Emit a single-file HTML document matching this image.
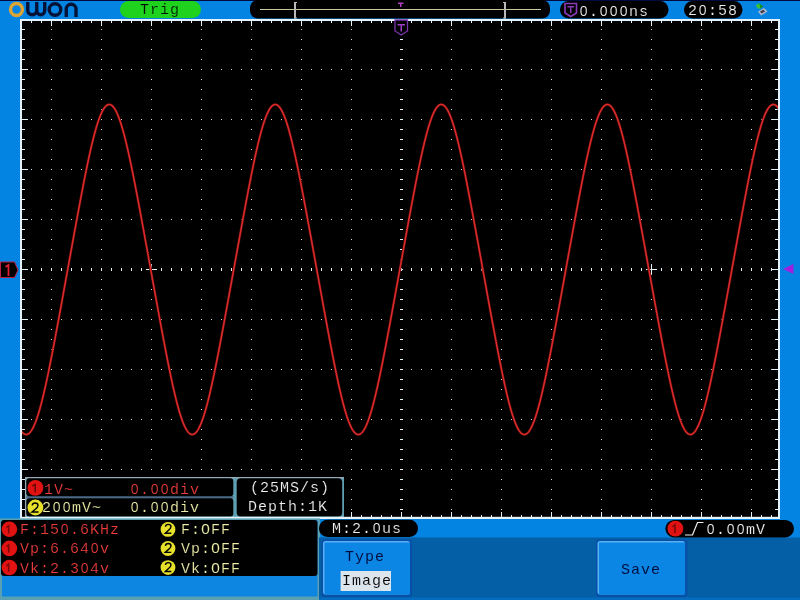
<!DOCTYPE html>
<html><head><meta charset="utf-8"><style>
html,body{margin:0;padding:0;width:800px;height:600px;overflow:hidden;background:#0484e2;position:relative;}
.z{display:inline-block;line-height:11px;width:10px;box-sizing:border-box;padding-left:0.8px;text-align:left;letter-spacing:0;font-family:"Liberation Sans",sans-serif;font-size:14px;}
.t{position:absolute;will-change:transform;font-family:"Liberation Mono",monospace;font-size:15px;letter-spacing:1px;line-height:15px;white-space:pre;}
.d{position:absolute;}
svg{position:absolute;left:0;top:0;}
</style></head><body>
<svg width="800" height="600" viewBox="0 0 800 600" shape-rendering="crispEdges">
<rect x="0" y="0" width="800" height="1" fill="#000a3c"/>
<rect x="20" y="19" width="760" height="500" fill="#e4f2fc"/><rect x="22" y="21" width="756" height="496" fill="#000"/><rect x="31" y="21" width="1" height="2" fill="#e4f2fc"/><rect x="31" y="515" width="1" height="2" fill="#e4f2fc"/><rect x="41" y="21" width="1" height="2" fill="#e4f2fc"/><rect x="41" y="515" width="1" height="2" fill="#e4f2fc"/><rect x="51" y="21" width="1" height="5" fill="#e4f2fc"/><rect x="51" y="512" width="1" height="5" fill="#e4f2fc"/><rect x="61" y="21" width="1" height="2" fill="#e4f2fc"/><rect x="61" y="515" width="1" height="2" fill="#e4f2fc"/><rect x="71" y="21" width="1" height="2" fill="#e4f2fc"/><rect x="71" y="515" width="1" height="2" fill="#e4f2fc"/><rect x="81" y="21" width="1" height="2" fill="#e4f2fc"/><rect x="81" y="515" width="1" height="2" fill="#e4f2fc"/><rect x="91" y="21" width="1" height="2" fill="#e4f2fc"/><rect x="91" y="515" width="1" height="2" fill="#e4f2fc"/><rect x="101" y="21" width="1" height="5" fill="#e4f2fc"/><rect x="101" y="512" width="1" height="5" fill="#e4f2fc"/><rect x="111" y="21" width="1" height="2" fill="#e4f2fc"/><rect x="111" y="515" width="1" height="2" fill="#e4f2fc"/><rect x="121" y="21" width="1" height="2" fill="#e4f2fc"/><rect x="121" y="515" width="1" height="2" fill="#e4f2fc"/><rect x="131" y="21" width="1" height="2" fill="#e4f2fc"/><rect x="131" y="515" width="1" height="2" fill="#e4f2fc"/><rect x="141" y="21" width="1" height="2" fill="#e4f2fc"/><rect x="141" y="515" width="1" height="2" fill="#e4f2fc"/><rect x="151" y="21" width="1" height="5" fill="#e4f2fc"/><rect x="151" y="512" width="1" height="5" fill="#e4f2fc"/><rect x="161" y="21" width="1" height="2" fill="#e4f2fc"/><rect x="161" y="515" width="1" height="2" fill="#e4f2fc"/><rect x="171" y="21" width="1" height="2" fill="#e4f2fc"/><rect x="171" y="515" width="1" height="2" fill="#e4f2fc"/><rect x="181" y="21" width="1" height="2" fill="#e4f2fc"/><rect x="181" y="515" width="1" height="2" fill="#e4f2fc"/><rect x="191" y="21" width="1" height="2" fill="#e4f2fc"/><rect x="191" y="515" width="1" height="2" fill="#e4f2fc"/><rect x="201" y="21" width="1" height="5" fill="#e4f2fc"/><rect x="201" y="512" width="1" height="5" fill="#e4f2fc"/><rect x="211" y="21" width="1" height="2" fill="#e4f2fc"/><rect x="211" y="515" width="1" height="2" fill="#e4f2fc"/><rect x="221" y="21" width="1" height="2" fill="#e4f2fc"/><rect x="221" y="515" width="1" height="2" fill="#e4f2fc"/><rect x="231" y="21" width="1" height="2" fill="#e4f2fc"/><rect x="231" y="515" width="1" height="2" fill="#e4f2fc"/><rect x="241" y="21" width="1" height="2" fill="#e4f2fc"/><rect x="241" y="515" width="1" height="2" fill="#e4f2fc"/><rect x="251" y="21" width="1" height="5" fill="#e4f2fc"/><rect x="251" y="512" width="1" height="5" fill="#e4f2fc"/><rect x="261" y="21" width="1" height="2" fill="#e4f2fc"/><rect x="261" y="515" width="1" height="2" fill="#e4f2fc"/><rect x="271" y="21" width="1" height="2" fill="#e4f2fc"/><rect x="271" y="515" width="1" height="2" fill="#e4f2fc"/><rect x="281" y="21" width="1" height="2" fill="#e4f2fc"/><rect x="281" y="515" width="1" height="2" fill="#e4f2fc"/><rect x="291" y="21" width="1" height="2" fill="#e4f2fc"/><rect x="291" y="515" width="1" height="2" fill="#e4f2fc"/><rect x="301" y="21" width="1" height="5" fill="#e4f2fc"/><rect x="301" y="512" width="1" height="5" fill="#e4f2fc"/><rect x="311" y="21" width="1" height="2" fill="#e4f2fc"/><rect x="311" y="515" width="1" height="2" fill="#e4f2fc"/><rect x="321" y="21" width="1" height="2" fill="#e4f2fc"/><rect x="321" y="515" width="1" height="2" fill="#e4f2fc"/><rect x="331" y="21" width="1" height="2" fill="#e4f2fc"/><rect x="331" y="515" width="1" height="2" fill="#e4f2fc"/><rect x="341" y="21" width="1" height="2" fill="#e4f2fc"/><rect x="341" y="515" width="1" height="2" fill="#e4f2fc"/><rect x="351" y="21" width="1" height="5" fill="#e4f2fc"/><rect x="351" y="512" width="1" height="5" fill="#e4f2fc"/><rect x="361" y="21" width="1" height="2" fill="#e4f2fc"/><rect x="361" y="515" width="1" height="2" fill="#e4f2fc"/><rect x="371" y="21" width="1" height="2" fill="#e4f2fc"/><rect x="371" y="515" width="1" height="2" fill="#e4f2fc"/><rect x="381" y="21" width="1" height="2" fill="#e4f2fc"/><rect x="381" y="515" width="1" height="2" fill="#e4f2fc"/><rect x="391" y="21" width="1" height="2" fill="#e4f2fc"/><rect x="391" y="515" width="1" height="2" fill="#e4f2fc"/><rect x="401" y="21" width="1" height="5" fill="#e4f2fc"/><rect x="401" y="512" width="1" height="5" fill="#e4f2fc"/><rect x="411" y="21" width="1" height="2" fill="#e4f2fc"/><rect x="411" y="515" width="1" height="2" fill="#e4f2fc"/><rect x="421" y="21" width="1" height="2" fill="#e4f2fc"/><rect x="421" y="515" width="1" height="2" fill="#e4f2fc"/><rect x="431" y="21" width="1" height="2" fill="#e4f2fc"/><rect x="431" y="515" width="1" height="2" fill="#e4f2fc"/><rect x="441" y="21" width="1" height="2" fill="#e4f2fc"/><rect x="441" y="515" width="1" height="2" fill="#e4f2fc"/><rect x="451" y="21" width="1" height="5" fill="#e4f2fc"/><rect x="451" y="512" width="1" height="5" fill="#e4f2fc"/><rect x="461" y="21" width="1" height="2" fill="#e4f2fc"/><rect x="461" y="515" width="1" height="2" fill="#e4f2fc"/><rect x="471" y="21" width="1" height="2" fill="#e4f2fc"/><rect x="471" y="515" width="1" height="2" fill="#e4f2fc"/><rect x="481" y="21" width="1" height="2" fill="#e4f2fc"/><rect x="481" y="515" width="1" height="2" fill="#e4f2fc"/><rect x="491" y="21" width="1" height="2" fill="#e4f2fc"/><rect x="491" y="515" width="1" height="2" fill="#e4f2fc"/><rect x="501" y="21" width="1" height="5" fill="#e4f2fc"/><rect x="501" y="512" width="1" height="5" fill="#e4f2fc"/><rect x="511" y="21" width="1" height="2" fill="#e4f2fc"/><rect x="511" y="515" width="1" height="2" fill="#e4f2fc"/><rect x="521" y="21" width="1" height="2" fill="#e4f2fc"/><rect x="521" y="515" width="1" height="2" fill="#e4f2fc"/><rect x="531" y="21" width="1" height="2" fill="#e4f2fc"/><rect x="531" y="515" width="1" height="2" fill="#e4f2fc"/><rect x="541" y="21" width="1" height="2" fill="#e4f2fc"/><rect x="541" y="515" width="1" height="2" fill="#e4f2fc"/><rect x="551" y="21" width="1" height="5" fill="#e4f2fc"/><rect x="551" y="512" width="1" height="5" fill="#e4f2fc"/><rect x="561" y="21" width="1" height="2" fill="#e4f2fc"/><rect x="561" y="515" width="1" height="2" fill="#e4f2fc"/><rect x="571" y="21" width="1" height="2" fill="#e4f2fc"/><rect x="571" y="515" width="1" height="2" fill="#e4f2fc"/><rect x="581" y="21" width="1" height="2" fill="#e4f2fc"/><rect x="581" y="515" width="1" height="2" fill="#e4f2fc"/><rect x="591" y="21" width="1" height="2" fill="#e4f2fc"/><rect x="591" y="515" width="1" height="2" fill="#e4f2fc"/><rect x="601" y="21" width="1" height="5" fill="#e4f2fc"/><rect x="601" y="512" width="1" height="5" fill="#e4f2fc"/><rect x="611" y="21" width="1" height="2" fill="#e4f2fc"/><rect x="611" y="515" width="1" height="2" fill="#e4f2fc"/><rect x="621" y="21" width="1" height="2" fill="#e4f2fc"/><rect x="621" y="515" width="1" height="2" fill="#e4f2fc"/><rect x="631" y="21" width="1" height="2" fill="#e4f2fc"/><rect x="631" y="515" width="1" height="2" fill="#e4f2fc"/><rect x="641" y="21" width="1" height="2" fill="#e4f2fc"/><rect x="641" y="515" width="1" height="2" fill="#e4f2fc"/><rect x="651" y="21" width="1" height="5" fill="#e4f2fc"/><rect x="651" y="512" width="1" height="5" fill="#e4f2fc"/><rect x="661" y="21" width="1" height="2" fill="#e4f2fc"/><rect x="661" y="515" width="1" height="2" fill="#e4f2fc"/><rect x="671" y="21" width="1" height="2" fill="#e4f2fc"/><rect x="671" y="515" width="1" height="2" fill="#e4f2fc"/><rect x="681" y="21" width="1" height="2" fill="#e4f2fc"/><rect x="681" y="515" width="1" height="2" fill="#e4f2fc"/><rect x="691" y="21" width="1" height="2" fill="#e4f2fc"/><rect x="691" y="515" width="1" height="2" fill="#e4f2fc"/><rect x="701" y="21" width="1" height="5" fill="#e4f2fc"/><rect x="701" y="512" width="1" height="5" fill="#e4f2fc"/><rect x="711" y="21" width="1" height="2" fill="#e4f2fc"/><rect x="711" y="515" width="1" height="2" fill="#e4f2fc"/><rect x="721" y="21" width="1" height="2" fill="#e4f2fc"/><rect x="721" y="515" width="1" height="2" fill="#e4f2fc"/><rect x="731" y="21" width="1" height="2" fill="#e4f2fc"/><rect x="731" y="515" width="1" height="2" fill="#e4f2fc"/><rect x="741" y="21" width="1" height="2" fill="#e4f2fc"/><rect x="741" y="515" width="1" height="2" fill="#e4f2fc"/><rect x="751" y="21" width="1" height="5" fill="#e4f2fc"/><rect x="751" y="512" width="1" height="5" fill="#e4f2fc"/><rect x="761" y="21" width="1" height="2" fill="#e4f2fc"/><rect x="761" y="515" width="1" height="2" fill="#e4f2fc"/><rect x="771" y="21" width="1" height="2" fill="#e4f2fc"/><rect x="771" y="515" width="1" height="2" fill="#e4f2fc"/><rect x="22" y="29" width="3" height="1" fill="#e4f2fc"/><rect x="775" y="29" width="3" height="1" fill="#e4f2fc"/><rect x="22" y="39" width="3" height="1" fill="#e4f2fc"/><rect x="775" y="39" width="3" height="1" fill="#e4f2fc"/><rect x="22" y="49" width="3" height="1" fill="#e4f2fc"/><rect x="775" y="49" width="3" height="1" fill="#e4f2fc"/><rect x="22" y="59" width="3" height="1" fill="#e4f2fc"/><rect x="775" y="59" width="3" height="1" fill="#e4f2fc"/><rect x="22" y="69" width="6" height="1" fill="#e4f2fc"/><rect x="772" y="69" width="6" height="1" fill="#e4f2fc"/><rect x="22" y="79" width="3" height="1" fill="#e4f2fc"/><rect x="775" y="79" width="3" height="1" fill="#e4f2fc"/><rect x="22" y="89" width="3" height="1" fill="#e4f2fc"/><rect x="775" y="89" width="3" height="1" fill="#e4f2fc"/><rect x="22" y="99" width="3" height="1" fill="#e4f2fc"/><rect x="775" y="99" width="3" height="1" fill="#e4f2fc"/><rect x="22" y="109" width="3" height="1" fill="#e4f2fc"/><rect x="775" y="109" width="3" height="1" fill="#e4f2fc"/><rect x="22" y="119" width="6" height="1" fill="#e4f2fc"/><rect x="772" y="119" width="6" height="1" fill="#e4f2fc"/><rect x="22" y="129" width="3" height="1" fill="#e4f2fc"/><rect x="775" y="129" width="3" height="1" fill="#e4f2fc"/><rect x="22" y="139" width="3" height="1" fill="#e4f2fc"/><rect x="775" y="139" width="3" height="1" fill="#e4f2fc"/><rect x="22" y="149" width="3" height="1" fill="#e4f2fc"/><rect x="775" y="149" width="3" height="1" fill="#e4f2fc"/><rect x="22" y="159" width="3" height="1" fill="#e4f2fc"/><rect x="775" y="159" width="3" height="1" fill="#e4f2fc"/><rect x="22" y="169" width="6" height="1" fill="#e4f2fc"/><rect x="772" y="169" width="6" height="1" fill="#e4f2fc"/><rect x="22" y="179" width="3" height="1" fill="#e4f2fc"/><rect x="775" y="179" width="3" height="1" fill="#e4f2fc"/><rect x="22" y="189" width="3" height="1" fill="#e4f2fc"/><rect x="775" y="189" width="3" height="1" fill="#e4f2fc"/><rect x="22" y="199" width="3" height="1" fill="#e4f2fc"/><rect x="775" y="199" width="3" height="1" fill="#e4f2fc"/><rect x="22" y="209" width="3" height="1" fill="#e4f2fc"/><rect x="775" y="209" width="3" height="1" fill="#e4f2fc"/><rect x="22" y="219" width="6" height="1" fill="#e4f2fc"/><rect x="772" y="219" width="6" height="1" fill="#e4f2fc"/><rect x="22" y="229" width="3" height="1" fill="#e4f2fc"/><rect x="775" y="229" width="3" height="1" fill="#e4f2fc"/><rect x="22" y="239" width="3" height="1" fill="#e4f2fc"/><rect x="775" y="239" width="3" height="1" fill="#e4f2fc"/><rect x="22" y="249" width="3" height="1" fill="#e4f2fc"/><rect x="775" y="249" width="3" height="1" fill="#e4f2fc"/><rect x="22" y="259" width="3" height="1" fill="#e4f2fc"/><rect x="775" y="259" width="3" height="1" fill="#e4f2fc"/><rect x="22" y="269" width="6" height="1" fill="#e4f2fc"/><rect x="772" y="269" width="6" height="1" fill="#e4f2fc"/><rect x="22" y="279" width="3" height="1" fill="#e4f2fc"/><rect x="775" y="279" width="3" height="1" fill="#e4f2fc"/><rect x="22" y="289" width="3" height="1" fill="#e4f2fc"/><rect x="775" y="289" width="3" height="1" fill="#e4f2fc"/><rect x="22" y="299" width="3" height="1" fill="#e4f2fc"/><rect x="775" y="299" width="3" height="1" fill="#e4f2fc"/><rect x="22" y="309" width="3" height="1" fill="#e4f2fc"/><rect x="775" y="309" width="3" height="1" fill="#e4f2fc"/><rect x="22" y="319" width="6" height="1" fill="#e4f2fc"/><rect x="772" y="319" width="6" height="1" fill="#e4f2fc"/><rect x="22" y="329" width="3" height="1" fill="#e4f2fc"/><rect x="775" y="329" width="3" height="1" fill="#e4f2fc"/><rect x="22" y="339" width="3" height="1" fill="#e4f2fc"/><rect x="775" y="339" width="3" height="1" fill="#e4f2fc"/><rect x="22" y="349" width="3" height="1" fill="#e4f2fc"/><rect x="775" y="349" width="3" height="1" fill="#e4f2fc"/><rect x="22" y="359" width="3" height="1" fill="#e4f2fc"/><rect x="775" y="359" width="3" height="1" fill="#e4f2fc"/><rect x="22" y="369" width="6" height="1" fill="#e4f2fc"/><rect x="772" y="369" width="6" height="1" fill="#e4f2fc"/><rect x="22" y="379" width="3" height="1" fill="#e4f2fc"/><rect x="775" y="379" width="3" height="1" fill="#e4f2fc"/><rect x="22" y="389" width="3" height="1" fill="#e4f2fc"/><rect x="775" y="389" width="3" height="1" fill="#e4f2fc"/><rect x="22" y="399" width="3" height="1" fill="#e4f2fc"/><rect x="775" y="399" width="3" height="1" fill="#e4f2fc"/><rect x="22" y="409" width="3" height="1" fill="#e4f2fc"/><rect x="775" y="409" width="3" height="1" fill="#e4f2fc"/><rect x="22" y="419" width="6" height="1" fill="#e4f2fc"/><rect x="772" y="419" width="6" height="1" fill="#e4f2fc"/><rect x="22" y="429" width="3" height="1" fill="#e4f2fc"/><rect x="775" y="429" width="3" height="1" fill="#e4f2fc"/><rect x="22" y="439" width="3" height="1" fill="#e4f2fc"/><rect x="775" y="439" width="3" height="1" fill="#e4f2fc"/><rect x="22" y="449" width="3" height="1" fill="#e4f2fc"/><rect x="775" y="449" width="3" height="1" fill="#e4f2fc"/><rect x="22" y="459" width="3" height="1" fill="#e4f2fc"/><rect x="775" y="459" width="3" height="1" fill="#e4f2fc"/><rect x="22" y="469" width="6" height="1" fill="#e4f2fc"/><rect x="772" y="469" width="6" height="1" fill="#e4f2fc"/><rect x="22" y="479" width="3" height="1" fill="#e4f2fc"/><rect x="775" y="479" width="3" height="1" fill="#e4f2fc"/><rect x="22" y="489" width="3" height="1" fill="#e4f2fc"/><rect x="775" y="489" width="3" height="1" fill="#e4f2fc"/><rect x="22" y="499" width="3" height="1" fill="#e4f2fc"/><rect x="775" y="499" width="3" height="1" fill="#e4f2fc"/><rect x="22" y="509" width="3" height="1" fill="#e4f2fc"/><rect x="775" y="509" width="3" height="1" fill="#e4f2fc"/><rect x="51" y="29" width="1" height="1" fill="#d8d8d8"/><rect x="51" y="39" width="1" height="1" fill="#d8d8d8"/><rect x="51" y="49" width="1" height="1" fill="#d8d8d8"/><rect x="51" y="59" width="1" height="1" fill="#d8d8d8"/><rect x="51" y="79" width="1" height="1" fill="#d8d8d8"/><rect x="51" y="89" width="1" height="1" fill="#d8d8d8"/><rect x="51" y="99" width="1" height="1" fill="#d8d8d8"/><rect x="51" y="109" width="1" height="1" fill="#d8d8d8"/><rect x="51" y="129" width="1" height="1" fill="#d8d8d8"/><rect x="51" y="139" width="1" height="1" fill="#d8d8d8"/><rect x="51" y="149" width="1" height="1" fill="#d8d8d8"/><rect x="51" y="159" width="1" height="1" fill="#d8d8d8"/><rect x="51" y="179" width="1" height="1" fill="#d8d8d8"/><rect x="51" y="189" width="1" height="1" fill="#d8d8d8"/><rect x="51" y="199" width="1" height="1" fill="#d8d8d8"/><rect x="51" y="209" width="1" height="1" fill="#d8d8d8"/><rect x="51" y="229" width="1" height="1" fill="#d8d8d8"/><rect x="51" y="239" width="1" height="1" fill="#d8d8d8"/><rect x="51" y="249" width="1" height="1" fill="#d8d8d8"/><rect x="51" y="259" width="1" height="1" fill="#d8d8d8"/><rect x="51" y="279" width="1" height="1" fill="#d8d8d8"/><rect x="51" y="289" width="1" height="1" fill="#d8d8d8"/><rect x="51" y="299" width="1" height="1" fill="#d8d8d8"/><rect x="51" y="309" width="1" height="1" fill="#d8d8d8"/><rect x="51" y="329" width="1" height="1" fill="#d8d8d8"/><rect x="51" y="339" width="1" height="1" fill="#d8d8d8"/><rect x="51" y="349" width="1" height="1" fill="#d8d8d8"/><rect x="51" y="359" width="1" height="1" fill="#d8d8d8"/><rect x="51" y="379" width="1" height="1" fill="#d8d8d8"/><rect x="51" y="389" width="1" height="1" fill="#d8d8d8"/><rect x="51" y="399" width="1" height="1" fill="#d8d8d8"/><rect x="51" y="409" width="1" height="1" fill="#d8d8d8"/><rect x="51" y="429" width="1" height="1" fill="#d8d8d8"/><rect x="51" y="439" width="1" height="1" fill="#d8d8d8"/><rect x="51" y="449" width="1" height="1" fill="#d8d8d8"/><rect x="51" y="459" width="1" height="1" fill="#d8d8d8"/><rect x="51" y="479" width="1" height="1" fill="#d8d8d8"/><rect x="51" y="489" width="1" height="1" fill="#d8d8d8"/><rect x="51" y="499" width="1" height="1" fill="#d8d8d8"/><rect x="51" y="509" width="1" height="1" fill="#d8d8d8"/><rect x="101" y="29" width="1" height="1" fill="#d8d8d8"/><rect x="101" y="39" width="1" height="1" fill="#d8d8d8"/><rect x="101" y="49" width="1" height="1" fill="#d8d8d8"/><rect x="101" y="59" width="1" height="1" fill="#d8d8d8"/><rect x="101" y="79" width="1" height="1" fill="#d8d8d8"/><rect x="101" y="89" width="1" height="1" fill="#d8d8d8"/><rect x="101" y="99" width="1" height="1" fill="#d8d8d8"/><rect x="101" y="109" width="1" height="1" fill="#d8d8d8"/><rect x="101" y="129" width="1" height="1" fill="#d8d8d8"/><rect x="101" y="139" width="1" height="1" fill="#d8d8d8"/><rect x="101" y="149" width="1" height="1" fill="#d8d8d8"/><rect x="101" y="159" width="1" height="1" fill="#d8d8d8"/><rect x="101" y="179" width="1" height="1" fill="#d8d8d8"/><rect x="101" y="189" width="1" height="1" fill="#d8d8d8"/><rect x="101" y="199" width="1" height="1" fill="#d8d8d8"/><rect x="101" y="209" width="1" height="1" fill="#d8d8d8"/><rect x="101" y="229" width="1" height="1" fill="#d8d8d8"/><rect x="101" y="239" width="1" height="1" fill="#d8d8d8"/><rect x="101" y="249" width="1" height="1" fill="#d8d8d8"/><rect x="101" y="259" width="1" height="1" fill="#d8d8d8"/><rect x="101" y="279" width="1" height="1" fill="#d8d8d8"/><rect x="101" y="289" width="1" height="1" fill="#d8d8d8"/><rect x="101" y="299" width="1" height="1" fill="#d8d8d8"/><rect x="101" y="309" width="1" height="1" fill="#d8d8d8"/><rect x="101" y="329" width="1" height="1" fill="#d8d8d8"/><rect x="101" y="339" width="1" height="1" fill="#d8d8d8"/><rect x="101" y="349" width="1" height="1" fill="#d8d8d8"/><rect x="101" y="359" width="1" height="1" fill="#d8d8d8"/><rect x="101" y="379" width="1" height="1" fill="#d8d8d8"/><rect x="101" y="389" width="1" height="1" fill="#d8d8d8"/><rect x="101" y="399" width="1" height="1" fill="#d8d8d8"/><rect x="101" y="409" width="1" height="1" fill="#d8d8d8"/><rect x="101" y="429" width="1" height="1" fill="#d8d8d8"/><rect x="101" y="439" width="1" height="1" fill="#d8d8d8"/><rect x="101" y="449" width="1" height="1" fill="#d8d8d8"/><rect x="101" y="459" width="1" height="1" fill="#d8d8d8"/><rect x="101" y="479" width="1" height="1" fill="#d8d8d8"/><rect x="101" y="489" width="1" height="1" fill="#d8d8d8"/><rect x="101" y="499" width="1" height="1" fill="#d8d8d8"/><rect x="101" y="509" width="1" height="1" fill="#d8d8d8"/><rect x="151" y="29" width="1" height="1" fill="#d8d8d8"/><rect x="151" y="39" width="1" height="1" fill="#d8d8d8"/><rect x="151" y="49" width="1" height="1" fill="#d8d8d8"/><rect x="151" y="59" width="1" height="1" fill="#d8d8d8"/><rect x="151" y="79" width="1" height="1" fill="#d8d8d8"/><rect x="151" y="89" width="1" height="1" fill="#d8d8d8"/><rect x="151" y="99" width="1" height="1" fill="#d8d8d8"/><rect x="151" y="109" width="1" height="1" fill="#d8d8d8"/><rect x="151" y="129" width="1" height="1" fill="#d8d8d8"/><rect x="151" y="139" width="1" height="1" fill="#d8d8d8"/><rect x="151" y="149" width="1" height="1" fill="#d8d8d8"/><rect x="151" y="159" width="1" height="1" fill="#d8d8d8"/><rect x="151" y="179" width="1" height="1" fill="#d8d8d8"/><rect x="151" y="189" width="1" height="1" fill="#d8d8d8"/><rect x="151" y="199" width="1" height="1" fill="#d8d8d8"/><rect x="151" y="209" width="1" height="1" fill="#d8d8d8"/><rect x="151" y="229" width="1" height="1" fill="#d8d8d8"/><rect x="151" y="239" width="1" height="1" fill="#d8d8d8"/><rect x="151" y="249" width="1" height="1" fill="#d8d8d8"/><rect x="151" y="259" width="1" height="1" fill="#d8d8d8"/><rect x="151" y="279" width="1" height="1" fill="#d8d8d8"/><rect x="151" y="289" width="1" height="1" fill="#d8d8d8"/><rect x="151" y="299" width="1" height="1" fill="#d8d8d8"/><rect x="151" y="309" width="1" height="1" fill="#d8d8d8"/><rect x="151" y="329" width="1" height="1" fill="#d8d8d8"/><rect x="151" y="339" width="1" height="1" fill="#d8d8d8"/><rect x="151" y="349" width="1" height="1" fill="#d8d8d8"/><rect x="151" y="359" width="1" height="1" fill="#d8d8d8"/><rect x="151" y="379" width="1" height="1" fill="#d8d8d8"/><rect x="151" y="389" width="1" height="1" fill="#d8d8d8"/><rect x="151" y="399" width="1" height="1" fill="#d8d8d8"/><rect x="151" y="409" width="1" height="1" fill="#d8d8d8"/><rect x="151" y="429" width="1" height="1" fill="#d8d8d8"/><rect x="151" y="439" width="1" height="1" fill="#d8d8d8"/><rect x="151" y="449" width="1" height="1" fill="#d8d8d8"/><rect x="151" y="459" width="1" height="1" fill="#d8d8d8"/><rect x="151" y="479" width="1" height="1" fill="#d8d8d8"/><rect x="151" y="489" width="1" height="1" fill="#d8d8d8"/><rect x="151" y="499" width="1" height="1" fill="#d8d8d8"/><rect x="151" y="509" width="1" height="1" fill="#d8d8d8"/><rect x="201" y="29" width="1" height="1" fill="#d8d8d8"/><rect x="201" y="39" width="1" height="1" fill="#d8d8d8"/><rect x="201" y="49" width="1" height="1" fill="#d8d8d8"/><rect x="201" y="59" width="1" height="1" fill="#d8d8d8"/><rect x="201" y="79" width="1" height="1" fill="#d8d8d8"/><rect x="201" y="89" width="1" height="1" fill="#d8d8d8"/><rect x="201" y="99" width="1" height="1" fill="#d8d8d8"/><rect x="201" y="109" width="1" height="1" fill="#d8d8d8"/><rect x="201" y="129" width="1" height="1" fill="#d8d8d8"/><rect x="201" y="139" width="1" height="1" fill="#d8d8d8"/><rect x="201" y="149" width="1" height="1" fill="#d8d8d8"/><rect x="201" y="159" width="1" height="1" fill="#d8d8d8"/><rect x="201" y="179" width="1" height="1" fill="#d8d8d8"/><rect x="201" y="189" width="1" height="1" fill="#d8d8d8"/><rect x="201" y="199" width="1" height="1" fill="#d8d8d8"/><rect x="201" y="209" width="1" height="1" fill="#d8d8d8"/><rect x="201" y="229" width="1" height="1" fill="#d8d8d8"/><rect x="201" y="239" width="1" height="1" fill="#d8d8d8"/><rect x="201" y="249" width="1" height="1" fill="#d8d8d8"/><rect x="201" y="259" width="1" height="1" fill="#d8d8d8"/><rect x="201" y="279" width="1" height="1" fill="#d8d8d8"/><rect x="201" y="289" width="1" height="1" fill="#d8d8d8"/><rect x="201" y="299" width="1" height="1" fill="#d8d8d8"/><rect x="201" y="309" width="1" height="1" fill="#d8d8d8"/><rect x="201" y="329" width="1" height="1" fill="#d8d8d8"/><rect x="201" y="339" width="1" height="1" fill="#d8d8d8"/><rect x="201" y="349" width="1" height="1" fill="#d8d8d8"/><rect x="201" y="359" width="1" height="1" fill="#d8d8d8"/><rect x="201" y="379" width="1" height="1" fill="#d8d8d8"/><rect x="201" y="389" width="1" height="1" fill="#d8d8d8"/><rect x="201" y="399" width="1" height="1" fill="#d8d8d8"/><rect x="201" y="409" width="1" height="1" fill="#d8d8d8"/><rect x="201" y="429" width="1" height="1" fill="#d8d8d8"/><rect x="201" y="439" width="1" height="1" fill="#d8d8d8"/><rect x="201" y="449" width="1" height="1" fill="#d8d8d8"/><rect x="201" y="459" width="1" height="1" fill="#d8d8d8"/><rect x="201" y="479" width="1" height="1" fill="#d8d8d8"/><rect x="201" y="489" width="1" height="1" fill="#d8d8d8"/><rect x="201" y="499" width="1" height="1" fill="#d8d8d8"/><rect x="201" y="509" width="1" height="1" fill="#d8d8d8"/><rect x="251" y="29" width="1" height="1" fill="#d8d8d8"/><rect x="251" y="39" width="1" height="1" fill="#d8d8d8"/><rect x="251" y="49" width="1" height="1" fill="#d8d8d8"/><rect x="251" y="59" width="1" height="1" fill="#d8d8d8"/><rect x="251" y="79" width="1" height="1" fill="#d8d8d8"/><rect x="251" y="89" width="1" height="1" fill="#d8d8d8"/><rect x="251" y="99" width="1" height="1" fill="#d8d8d8"/><rect x="251" y="109" width="1" height="1" fill="#d8d8d8"/><rect x="251" y="129" width="1" height="1" fill="#d8d8d8"/><rect x="251" y="139" width="1" height="1" fill="#d8d8d8"/><rect x="251" y="149" width="1" height="1" fill="#d8d8d8"/><rect x="251" y="159" width="1" height="1" fill="#d8d8d8"/><rect x="251" y="179" width="1" height="1" fill="#d8d8d8"/><rect x="251" y="189" width="1" height="1" fill="#d8d8d8"/><rect x="251" y="199" width="1" height="1" fill="#d8d8d8"/><rect x="251" y="209" width="1" height="1" fill="#d8d8d8"/><rect x="251" y="229" width="1" height="1" fill="#d8d8d8"/><rect x="251" y="239" width="1" height="1" fill="#d8d8d8"/><rect x="251" y="249" width="1" height="1" fill="#d8d8d8"/><rect x="251" y="259" width="1" height="1" fill="#d8d8d8"/><rect x="251" y="279" width="1" height="1" fill="#d8d8d8"/><rect x="251" y="289" width="1" height="1" fill="#d8d8d8"/><rect x="251" y="299" width="1" height="1" fill="#d8d8d8"/><rect x="251" y="309" width="1" height="1" fill="#d8d8d8"/><rect x="251" y="329" width="1" height="1" fill="#d8d8d8"/><rect x="251" y="339" width="1" height="1" fill="#d8d8d8"/><rect x="251" y="349" width="1" height="1" fill="#d8d8d8"/><rect x="251" y="359" width="1" height="1" fill="#d8d8d8"/><rect x="251" y="379" width="1" height="1" fill="#d8d8d8"/><rect x="251" y="389" width="1" height="1" fill="#d8d8d8"/><rect x="251" y="399" width="1" height="1" fill="#d8d8d8"/><rect x="251" y="409" width="1" height="1" fill="#d8d8d8"/><rect x="251" y="429" width="1" height="1" fill="#d8d8d8"/><rect x="251" y="439" width="1" height="1" fill="#d8d8d8"/><rect x="251" y="449" width="1" height="1" fill="#d8d8d8"/><rect x="251" y="459" width="1" height="1" fill="#d8d8d8"/><rect x="251" y="479" width="1" height="1" fill="#d8d8d8"/><rect x="251" y="489" width="1" height="1" fill="#d8d8d8"/><rect x="251" y="499" width="1" height="1" fill="#d8d8d8"/><rect x="251" y="509" width="1" height="1" fill="#d8d8d8"/><rect x="301" y="29" width="1" height="1" fill="#d8d8d8"/><rect x="301" y="39" width="1" height="1" fill="#d8d8d8"/><rect x="301" y="49" width="1" height="1" fill="#d8d8d8"/><rect x="301" y="59" width="1" height="1" fill="#d8d8d8"/><rect x="301" y="79" width="1" height="1" fill="#d8d8d8"/><rect x="301" y="89" width="1" height="1" fill="#d8d8d8"/><rect x="301" y="99" width="1" height="1" fill="#d8d8d8"/><rect x="301" y="109" width="1" height="1" fill="#d8d8d8"/><rect x="301" y="129" width="1" height="1" fill="#d8d8d8"/><rect x="301" y="139" width="1" height="1" fill="#d8d8d8"/><rect x="301" y="149" width="1" height="1" fill="#d8d8d8"/><rect x="301" y="159" width="1" height="1" fill="#d8d8d8"/><rect x="301" y="179" width="1" height="1" fill="#d8d8d8"/><rect x="301" y="189" width="1" height="1" fill="#d8d8d8"/><rect x="301" y="199" width="1" height="1" fill="#d8d8d8"/><rect x="301" y="209" width="1" height="1" fill="#d8d8d8"/><rect x="301" y="229" width="1" height="1" fill="#d8d8d8"/><rect x="301" y="239" width="1" height="1" fill="#d8d8d8"/><rect x="301" y="249" width="1" height="1" fill="#d8d8d8"/><rect x="301" y="259" width="1" height="1" fill="#d8d8d8"/><rect x="301" y="279" width="1" height="1" fill="#d8d8d8"/><rect x="301" y="289" width="1" height="1" fill="#d8d8d8"/><rect x="301" y="299" width="1" height="1" fill="#d8d8d8"/><rect x="301" y="309" width="1" height="1" fill="#d8d8d8"/><rect x="301" y="329" width="1" height="1" fill="#d8d8d8"/><rect x="301" y="339" width="1" height="1" fill="#d8d8d8"/><rect x="301" y="349" width="1" height="1" fill="#d8d8d8"/><rect x="301" y="359" width="1" height="1" fill="#d8d8d8"/><rect x="301" y="379" width="1" height="1" fill="#d8d8d8"/><rect x="301" y="389" width="1" height="1" fill="#d8d8d8"/><rect x="301" y="399" width="1" height="1" fill="#d8d8d8"/><rect x="301" y="409" width="1" height="1" fill="#d8d8d8"/><rect x="301" y="429" width="1" height="1" fill="#d8d8d8"/><rect x="301" y="439" width="1" height="1" fill="#d8d8d8"/><rect x="301" y="449" width="1" height="1" fill="#d8d8d8"/><rect x="301" y="459" width="1" height="1" fill="#d8d8d8"/><rect x="301" y="479" width="1" height="1" fill="#d8d8d8"/><rect x="301" y="489" width="1" height="1" fill="#d8d8d8"/><rect x="301" y="499" width="1" height="1" fill="#d8d8d8"/><rect x="301" y="509" width="1" height="1" fill="#d8d8d8"/><rect x="351" y="29" width="1" height="1" fill="#d8d8d8"/><rect x="351" y="39" width="1" height="1" fill="#d8d8d8"/><rect x="351" y="49" width="1" height="1" fill="#d8d8d8"/><rect x="351" y="59" width="1" height="1" fill="#d8d8d8"/><rect x="351" y="79" width="1" height="1" fill="#d8d8d8"/><rect x="351" y="89" width="1" height="1" fill="#d8d8d8"/><rect x="351" y="99" width="1" height="1" fill="#d8d8d8"/><rect x="351" y="109" width="1" height="1" fill="#d8d8d8"/><rect x="351" y="129" width="1" height="1" fill="#d8d8d8"/><rect x="351" y="139" width="1" height="1" fill="#d8d8d8"/><rect x="351" y="149" width="1" height="1" fill="#d8d8d8"/><rect x="351" y="159" width="1" height="1" fill="#d8d8d8"/><rect x="351" y="179" width="1" height="1" fill="#d8d8d8"/><rect x="351" y="189" width="1" height="1" fill="#d8d8d8"/><rect x="351" y="199" width="1" height="1" fill="#d8d8d8"/><rect x="351" y="209" width="1" height="1" fill="#d8d8d8"/><rect x="351" y="229" width="1" height="1" fill="#d8d8d8"/><rect x="351" y="239" width="1" height="1" fill="#d8d8d8"/><rect x="351" y="249" width="1" height="1" fill="#d8d8d8"/><rect x="351" y="259" width="1" height="1" fill="#d8d8d8"/><rect x="351" y="279" width="1" height="1" fill="#d8d8d8"/><rect x="351" y="289" width="1" height="1" fill="#d8d8d8"/><rect x="351" y="299" width="1" height="1" fill="#d8d8d8"/><rect x="351" y="309" width="1" height="1" fill="#d8d8d8"/><rect x="351" y="329" width="1" height="1" fill="#d8d8d8"/><rect x="351" y="339" width="1" height="1" fill="#d8d8d8"/><rect x="351" y="349" width="1" height="1" fill="#d8d8d8"/><rect x="351" y="359" width="1" height="1" fill="#d8d8d8"/><rect x="351" y="379" width="1" height="1" fill="#d8d8d8"/><rect x="351" y="389" width="1" height="1" fill="#d8d8d8"/><rect x="351" y="399" width="1" height="1" fill="#d8d8d8"/><rect x="351" y="409" width="1" height="1" fill="#d8d8d8"/><rect x="351" y="429" width="1" height="1" fill="#d8d8d8"/><rect x="351" y="439" width="1" height="1" fill="#d8d8d8"/><rect x="351" y="449" width="1" height="1" fill="#d8d8d8"/><rect x="351" y="459" width="1" height="1" fill="#d8d8d8"/><rect x="351" y="479" width="1" height="1" fill="#d8d8d8"/><rect x="351" y="489" width="1" height="1" fill="#d8d8d8"/><rect x="351" y="499" width="1" height="1" fill="#d8d8d8"/><rect x="351" y="509" width="1" height="1" fill="#d8d8d8"/><rect x="451" y="29" width="1" height="1" fill="#d8d8d8"/><rect x="451" y="39" width="1" height="1" fill="#d8d8d8"/><rect x="451" y="49" width="1" height="1" fill="#d8d8d8"/><rect x="451" y="59" width="1" height="1" fill="#d8d8d8"/><rect x="451" y="79" width="1" height="1" fill="#d8d8d8"/><rect x="451" y="89" width="1" height="1" fill="#d8d8d8"/><rect x="451" y="99" width="1" height="1" fill="#d8d8d8"/><rect x="451" y="109" width="1" height="1" fill="#d8d8d8"/><rect x="451" y="129" width="1" height="1" fill="#d8d8d8"/><rect x="451" y="139" width="1" height="1" fill="#d8d8d8"/><rect x="451" y="149" width="1" height="1" fill="#d8d8d8"/><rect x="451" y="159" width="1" height="1" fill="#d8d8d8"/><rect x="451" y="179" width="1" height="1" fill="#d8d8d8"/><rect x="451" y="189" width="1" height="1" fill="#d8d8d8"/><rect x="451" y="199" width="1" height="1" fill="#d8d8d8"/><rect x="451" y="209" width="1" height="1" fill="#d8d8d8"/><rect x="451" y="229" width="1" height="1" fill="#d8d8d8"/><rect x="451" y="239" width="1" height="1" fill="#d8d8d8"/><rect x="451" y="249" width="1" height="1" fill="#d8d8d8"/><rect x="451" y="259" width="1" height="1" fill="#d8d8d8"/><rect x="451" y="279" width="1" height="1" fill="#d8d8d8"/><rect x="451" y="289" width="1" height="1" fill="#d8d8d8"/><rect x="451" y="299" width="1" height="1" fill="#d8d8d8"/><rect x="451" y="309" width="1" height="1" fill="#d8d8d8"/><rect x="451" y="329" width="1" height="1" fill="#d8d8d8"/><rect x="451" y="339" width="1" height="1" fill="#d8d8d8"/><rect x="451" y="349" width="1" height="1" fill="#d8d8d8"/><rect x="451" y="359" width="1" height="1" fill="#d8d8d8"/><rect x="451" y="379" width="1" height="1" fill="#d8d8d8"/><rect x="451" y="389" width="1" height="1" fill="#d8d8d8"/><rect x="451" y="399" width="1" height="1" fill="#d8d8d8"/><rect x="451" y="409" width="1" height="1" fill="#d8d8d8"/><rect x="451" y="429" width="1" height="1" fill="#d8d8d8"/><rect x="451" y="439" width="1" height="1" fill="#d8d8d8"/><rect x="451" y="449" width="1" height="1" fill="#d8d8d8"/><rect x="451" y="459" width="1" height="1" fill="#d8d8d8"/><rect x="451" y="479" width="1" height="1" fill="#d8d8d8"/><rect x="451" y="489" width="1" height="1" fill="#d8d8d8"/><rect x="451" y="499" width="1" height="1" fill="#d8d8d8"/><rect x="451" y="509" width="1" height="1" fill="#d8d8d8"/><rect x="501" y="29" width="1" height="1" fill="#d8d8d8"/><rect x="501" y="39" width="1" height="1" fill="#d8d8d8"/><rect x="501" y="49" width="1" height="1" fill="#d8d8d8"/><rect x="501" y="59" width="1" height="1" fill="#d8d8d8"/><rect x="501" y="79" width="1" height="1" fill="#d8d8d8"/><rect x="501" y="89" width="1" height="1" fill="#d8d8d8"/><rect x="501" y="99" width="1" height="1" fill="#d8d8d8"/><rect x="501" y="109" width="1" height="1" fill="#d8d8d8"/><rect x="501" y="129" width="1" height="1" fill="#d8d8d8"/><rect x="501" y="139" width="1" height="1" fill="#d8d8d8"/><rect x="501" y="149" width="1" height="1" fill="#d8d8d8"/><rect x="501" y="159" width="1" height="1" fill="#d8d8d8"/><rect x="501" y="179" width="1" height="1" fill="#d8d8d8"/><rect x="501" y="189" width="1" height="1" fill="#d8d8d8"/><rect x="501" y="199" width="1" height="1" fill="#d8d8d8"/><rect x="501" y="209" width="1" height="1" fill="#d8d8d8"/><rect x="501" y="229" width="1" height="1" fill="#d8d8d8"/><rect x="501" y="239" width="1" height="1" fill="#d8d8d8"/><rect x="501" y="249" width="1" height="1" fill="#d8d8d8"/><rect x="501" y="259" width="1" height="1" fill="#d8d8d8"/><rect x="501" y="279" width="1" height="1" fill="#d8d8d8"/><rect x="501" y="289" width="1" height="1" fill="#d8d8d8"/><rect x="501" y="299" width="1" height="1" fill="#d8d8d8"/><rect x="501" y="309" width="1" height="1" fill="#d8d8d8"/><rect x="501" y="329" width="1" height="1" fill="#d8d8d8"/><rect x="501" y="339" width="1" height="1" fill="#d8d8d8"/><rect x="501" y="349" width="1" height="1" fill="#d8d8d8"/><rect x="501" y="359" width="1" height="1" fill="#d8d8d8"/><rect x="501" y="379" width="1" height="1" fill="#d8d8d8"/><rect x="501" y="389" width="1" height="1" fill="#d8d8d8"/><rect x="501" y="399" width="1" height="1" fill="#d8d8d8"/><rect x="501" y="409" width="1" height="1" fill="#d8d8d8"/><rect x="501" y="429" width="1" height="1" fill="#d8d8d8"/><rect x="501" y="439" width="1" height="1" fill="#d8d8d8"/><rect x="501" y="449" width="1" height="1" fill="#d8d8d8"/><rect x="501" y="459" width="1" height="1" fill="#d8d8d8"/><rect x="501" y="479" width="1" height="1" fill="#d8d8d8"/><rect x="501" y="489" width="1" height="1" fill="#d8d8d8"/><rect x="501" y="499" width="1" height="1" fill="#d8d8d8"/><rect x="501" y="509" width="1" height="1" fill="#d8d8d8"/><rect x="551" y="29" width="1" height="1" fill="#d8d8d8"/><rect x="551" y="39" width="1" height="1" fill="#d8d8d8"/><rect x="551" y="49" width="1" height="1" fill="#d8d8d8"/><rect x="551" y="59" width="1" height="1" fill="#d8d8d8"/><rect x="551" y="79" width="1" height="1" fill="#d8d8d8"/><rect x="551" y="89" width="1" height="1" fill="#d8d8d8"/><rect x="551" y="99" width="1" height="1" fill="#d8d8d8"/><rect x="551" y="109" width="1" height="1" fill="#d8d8d8"/><rect x="551" y="129" width="1" height="1" fill="#d8d8d8"/><rect x="551" y="139" width="1" height="1" fill="#d8d8d8"/><rect x="551" y="149" width="1" height="1" fill="#d8d8d8"/><rect x="551" y="159" width="1" height="1" fill="#d8d8d8"/><rect x="551" y="179" width="1" height="1" fill="#d8d8d8"/><rect x="551" y="189" width="1" height="1" fill="#d8d8d8"/><rect x="551" y="199" width="1" height="1" fill="#d8d8d8"/><rect x="551" y="209" width="1" height="1" fill="#d8d8d8"/><rect x="551" y="229" width="1" height="1" fill="#d8d8d8"/><rect x="551" y="239" width="1" height="1" fill="#d8d8d8"/><rect x="551" y="249" width="1" height="1" fill="#d8d8d8"/><rect x="551" y="259" width="1" height="1" fill="#d8d8d8"/><rect x="551" y="279" width="1" height="1" fill="#d8d8d8"/><rect x="551" y="289" width="1" height="1" fill="#d8d8d8"/><rect x="551" y="299" width="1" height="1" fill="#d8d8d8"/><rect x="551" y="309" width="1" height="1" fill="#d8d8d8"/><rect x="551" y="329" width="1" height="1" fill="#d8d8d8"/><rect x="551" y="339" width="1" height="1" fill="#d8d8d8"/><rect x="551" y="349" width="1" height="1" fill="#d8d8d8"/><rect x="551" y="359" width="1" height="1" fill="#d8d8d8"/><rect x="551" y="379" width="1" height="1" fill="#d8d8d8"/><rect x="551" y="389" width="1" height="1" fill="#d8d8d8"/><rect x="551" y="399" width="1" height="1" fill="#d8d8d8"/><rect x="551" y="409" width="1" height="1" fill="#d8d8d8"/><rect x="551" y="429" width="1" height="1" fill="#d8d8d8"/><rect x="551" y="439" width="1" height="1" fill="#d8d8d8"/><rect x="551" y="449" width="1" height="1" fill="#d8d8d8"/><rect x="551" y="459" width="1" height="1" fill="#d8d8d8"/><rect x="551" y="479" width="1" height="1" fill="#d8d8d8"/><rect x="551" y="489" width="1" height="1" fill="#d8d8d8"/><rect x="551" y="499" width="1" height="1" fill="#d8d8d8"/><rect x="551" y="509" width="1" height="1" fill="#d8d8d8"/><rect x="601" y="29" width="1" height="1" fill="#d8d8d8"/><rect x="601" y="39" width="1" height="1" fill="#d8d8d8"/><rect x="601" y="49" width="1" height="1" fill="#d8d8d8"/><rect x="601" y="59" width="1" height="1" fill="#d8d8d8"/><rect x="601" y="79" width="1" height="1" fill="#d8d8d8"/><rect x="601" y="89" width="1" height="1" fill="#d8d8d8"/><rect x="601" y="99" width="1" height="1" fill="#d8d8d8"/><rect x="601" y="109" width="1" height="1" fill="#d8d8d8"/><rect x="601" y="129" width="1" height="1" fill="#d8d8d8"/><rect x="601" y="139" width="1" height="1" fill="#d8d8d8"/><rect x="601" y="149" width="1" height="1" fill="#d8d8d8"/><rect x="601" y="159" width="1" height="1" fill="#d8d8d8"/><rect x="601" y="179" width="1" height="1" fill="#d8d8d8"/><rect x="601" y="189" width="1" height="1" fill="#d8d8d8"/><rect x="601" y="199" width="1" height="1" fill="#d8d8d8"/><rect x="601" y="209" width="1" height="1" fill="#d8d8d8"/><rect x="601" y="229" width="1" height="1" fill="#d8d8d8"/><rect x="601" y="239" width="1" height="1" fill="#d8d8d8"/><rect x="601" y="249" width="1" height="1" fill="#d8d8d8"/><rect x="601" y="259" width="1" height="1" fill="#d8d8d8"/><rect x="601" y="279" width="1" height="1" fill="#d8d8d8"/><rect x="601" y="289" width="1" height="1" fill="#d8d8d8"/><rect x="601" y="299" width="1" height="1" fill="#d8d8d8"/><rect x="601" y="309" width="1" height="1" fill="#d8d8d8"/><rect x="601" y="329" width="1" height="1" fill="#d8d8d8"/><rect x="601" y="339" width="1" height="1" fill="#d8d8d8"/><rect x="601" y="349" width="1" height="1" fill="#d8d8d8"/><rect x="601" y="359" width="1" height="1" fill="#d8d8d8"/><rect x="601" y="379" width="1" height="1" fill="#d8d8d8"/><rect x="601" y="389" width="1" height="1" fill="#d8d8d8"/><rect x="601" y="399" width="1" height="1" fill="#d8d8d8"/><rect x="601" y="409" width="1" height="1" fill="#d8d8d8"/><rect x="601" y="429" width="1" height="1" fill="#d8d8d8"/><rect x="601" y="439" width="1" height="1" fill="#d8d8d8"/><rect x="601" y="449" width="1" height="1" fill="#d8d8d8"/><rect x="601" y="459" width="1" height="1" fill="#d8d8d8"/><rect x="601" y="479" width="1" height="1" fill="#d8d8d8"/><rect x="601" y="489" width="1" height="1" fill="#d8d8d8"/><rect x="601" y="499" width="1" height="1" fill="#d8d8d8"/><rect x="601" y="509" width="1" height="1" fill="#d8d8d8"/><rect x="651" y="29" width="1" height="1" fill="#d8d8d8"/><rect x="651" y="39" width="1" height="1" fill="#d8d8d8"/><rect x="651" y="49" width="1" height="1" fill="#d8d8d8"/><rect x="651" y="59" width="1" height="1" fill="#d8d8d8"/><rect x="651" y="79" width="1" height="1" fill="#d8d8d8"/><rect x="651" y="89" width="1" height="1" fill="#d8d8d8"/><rect x="651" y="99" width="1" height="1" fill="#d8d8d8"/><rect x="651" y="109" width="1" height="1" fill="#d8d8d8"/><rect x="651" y="129" width="1" height="1" fill="#d8d8d8"/><rect x="651" y="139" width="1" height="1" fill="#d8d8d8"/><rect x="651" y="149" width="1" height="1" fill="#d8d8d8"/><rect x="651" y="159" width="1" height="1" fill="#d8d8d8"/><rect x="651" y="179" width="1" height="1" fill="#d8d8d8"/><rect x="651" y="189" width="1" height="1" fill="#d8d8d8"/><rect x="651" y="199" width="1" height="1" fill="#d8d8d8"/><rect x="651" y="209" width="1" height="1" fill="#d8d8d8"/><rect x="651" y="229" width="1" height="1" fill="#d8d8d8"/><rect x="651" y="239" width="1" height="1" fill="#d8d8d8"/><rect x="651" y="249" width="1" height="1" fill="#d8d8d8"/><rect x="651" y="259" width="1" height="1" fill="#d8d8d8"/><rect x="651" y="279" width="1" height="1" fill="#d8d8d8"/><rect x="651" y="289" width="1" height="1" fill="#d8d8d8"/><rect x="651" y="299" width="1" height="1" fill="#d8d8d8"/><rect x="651" y="309" width="1" height="1" fill="#d8d8d8"/><rect x="651" y="329" width="1" height="1" fill="#d8d8d8"/><rect x="651" y="339" width="1" height="1" fill="#d8d8d8"/><rect x="651" y="349" width="1" height="1" fill="#d8d8d8"/><rect x="651" y="359" width="1" height="1" fill="#d8d8d8"/><rect x="651" y="379" width="1" height="1" fill="#d8d8d8"/><rect x="651" y="389" width="1" height="1" fill="#d8d8d8"/><rect x="651" y="399" width="1" height="1" fill="#d8d8d8"/><rect x="651" y="409" width="1" height="1" fill="#d8d8d8"/><rect x="651" y="429" width="1" height="1" fill="#d8d8d8"/><rect x="651" y="439" width="1" height="1" fill="#d8d8d8"/><rect x="651" y="449" width="1" height="1" fill="#d8d8d8"/><rect x="651" y="459" width="1" height="1" fill="#d8d8d8"/><rect x="651" y="479" width="1" height="1" fill="#d8d8d8"/><rect x="651" y="489" width="1" height="1" fill="#d8d8d8"/><rect x="651" y="499" width="1" height="1" fill="#d8d8d8"/><rect x="651" y="509" width="1" height="1" fill="#d8d8d8"/><rect x="701" y="29" width="1" height="1" fill="#d8d8d8"/><rect x="701" y="39" width="1" height="1" fill="#d8d8d8"/><rect x="701" y="49" width="1" height="1" fill="#d8d8d8"/><rect x="701" y="59" width="1" height="1" fill="#d8d8d8"/><rect x="701" y="79" width="1" height="1" fill="#d8d8d8"/><rect x="701" y="89" width="1" height="1" fill="#d8d8d8"/><rect x="701" y="99" width="1" height="1" fill="#d8d8d8"/><rect x="701" y="109" width="1" height="1" fill="#d8d8d8"/><rect x="701" y="129" width="1" height="1" fill="#d8d8d8"/><rect x="701" y="139" width="1" height="1" fill="#d8d8d8"/><rect x="701" y="149" width="1" height="1" fill="#d8d8d8"/><rect x="701" y="159" width="1" height="1" fill="#d8d8d8"/><rect x="701" y="179" width="1" height="1" fill="#d8d8d8"/><rect x="701" y="189" width="1" height="1" fill="#d8d8d8"/><rect x="701" y="199" width="1" height="1" fill="#d8d8d8"/><rect x="701" y="209" width="1" height="1" fill="#d8d8d8"/><rect x="701" y="229" width="1" height="1" fill="#d8d8d8"/><rect x="701" y="239" width="1" height="1" fill="#d8d8d8"/><rect x="701" y="249" width="1" height="1" fill="#d8d8d8"/><rect x="701" y="259" width="1" height="1" fill="#d8d8d8"/><rect x="701" y="279" width="1" height="1" fill="#d8d8d8"/><rect x="701" y="289" width="1" height="1" fill="#d8d8d8"/><rect x="701" y="299" width="1" height="1" fill="#d8d8d8"/><rect x="701" y="309" width="1" height="1" fill="#d8d8d8"/><rect x="701" y="329" width="1" height="1" fill="#d8d8d8"/><rect x="701" y="339" width="1" height="1" fill="#d8d8d8"/><rect x="701" y="349" width="1" height="1" fill="#d8d8d8"/><rect x="701" y="359" width="1" height="1" fill="#d8d8d8"/><rect x="701" y="379" width="1" height="1" fill="#d8d8d8"/><rect x="701" y="389" width="1" height="1" fill="#d8d8d8"/><rect x="701" y="399" width="1" height="1" fill="#d8d8d8"/><rect x="701" y="409" width="1" height="1" fill="#d8d8d8"/><rect x="701" y="429" width="1" height="1" fill="#d8d8d8"/><rect x="701" y="439" width="1" height="1" fill="#d8d8d8"/><rect x="701" y="449" width="1" height="1" fill="#d8d8d8"/><rect x="701" y="459" width="1" height="1" fill="#d8d8d8"/><rect x="701" y="479" width="1" height="1" fill="#d8d8d8"/><rect x="701" y="489" width="1" height="1" fill="#d8d8d8"/><rect x="701" y="499" width="1" height="1" fill="#d8d8d8"/><rect x="701" y="509" width="1" height="1" fill="#d8d8d8"/><rect x="751" y="29" width="1" height="1" fill="#d8d8d8"/><rect x="751" y="39" width="1" height="1" fill="#d8d8d8"/><rect x="751" y="49" width="1" height="1" fill="#d8d8d8"/><rect x="751" y="59" width="1" height="1" fill="#d8d8d8"/><rect x="751" y="79" width="1" height="1" fill="#d8d8d8"/><rect x="751" y="89" width="1" height="1" fill="#d8d8d8"/><rect x="751" y="99" width="1" height="1" fill="#d8d8d8"/><rect x="751" y="109" width="1" height="1" fill="#d8d8d8"/><rect x="751" y="129" width="1" height="1" fill="#d8d8d8"/><rect x="751" y="139" width="1" height="1" fill="#d8d8d8"/><rect x="751" y="149" width="1" height="1" fill="#d8d8d8"/><rect x="751" y="159" width="1" height="1" fill="#d8d8d8"/><rect x="751" y="179" width="1" height="1" fill="#d8d8d8"/><rect x="751" y="189" width="1" height="1" fill="#d8d8d8"/><rect x="751" y="199" width="1" height="1" fill="#d8d8d8"/><rect x="751" y="209" width="1" height="1" fill="#d8d8d8"/><rect x="751" y="229" width="1" height="1" fill="#d8d8d8"/><rect x="751" y="239" width="1" height="1" fill="#d8d8d8"/><rect x="751" y="249" width="1" height="1" fill="#d8d8d8"/><rect x="751" y="259" width="1" height="1" fill="#d8d8d8"/><rect x="751" y="279" width="1" height="1" fill="#d8d8d8"/><rect x="751" y="289" width="1" height="1" fill="#d8d8d8"/><rect x="751" y="299" width="1" height="1" fill="#d8d8d8"/><rect x="751" y="309" width="1" height="1" fill="#d8d8d8"/><rect x="751" y="329" width="1" height="1" fill="#d8d8d8"/><rect x="751" y="339" width="1" height="1" fill="#d8d8d8"/><rect x="751" y="349" width="1" height="1" fill="#d8d8d8"/><rect x="751" y="359" width="1" height="1" fill="#d8d8d8"/><rect x="751" y="379" width="1" height="1" fill="#d8d8d8"/><rect x="751" y="389" width="1" height="1" fill="#d8d8d8"/><rect x="751" y="399" width="1" height="1" fill="#d8d8d8"/><rect x="751" y="409" width="1" height="1" fill="#d8d8d8"/><rect x="751" y="429" width="1" height="1" fill="#d8d8d8"/><rect x="751" y="439" width="1" height="1" fill="#d8d8d8"/><rect x="751" y="449" width="1" height="1" fill="#d8d8d8"/><rect x="751" y="459" width="1" height="1" fill="#d8d8d8"/><rect x="751" y="479" width="1" height="1" fill="#d8d8d8"/><rect x="751" y="489" width="1" height="1" fill="#d8d8d8"/><rect x="751" y="499" width="1" height="1" fill="#d8d8d8"/><rect x="751" y="509" width="1" height="1" fill="#d8d8d8"/><rect x="31" y="69" width="1" height="1" fill="#d8d8d8"/><rect x="41" y="69" width="1" height="1" fill="#d8d8d8"/><rect x="51" y="69" width="1" height="1" fill="#d8d8d8"/><rect x="61" y="69" width="1" height="1" fill="#d8d8d8"/><rect x="71" y="69" width="1" height="1" fill="#d8d8d8"/><rect x="81" y="69" width="1" height="1" fill="#d8d8d8"/><rect x="91" y="69" width="1" height="1" fill="#d8d8d8"/><rect x="101" y="69" width="1" height="1" fill="#d8d8d8"/><rect x="111" y="69" width="1" height="1" fill="#d8d8d8"/><rect x="121" y="69" width="1" height="1" fill="#d8d8d8"/><rect x="131" y="69" width="1" height="1" fill="#d8d8d8"/><rect x="141" y="69" width="1" height="1" fill="#d8d8d8"/><rect x="151" y="69" width="1" height="1" fill="#d8d8d8"/><rect x="161" y="69" width="1" height="1" fill="#d8d8d8"/><rect x="171" y="69" width="1" height="1" fill="#d8d8d8"/><rect x="181" y="69" width="1" height="1" fill="#d8d8d8"/><rect x="191" y="69" width="1" height="1" fill="#d8d8d8"/><rect x="201" y="69" width="1" height="1" fill="#d8d8d8"/><rect x="211" y="69" width="1" height="1" fill="#d8d8d8"/><rect x="221" y="69" width="1" height="1" fill="#d8d8d8"/><rect x="231" y="69" width="1" height="1" fill="#d8d8d8"/><rect x="241" y="69" width="1" height="1" fill="#d8d8d8"/><rect x="251" y="69" width="1" height="1" fill="#d8d8d8"/><rect x="261" y="69" width="1" height="1" fill="#d8d8d8"/><rect x="271" y="69" width="1" height="1" fill="#d8d8d8"/><rect x="281" y="69" width="1" height="1" fill="#d8d8d8"/><rect x="291" y="69" width="1" height="1" fill="#d8d8d8"/><rect x="301" y="69" width="1" height="1" fill="#d8d8d8"/><rect x="311" y="69" width="1" height="1" fill="#d8d8d8"/><rect x="321" y="69" width="1" height="1" fill="#d8d8d8"/><rect x="331" y="69" width="1" height="1" fill="#d8d8d8"/><rect x="341" y="69" width="1" height="1" fill="#d8d8d8"/><rect x="351" y="69" width="1" height="1" fill="#d8d8d8"/><rect x="361" y="69" width="1" height="1" fill="#d8d8d8"/><rect x="371" y="69" width="1" height="1" fill="#d8d8d8"/><rect x="381" y="69" width="1" height="1" fill="#d8d8d8"/><rect x="391" y="69" width="1" height="1" fill="#d8d8d8"/><rect x="401" y="69" width="1" height="1" fill="#d8d8d8"/><rect x="411" y="69" width="1" height="1" fill="#d8d8d8"/><rect x="421" y="69" width="1" height="1" fill="#d8d8d8"/><rect x="431" y="69" width="1" height="1" fill="#d8d8d8"/><rect x="441" y="69" width="1" height="1" fill="#d8d8d8"/><rect x="451" y="69" width="1" height="1" fill="#d8d8d8"/><rect x="461" y="69" width="1" height="1" fill="#d8d8d8"/><rect x="471" y="69" width="1" height="1" fill="#d8d8d8"/><rect x="481" y="69" width="1" height="1" fill="#d8d8d8"/><rect x="491" y="69" width="1" height="1" fill="#d8d8d8"/><rect x="501" y="69" width="1" height="1" fill="#d8d8d8"/><rect x="511" y="69" width="1" height="1" fill="#d8d8d8"/><rect x="521" y="69" width="1" height="1" fill="#d8d8d8"/><rect x="531" y="69" width="1" height="1" fill="#d8d8d8"/><rect x="541" y="69" width="1" height="1" fill="#d8d8d8"/><rect x="551" y="69" width="1" height="1" fill="#d8d8d8"/><rect x="561" y="69" width="1" height="1" fill="#d8d8d8"/><rect x="571" y="69" width="1" height="1" fill="#d8d8d8"/><rect x="581" y="69" width="1" height="1" fill="#d8d8d8"/><rect x="591" y="69" width="1" height="1" fill="#d8d8d8"/><rect x="601" y="69" width="1" height="1" fill="#d8d8d8"/><rect x="611" y="69" width="1" height="1" fill="#d8d8d8"/><rect x="621" y="69" width="1" height="1" fill="#d8d8d8"/><rect x="631" y="69" width="1" height="1" fill="#d8d8d8"/><rect x="641" y="69" width="1" height="1" fill="#d8d8d8"/><rect x="651" y="69" width="1" height="1" fill="#d8d8d8"/><rect x="661" y="69" width="1" height="1" fill="#d8d8d8"/><rect x="671" y="69" width="1" height="1" fill="#d8d8d8"/><rect x="681" y="69" width="1" height="1" fill="#d8d8d8"/><rect x="691" y="69" width="1" height="1" fill="#d8d8d8"/><rect x="701" y="69" width="1" height="1" fill="#d8d8d8"/><rect x="711" y="69" width="1" height="1" fill="#d8d8d8"/><rect x="721" y="69" width="1" height="1" fill="#d8d8d8"/><rect x="731" y="69" width="1" height="1" fill="#d8d8d8"/><rect x="741" y="69" width="1" height="1" fill="#d8d8d8"/><rect x="751" y="69" width="1" height="1" fill="#d8d8d8"/><rect x="761" y="69" width="1" height="1" fill="#d8d8d8"/><rect x="771" y="69" width="1" height="1" fill="#d8d8d8"/><rect x="31" y="119" width="1" height="1" fill="#d8d8d8"/><rect x="41" y="119" width="1" height="1" fill="#d8d8d8"/><rect x="51" y="119" width="1" height="1" fill="#d8d8d8"/><rect x="61" y="119" width="1" height="1" fill="#d8d8d8"/><rect x="71" y="119" width="1" height="1" fill="#d8d8d8"/><rect x="81" y="119" width="1" height="1" fill="#d8d8d8"/><rect x="91" y="119" width="1" height="1" fill="#d8d8d8"/><rect x="101" y="119" width="1" height="1" fill="#d8d8d8"/><rect x="111" y="119" width="1" height="1" fill="#d8d8d8"/><rect x="121" y="119" width="1" height="1" fill="#d8d8d8"/><rect x="131" y="119" width="1" height="1" fill="#d8d8d8"/><rect x="141" y="119" width="1" height="1" fill="#d8d8d8"/><rect x="151" y="119" width="1" height="1" fill="#d8d8d8"/><rect x="161" y="119" width="1" height="1" fill="#d8d8d8"/><rect x="171" y="119" width="1" height="1" fill="#d8d8d8"/><rect x="181" y="119" width="1" height="1" fill="#d8d8d8"/><rect x="191" y="119" width="1" height="1" fill="#d8d8d8"/><rect x="201" y="119" width="1" height="1" fill="#d8d8d8"/><rect x="211" y="119" width="1" height="1" fill="#d8d8d8"/><rect x="221" y="119" width="1" height="1" fill="#d8d8d8"/><rect x="231" y="119" width="1" height="1" fill="#d8d8d8"/><rect x="241" y="119" width="1" height="1" fill="#d8d8d8"/><rect x="251" y="119" width="1" height="1" fill="#d8d8d8"/><rect x="261" y="119" width="1" height="1" fill="#d8d8d8"/><rect x="271" y="119" width="1" height="1" fill="#d8d8d8"/><rect x="281" y="119" width="1" height="1" fill="#d8d8d8"/><rect x="291" y="119" width="1" height="1" fill="#d8d8d8"/><rect x="301" y="119" width="1" height="1" fill="#d8d8d8"/><rect x="311" y="119" width="1" height="1" fill="#d8d8d8"/><rect x="321" y="119" width="1" height="1" fill="#d8d8d8"/><rect x="331" y="119" width="1" height="1" fill="#d8d8d8"/><rect x="341" y="119" width="1" height="1" fill="#d8d8d8"/><rect x="351" y="119" width="1" height="1" fill="#d8d8d8"/><rect x="361" y="119" width="1" height="1" fill="#d8d8d8"/><rect x="371" y="119" width="1" height="1" fill="#d8d8d8"/><rect x="381" y="119" width="1" height="1" fill="#d8d8d8"/><rect x="391" y="119" width="1" height="1" fill="#d8d8d8"/><rect x="401" y="119" width="1" height="1" fill="#d8d8d8"/><rect x="411" y="119" width="1" height="1" fill="#d8d8d8"/><rect x="421" y="119" width="1" height="1" fill="#d8d8d8"/><rect x="431" y="119" width="1" height="1" fill="#d8d8d8"/><rect x="441" y="119" width="1" height="1" fill="#d8d8d8"/><rect x="451" y="119" width="1" height="1" fill="#d8d8d8"/><rect x="461" y="119" width="1" height="1" fill="#d8d8d8"/><rect x="471" y="119" width="1" height="1" fill="#d8d8d8"/><rect x="481" y="119" width="1" height="1" fill="#d8d8d8"/><rect x="491" y="119" width="1" height="1" fill="#d8d8d8"/><rect x="501" y="119" width="1" height="1" fill="#d8d8d8"/><rect x="511" y="119" width="1" height="1" fill="#d8d8d8"/><rect x="521" y="119" width="1" height="1" fill="#d8d8d8"/><rect x="531" y="119" width="1" height="1" fill="#d8d8d8"/><rect x="541" y="119" width="1" height="1" fill="#d8d8d8"/><rect x="551" y="119" width="1" height="1" fill="#d8d8d8"/><rect x="561" y="119" width="1" height="1" fill="#d8d8d8"/><rect x="571" y="119" width="1" height="1" fill="#d8d8d8"/><rect x="581" y="119" width="1" height="1" fill="#d8d8d8"/><rect x="591" y="119" width="1" height="1" fill="#d8d8d8"/><rect x="601" y="119" width="1" height="1" fill="#d8d8d8"/><rect x="611" y="119" width="1" height="1" fill="#d8d8d8"/><rect x="621" y="119" width="1" height="1" fill="#d8d8d8"/><rect x="631" y="119" width="1" height="1" fill="#d8d8d8"/><rect x="641" y="119" width="1" height="1" fill="#d8d8d8"/><rect x="651" y="119" width="1" height="1" fill="#d8d8d8"/><rect x="661" y="119" width="1" height="1" fill="#d8d8d8"/><rect x="671" y="119" width="1" height="1" fill="#d8d8d8"/><rect x="681" y="119" width="1" height="1" fill="#d8d8d8"/><rect x="691" y="119" width="1" height="1" fill="#d8d8d8"/><rect x="701" y="119" width="1" height="1" fill="#d8d8d8"/><rect x="711" y="119" width="1" height="1" fill="#d8d8d8"/><rect x="721" y="119" width="1" height="1" fill="#d8d8d8"/><rect x="731" y="119" width="1" height="1" fill="#d8d8d8"/><rect x="741" y="119" width="1" height="1" fill="#d8d8d8"/><rect x="751" y="119" width="1" height="1" fill="#d8d8d8"/><rect x="761" y="119" width="1" height="1" fill="#d8d8d8"/><rect x="771" y="119" width="1" height="1" fill="#d8d8d8"/><rect x="31" y="169" width="1" height="1" fill="#d8d8d8"/><rect x="41" y="169" width="1" height="1" fill="#d8d8d8"/><rect x="51" y="169" width="1" height="1" fill="#d8d8d8"/><rect x="61" y="169" width="1" height="1" fill="#d8d8d8"/><rect x="71" y="169" width="1" height="1" fill="#d8d8d8"/><rect x="81" y="169" width="1" height="1" fill="#d8d8d8"/><rect x="91" y="169" width="1" height="1" fill="#d8d8d8"/><rect x="101" y="169" width="1" height="1" fill="#d8d8d8"/><rect x="111" y="169" width="1" height="1" fill="#d8d8d8"/><rect x="121" y="169" width="1" height="1" fill="#d8d8d8"/><rect x="131" y="169" width="1" height="1" fill="#d8d8d8"/><rect x="141" y="169" width="1" height="1" fill="#d8d8d8"/><rect x="151" y="169" width="1" height="1" fill="#d8d8d8"/><rect x="161" y="169" width="1" height="1" fill="#d8d8d8"/><rect x="171" y="169" width="1" height="1" fill="#d8d8d8"/><rect x="181" y="169" width="1" height="1" fill="#d8d8d8"/><rect x="191" y="169" width="1" height="1" fill="#d8d8d8"/><rect x="201" y="169" width="1" height="1" fill="#d8d8d8"/><rect x="211" y="169" width="1" height="1" fill="#d8d8d8"/><rect x="221" y="169" width="1" height="1" fill="#d8d8d8"/><rect x="231" y="169" width="1" height="1" fill="#d8d8d8"/><rect x="241" y="169" width="1" height="1" fill="#d8d8d8"/><rect x="251" y="169" width="1" height="1" fill="#d8d8d8"/><rect x="261" y="169" width="1" height="1" fill="#d8d8d8"/><rect x="271" y="169" width="1" height="1" fill="#d8d8d8"/><rect x="281" y="169" width="1" height="1" fill="#d8d8d8"/><rect x="291" y="169" width="1" height="1" fill="#d8d8d8"/><rect x="301" y="169" width="1" height="1" fill="#d8d8d8"/><rect x="311" y="169" width="1" height="1" fill="#d8d8d8"/><rect x="321" y="169" width="1" height="1" fill="#d8d8d8"/><rect x="331" y="169" width="1" height="1" fill="#d8d8d8"/><rect x="341" y="169" width="1" height="1" fill="#d8d8d8"/><rect x="351" y="169" width="1" height="1" fill="#d8d8d8"/><rect x="361" y="169" width="1" height="1" fill="#d8d8d8"/><rect x="371" y="169" width="1" height="1" fill="#d8d8d8"/><rect x="381" y="169" width="1" height="1" fill="#d8d8d8"/><rect x="391" y="169" width="1" height="1" fill="#d8d8d8"/><rect x="401" y="169" width="1" height="1" fill="#d8d8d8"/><rect x="411" y="169" width="1" height="1" fill="#d8d8d8"/><rect x="421" y="169" width="1" height="1" fill="#d8d8d8"/><rect x="431" y="169" width="1" height="1" fill="#d8d8d8"/><rect x="441" y="169" width="1" height="1" fill="#d8d8d8"/><rect x="451" y="169" width="1" height="1" fill="#d8d8d8"/><rect x="461" y="169" width="1" height="1" fill="#d8d8d8"/><rect x="471" y="169" width="1" height="1" fill="#d8d8d8"/><rect x="481" y="169" width="1" height="1" fill="#d8d8d8"/><rect x="491" y="169" width="1" height="1" fill="#d8d8d8"/><rect x="501" y="169" width="1" height="1" fill="#d8d8d8"/><rect x="511" y="169" width="1" height="1" fill="#d8d8d8"/><rect x="521" y="169" width="1" height="1" fill="#d8d8d8"/><rect x="531" y="169" width="1" height="1" fill="#d8d8d8"/><rect x="541" y="169" width="1" height="1" fill="#d8d8d8"/><rect x="551" y="169" width="1" height="1" fill="#d8d8d8"/><rect x="561" y="169" width="1" height="1" fill="#d8d8d8"/><rect x="571" y="169" width="1" height="1" fill="#d8d8d8"/><rect x="581" y="169" width="1" height="1" fill="#d8d8d8"/><rect x="591" y="169" width="1" height="1" fill="#d8d8d8"/><rect x="601" y="169" width="1" height="1" fill="#d8d8d8"/><rect x="611" y="169" width="1" height="1" fill="#d8d8d8"/><rect x="621" y="169" width="1" height="1" fill="#d8d8d8"/><rect x="631" y="169" width="1" height="1" fill="#d8d8d8"/><rect x="641" y="169" width="1" height="1" fill="#d8d8d8"/><rect x="651" y="169" width="1" height="1" fill="#d8d8d8"/><rect x="661" y="169" width="1" height="1" fill="#d8d8d8"/><rect x="671" y="169" width="1" height="1" fill="#d8d8d8"/><rect x="681" y="169" width="1" height="1" fill="#d8d8d8"/><rect x="691" y="169" width="1" height="1" fill="#d8d8d8"/><rect x="701" y="169" width="1" height="1" fill="#d8d8d8"/><rect x="711" y="169" width="1" height="1" fill="#d8d8d8"/><rect x="721" y="169" width="1" height="1" fill="#d8d8d8"/><rect x="731" y="169" width="1" height="1" fill="#d8d8d8"/><rect x="741" y="169" width="1" height="1" fill="#d8d8d8"/><rect x="751" y="169" width="1" height="1" fill="#d8d8d8"/><rect x="761" y="169" width="1" height="1" fill="#d8d8d8"/><rect x="771" y="169" width="1" height="1" fill="#d8d8d8"/><rect x="31" y="219" width="1" height="1" fill="#d8d8d8"/><rect x="41" y="219" width="1" height="1" fill="#d8d8d8"/><rect x="51" y="219" width="1" height="1" fill="#d8d8d8"/><rect x="61" y="219" width="1" height="1" fill="#d8d8d8"/><rect x="71" y="219" width="1" height="1" fill="#d8d8d8"/><rect x="81" y="219" width="1" height="1" fill="#d8d8d8"/><rect x="91" y="219" width="1" height="1" fill="#d8d8d8"/><rect x="101" y="219" width="1" height="1" fill="#d8d8d8"/><rect x="111" y="219" width="1" height="1" fill="#d8d8d8"/><rect x="121" y="219" width="1" height="1" fill="#d8d8d8"/><rect x="131" y="219" width="1" height="1" fill="#d8d8d8"/><rect x="141" y="219" width="1" height="1" fill="#d8d8d8"/><rect x="151" y="219" width="1" height="1" fill="#d8d8d8"/><rect x="161" y="219" width="1" height="1" fill="#d8d8d8"/><rect x="171" y="219" width="1" height="1" fill="#d8d8d8"/><rect x="181" y="219" width="1" height="1" fill="#d8d8d8"/><rect x="191" y="219" width="1" height="1" fill="#d8d8d8"/><rect x="201" y="219" width="1" height="1" fill="#d8d8d8"/><rect x="211" y="219" width="1" height="1" fill="#d8d8d8"/><rect x="221" y="219" width="1" height="1" fill="#d8d8d8"/><rect x="231" y="219" width="1" height="1" fill="#d8d8d8"/><rect x="241" y="219" width="1" height="1" fill="#d8d8d8"/><rect x="251" y="219" width="1" height="1" fill="#d8d8d8"/><rect x="261" y="219" width="1" height="1" fill="#d8d8d8"/><rect x="271" y="219" width="1" height="1" fill="#d8d8d8"/><rect x="281" y="219" width="1" height="1" fill="#d8d8d8"/><rect x="291" y="219" width="1" height="1" fill="#d8d8d8"/><rect x="301" y="219" width="1" height="1" fill="#d8d8d8"/><rect x="311" y="219" width="1" height="1" fill="#d8d8d8"/><rect x="321" y="219" width="1" height="1" fill="#d8d8d8"/><rect x="331" y="219" width="1" height="1" fill="#d8d8d8"/><rect x="341" y="219" width="1" height="1" fill="#d8d8d8"/><rect x="351" y="219" width="1" height="1" fill="#d8d8d8"/><rect x="361" y="219" width="1" height="1" fill="#d8d8d8"/><rect x="371" y="219" width="1" height="1" fill="#d8d8d8"/><rect x="381" y="219" width="1" height="1" fill="#d8d8d8"/><rect x="391" y="219" width="1" height="1" fill="#d8d8d8"/><rect x="401" y="219" width="1" height="1" fill="#d8d8d8"/><rect x="411" y="219" width="1" height="1" fill="#d8d8d8"/><rect x="421" y="219" width="1" height="1" fill="#d8d8d8"/><rect x="431" y="219" width="1" height="1" fill="#d8d8d8"/><rect x="441" y="219" width="1" height="1" fill="#d8d8d8"/><rect x="451" y="219" width="1" height="1" fill="#d8d8d8"/><rect x="461" y="219" width="1" height="1" fill="#d8d8d8"/><rect x="471" y="219" width="1" height="1" fill="#d8d8d8"/><rect x="481" y="219" width="1" height="1" fill="#d8d8d8"/><rect x="491" y="219" width="1" height="1" fill="#d8d8d8"/><rect x="501" y="219" width="1" height="1" fill="#d8d8d8"/><rect x="511" y="219" width="1" height="1" fill="#d8d8d8"/><rect x="521" y="219" width="1" height="1" fill="#d8d8d8"/><rect x="531" y="219" width="1" height="1" fill="#d8d8d8"/><rect x="541" y="219" width="1" height="1" fill="#d8d8d8"/><rect x="551" y="219" width="1" height="1" fill="#d8d8d8"/><rect x="561" y="219" width="1" height="1" fill="#d8d8d8"/><rect x="571" y="219" width="1" height="1" fill="#d8d8d8"/><rect x="581" y="219" width="1" height="1" fill="#d8d8d8"/><rect x="591" y="219" width="1" height="1" fill="#d8d8d8"/><rect x="601" y="219" width="1" height="1" fill="#d8d8d8"/><rect x="611" y="219" width="1" height="1" fill="#d8d8d8"/><rect x="621" y="219" width="1" height="1" fill="#d8d8d8"/><rect x="631" y="219" width="1" height="1" fill="#d8d8d8"/><rect x="641" y="219" width="1" height="1" fill="#d8d8d8"/><rect x="651" y="219" width="1" height="1" fill="#d8d8d8"/><rect x="661" y="219" width="1" height="1" fill="#d8d8d8"/><rect x="671" y="219" width="1" height="1" fill="#d8d8d8"/><rect x="681" y="219" width="1" height="1" fill="#d8d8d8"/><rect x="691" y="219" width="1" height="1" fill="#d8d8d8"/><rect x="701" y="219" width="1" height="1" fill="#d8d8d8"/><rect x="711" y="219" width="1" height="1" fill="#d8d8d8"/><rect x="721" y="219" width="1" height="1" fill="#d8d8d8"/><rect x="731" y="219" width="1" height="1" fill="#d8d8d8"/><rect x="741" y="219" width="1" height="1" fill="#d8d8d8"/><rect x="751" y="219" width="1" height="1" fill="#d8d8d8"/><rect x="761" y="219" width="1" height="1" fill="#d8d8d8"/><rect x="771" y="219" width="1" height="1" fill="#d8d8d8"/><rect x="31" y="319" width="1" height="1" fill="#d8d8d8"/><rect x="41" y="319" width="1" height="1" fill="#d8d8d8"/><rect x="51" y="319" width="1" height="1" fill="#d8d8d8"/><rect x="61" y="319" width="1" height="1" fill="#d8d8d8"/><rect x="71" y="319" width="1" height="1" fill="#d8d8d8"/><rect x="81" y="319" width="1" height="1" fill="#d8d8d8"/><rect x="91" y="319" width="1" height="1" fill="#d8d8d8"/><rect x="101" y="319" width="1" height="1" fill="#d8d8d8"/><rect x="111" y="319" width="1" height="1" fill="#d8d8d8"/><rect x="121" y="319" width="1" height="1" fill="#d8d8d8"/><rect x="131" y="319" width="1" height="1" fill="#d8d8d8"/><rect x="141" y="319" width="1" height="1" fill="#d8d8d8"/><rect x="151" y="319" width="1" height="1" fill="#d8d8d8"/><rect x="161" y="319" width="1" height="1" fill="#d8d8d8"/><rect x="171" y="319" width="1" height="1" fill="#d8d8d8"/><rect x="181" y="319" width="1" height="1" fill="#d8d8d8"/><rect x="191" y="319" width="1" height="1" fill="#d8d8d8"/><rect x="201" y="319" width="1" height="1" fill="#d8d8d8"/><rect x="211" y="319" width="1" height="1" fill="#d8d8d8"/><rect x="221" y="319" width="1" height="1" fill="#d8d8d8"/><rect x="231" y="319" width="1" height="1" fill="#d8d8d8"/><rect x="241" y="319" width="1" height="1" fill="#d8d8d8"/><rect x="251" y="319" width="1" height="1" fill="#d8d8d8"/><rect x="261" y="319" width="1" height="1" fill="#d8d8d8"/><rect x="271" y="319" width="1" height="1" fill="#d8d8d8"/><rect x="281" y="319" width="1" height="1" fill="#d8d8d8"/><rect x="291" y="319" width="1" height="1" fill="#d8d8d8"/><rect x="301" y="319" width="1" height="1" fill="#d8d8d8"/><rect x="311" y="319" width="1" height="1" fill="#d8d8d8"/><rect x="321" y="319" width="1" height="1" fill="#d8d8d8"/><rect x="331" y="319" width="1" height="1" fill="#d8d8d8"/><rect x="341" y="319" width="1" height="1" fill="#d8d8d8"/><rect x="351" y="319" width="1" height="1" fill="#d8d8d8"/><rect x="361" y="319" width="1" height="1" fill="#d8d8d8"/><rect x="371" y="319" width="1" height="1" fill="#d8d8d8"/><rect x="381" y="319" width="1" height="1" fill="#d8d8d8"/><rect x="391" y="319" width="1" height="1" fill="#d8d8d8"/><rect x="401" y="319" width="1" height="1" fill="#d8d8d8"/><rect x="411" y="319" width="1" height="1" fill="#d8d8d8"/><rect x="421" y="319" width="1" height="1" fill="#d8d8d8"/><rect x="431" y="319" width="1" height="1" fill="#d8d8d8"/><rect x="441" y="319" width="1" height="1" fill="#d8d8d8"/><rect x="451" y="319" width="1" height="1" fill="#d8d8d8"/><rect x="461" y="319" width="1" height="1" fill="#d8d8d8"/><rect x="471" y="319" width="1" height="1" fill="#d8d8d8"/><rect x="481" y="319" width="1" height="1" fill="#d8d8d8"/><rect x="491" y="319" width="1" height="1" fill="#d8d8d8"/><rect x="501" y="319" width="1" height="1" fill="#d8d8d8"/><rect x="511" y="319" width="1" height="1" fill="#d8d8d8"/><rect x="521" y="319" width="1" height="1" fill="#d8d8d8"/><rect x="531" y="319" width="1" height="1" fill="#d8d8d8"/><rect x="541" y="319" width="1" height="1" fill="#d8d8d8"/><rect x="551" y="319" width="1" height="1" fill="#d8d8d8"/><rect x="561" y="319" width="1" height="1" fill="#d8d8d8"/><rect x="571" y="319" width="1" height="1" fill="#d8d8d8"/><rect x="581" y="319" width="1" height="1" fill="#d8d8d8"/><rect x="591" y="319" width="1" height="1" fill="#d8d8d8"/><rect x="601" y="319" width="1" height="1" fill="#d8d8d8"/><rect x="611" y="319" width="1" height="1" fill="#d8d8d8"/><rect x="621" y="319" width="1" height="1" fill="#d8d8d8"/><rect x="631" y="319" width="1" height="1" fill="#d8d8d8"/><rect x="641" y="319" width="1" height="1" fill="#d8d8d8"/><rect x="651" y="319" width="1" height="1" fill="#d8d8d8"/><rect x="661" y="319" width="1" height="1" fill="#d8d8d8"/><rect x="671" y="319" width="1" height="1" fill="#d8d8d8"/><rect x="681" y="319" width="1" height="1" fill="#d8d8d8"/><rect x="691" y="319" width="1" height="1" fill="#d8d8d8"/><rect x="701" y="319" width="1" height="1" fill="#d8d8d8"/><rect x="711" y="319" width="1" height="1" fill="#d8d8d8"/><rect x="721" y="319" width="1" height="1" fill="#d8d8d8"/><rect x="731" y="319" width="1" height="1" fill="#d8d8d8"/><rect x="741" y="319" width="1" height="1" fill="#d8d8d8"/><rect x="751" y="319" width="1" height="1" fill="#d8d8d8"/><rect x="761" y="319" width="1" height="1" fill="#d8d8d8"/><rect x="771" y="319" width="1" height="1" fill="#d8d8d8"/><rect x="31" y="369" width="1" height="1" fill="#d8d8d8"/><rect x="41" y="369" width="1" height="1" fill="#d8d8d8"/><rect x="51" y="369" width="1" height="1" fill="#d8d8d8"/><rect x="61" y="369" width="1" height="1" fill="#d8d8d8"/><rect x="71" y="369" width="1" height="1" fill="#d8d8d8"/><rect x="81" y="369" width="1" height="1" fill="#d8d8d8"/><rect x="91" y="369" width="1" height="1" fill="#d8d8d8"/><rect x="101" y="369" width="1" height="1" fill="#d8d8d8"/><rect x="111" y="369" width="1" height="1" fill="#d8d8d8"/><rect x="121" y="369" width="1" height="1" fill="#d8d8d8"/><rect x="131" y="369" width="1" height="1" fill="#d8d8d8"/><rect x="141" y="369" width="1" height="1" fill="#d8d8d8"/><rect x="151" y="369" width="1" height="1" fill="#d8d8d8"/><rect x="161" y="369" width="1" height="1" fill="#d8d8d8"/><rect x="171" y="369" width="1" height="1" fill="#d8d8d8"/><rect x="181" y="369" width="1" height="1" fill="#d8d8d8"/><rect x="191" y="369" width="1" height="1" fill="#d8d8d8"/><rect x="201" y="369" width="1" height="1" fill="#d8d8d8"/><rect x="211" y="369" width="1" height="1" fill="#d8d8d8"/><rect x="221" y="369" width="1" height="1" fill="#d8d8d8"/><rect x="231" y="369" width="1" height="1" fill="#d8d8d8"/><rect x="241" y="369" width="1" height="1" fill="#d8d8d8"/><rect x="251" y="369" width="1" height="1" fill="#d8d8d8"/><rect x="261" y="369" width="1" height="1" fill="#d8d8d8"/><rect x="271" y="369" width="1" height="1" fill="#d8d8d8"/><rect x="281" y="369" width="1" height="1" fill="#d8d8d8"/><rect x="291" y="369" width="1" height="1" fill="#d8d8d8"/><rect x="301" y="369" width="1" height="1" fill="#d8d8d8"/><rect x="311" y="369" width="1" height="1" fill="#d8d8d8"/><rect x="321" y="369" width="1" height="1" fill="#d8d8d8"/><rect x="331" y="369" width="1" height="1" fill="#d8d8d8"/><rect x="341" y="369" width="1" height="1" fill="#d8d8d8"/><rect x="351" y="369" width="1" height="1" fill="#d8d8d8"/><rect x="361" y="369" width="1" height="1" fill="#d8d8d8"/><rect x="371" y="369" width="1" height="1" fill="#d8d8d8"/><rect x="381" y="369" width="1" height="1" fill="#d8d8d8"/><rect x="391" y="369" width="1" height="1" fill="#d8d8d8"/><rect x="401" y="369" width="1" height="1" fill="#d8d8d8"/><rect x="411" y="369" width="1" height="1" fill="#d8d8d8"/><rect x="421" y="369" width="1" height="1" fill="#d8d8d8"/><rect x="431" y="369" width="1" height="1" fill="#d8d8d8"/><rect x="441" y="369" width="1" height="1" fill="#d8d8d8"/><rect x="451" y="369" width="1" height="1" fill="#d8d8d8"/><rect x="461" y="369" width="1" height="1" fill="#d8d8d8"/><rect x="471" y="369" width="1" height="1" fill="#d8d8d8"/><rect x="481" y="369" width="1" height="1" fill="#d8d8d8"/><rect x="491" y="369" width="1" height="1" fill="#d8d8d8"/><rect x="501" y="369" width="1" height="1" fill="#d8d8d8"/><rect x="511" y="369" width="1" height="1" fill="#d8d8d8"/><rect x="521" y="369" width="1" height="1" fill="#d8d8d8"/><rect x="531" y="369" width="1" height="1" fill="#d8d8d8"/><rect x="541" y="369" width="1" height="1" fill="#d8d8d8"/><rect x="551" y="369" width="1" height="1" fill="#d8d8d8"/><rect x="561" y="369" width="1" height="1" fill="#d8d8d8"/><rect x="571" y="369" width="1" height="1" fill="#d8d8d8"/><rect x="581" y="369" width="1" height="1" fill="#d8d8d8"/><rect x="591" y="369" width="1" height="1" fill="#d8d8d8"/><rect x="601" y="369" width="1" height="1" fill="#d8d8d8"/><rect x="611" y="369" width="1" height="1" fill="#d8d8d8"/><rect x="621" y="369" width="1" height="1" fill="#d8d8d8"/><rect x="631" y="369" width="1" height="1" fill="#d8d8d8"/><rect x="641" y="369" width="1" height="1" fill="#d8d8d8"/><rect x="651" y="369" width="1" height="1" fill="#d8d8d8"/><rect x="661" y="369" width="1" height="1" fill="#d8d8d8"/><rect x="671" y="369" width="1" height="1" fill="#d8d8d8"/><rect x="681" y="369" width="1" height="1" fill="#d8d8d8"/><rect x="691" y="369" width="1" height="1" fill="#d8d8d8"/><rect x="701" y="369" width="1" height="1" fill="#d8d8d8"/><rect x="711" y="369" width="1" height="1" fill="#d8d8d8"/><rect x="721" y="369" width="1" height="1" fill="#d8d8d8"/><rect x="731" y="369" width="1" height="1" fill="#d8d8d8"/><rect x="741" y="369" width="1" height="1" fill="#d8d8d8"/><rect x="751" y="369" width="1" height="1" fill="#d8d8d8"/><rect x="761" y="369" width="1" height="1" fill="#d8d8d8"/><rect x="771" y="369" width="1" height="1" fill="#d8d8d8"/><rect x="31" y="419" width="1" height="1" fill="#d8d8d8"/><rect x="41" y="419" width="1" height="1" fill="#d8d8d8"/><rect x="51" y="419" width="1" height="1" fill="#d8d8d8"/><rect x="61" y="419" width="1" height="1" fill="#d8d8d8"/><rect x="71" y="419" width="1" height="1" fill="#d8d8d8"/><rect x="81" y="419" width="1" height="1" fill="#d8d8d8"/><rect x="91" y="419" width="1" height="1" fill="#d8d8d8"/><rect x="101" y="419" width="1" height="1" fill="#d8d8d8"/><rect x="111" y="419" width="1" height="1" fill="#d8d8d8"/><rect x="121" y="419" width="1" height="1" fill="#d8d8d8"/><rect x="131" y="419" width="1" height="1" fill="#d8d8d8"/><rect x="141" y="419" width="1" height="1" fill="#d8d8d8"/><rect x="151" y="419" width="1" height="1" fill="#d8d8d8"/><rect x="161" y="419" width="1" height="1" fill="#d8d8d8"/><rect x="171" y="419" width="1" height="1" fill="#d8d8d8"/><rect x="181" y="419" width="1" height="1" fill="#d8d8d8"/><rect x="191" y="419" width="1" height="1" fill="#d8d8d8"/><rect x="201" y="419" width="1" height="1" fill="#d8d8d8"/><rect x="211" y="419" width="1" height="1" fill="#d8d8d8"/><rect x="221" y="419" width="1" height="1" fill="#d8d8d8"/><rect x="231" y="419" width="1" height="1" fill="#d8d8d8"/><rect x="241" y="419" width="1" height="1" fill="#d8d8d8"/><rect x="251" y="419" width="1" height="1" fill="#d8d8d8"/><rect x="261" y="419" width="1" height="1" fill="#d8d8d8"/><rect x="271" y="419" width="1" height="1" fill="#d8d8d8"/><rect x="281" y="419" width="1" height="1" fill="#d8d8d8"/><rect x="291" y="419" width="1" height="1" fill="#d8d8d8"/><rect x="301" y="419" width="1" height="1" fill="#d8d8d8"/><rect x="311" y="419" width="1" height="1" fill="#d8d8d8"/><rect x="321" y="419" width="1" height="1" fill="#d8d8d8"/><rect x="331" y="419" width="1" height="1" fill="#d8d8d8"/><rect x="341" y="419" width="1" height="1" fill="#d8d8d8"/><rect x="351" y="419" width="1" height="1" fill="#d8d8d8"/><rect x="361" y="419" width="1" height="1" fill="#d8d8d8"/><rect x="371" y="419" width="1" height="1" fill="#d8d8d8"/><rect x="381" y="419" width="1" height="1" fill="#d8d8d8"/><rect x="391" y="419" width="1" height="1" fill="#d8d8d8"/><rect x="401" y="419" width="1" height="1" fill="#d8d8d8"/><rect x="411" y="419" width="1" height="1" fill="#d8d8d8"/><rect x="421" y="419" width="1" height="1" fill="#d8d8d8"/><rect x="431" y="419" width="1" height="1" fill="#d8d8d8"/><rect x="441" y="419" width="1" height="1" fill="#d8d8d8"/><rect x="451" y="419" width="1" height="1" fill="#d8d8d8"/><rect x="461" y="419" width="1" height="1" fill="#d8d8d8"/><rect x="471" y="419" width="1" height="1" fill="#d8d8d8"/><rect x="481" y="419" width="1" height="1" fill="#d8d8d8"/><rect x="491" y="419" width="1" height="1" fill="#d8d8d8"/><rect x="501" y="419" width="1" height="1" fill="#d8d8d8"/><rect x="511" y="419" width="1" height="1" fill="#d8d8d8"/><rect x="521" y="419" width="1" height="1" fill="#d8d8d8"/><rect x="531" y="419" width="1" height="1" fill="#d8d8d8"/><rect x="541" y="419" width="1" height="1" fill="#d8d8d8"/><rect x="551" y="419" width="1" height="1" fill="#d8d8d8"/><rect x="561" y="419" width="1" height="1" fill="#d8d8d8"/><rect x="571" y="419" width="1" height="1" fill="#d8d8d8"/><rect x="581" y="419" width="1" height="1" fill="#d8d8d8"/><rect x="591" y="419" width="1" height="1" fill="#d8d8d8"/><rect x="601" y="419" width="1" height="1" fill="#d8d8d8"/><rect x="611" y="419" width="1" height="1" fill="#d8d8d8"/><rect x="621" y="419" width="1" height="1" fill="#d8d8d8"/><rect x="631" y="419" width="1" height="1" fill="#d8d8d8"/><rect x="641" y="419" width="1" height="1" fill="#d8d8d8"/><rect x="651" y="419" width="1" height="1" fill="#d8d8d8"/><rect x="661" y="419" width="1" height="1" fill="#d8d8d8"/><rect x="671" y="419" width="1" height="1" fill="#d8d8d8"/><rect x="681" y="419" width="1" height="1" fill="#d8d8d8"/><rect x="691" y="419" width="1" height="1" fill="#d8d8d8"/><rect x="701" y="419" width="1" height="1" fill="#d8d8d8"/><rect x="711" y="419" width="1" height="1" fill="#d8d8d8"/><rect x="721" y="419" width="1" height="1" fill="#d8d8d8"/><rect x="731" y="419" width="1" height="1" fill="#d8d8d8"/><rect x="741" y="419" width="1" height="1" fill="#d8d8d8"/><rect x="751" y="419" width="1" height="1" fill="#d8d8d8"/><rect x="761" y="419" width="1" height="1" fill="#d8d8d8"/><rect x="771" y="419" width="1" height="1" fill="#d8d8d8"/><rect x="31" y="469" width="1" height="1" fill="#d8d8d8"/><rect x="41" y="469" width="1" height="1" fill="#d8d8d8"/><rect x="51" y="469" width="1" height="1" fill="#d8d8d8"/><rect x="61" y="469" width="1" height="1" fill="#d8d8d8"/><rect x="71" y="469" width="1" height="1" fill="#d8d8d8"/><rect x="81" y="469" width="1" height="1" fill="#d8d8d8"/><rect x="91" y="469" width="1" height="1" fill="#d8d8d8"/><rect x="101" y="469" width="1" height="1" fill="#d8d8d8"/><rect x="111" y="469" width="1" height="1" fill="#d8d8d8"/><rect x="121" y="469" width="1" height="1" fill="#d8d8d8"/><rect x="131" y="469" width="1" height="1" fill="#d8d8d8"/><rect x="141" y="469" width="1" height="1" fill="#d8d8d8"/><rect x="151" y="469" width="1" height="1" fill="#d8d8d8"/><rect x="161" y="469" width="1" height="1" fill="#d8d8d8"/><rect x="171" y="469" width="1" height="1" fill="#d8d8d8"/><rect x="181" y="469" width="1" height="1" fill="#d8d8d8"/><rect x="191" y="469" width="1" height="1" fill="#d8d8d8"/><rect x="201" y="469" width="1" height="1" fill="#d8d8d8"/><rect x="211" y="469" width="1" height="1" fill="#d8d8d8"/><rect x="221" y="469" width="1" height="1" fill="#d8d8d8"/><rect x="231" y="469" width="1" height="1" fill="#d8d8d8"/><rect x="241" y="469" width="1" height="1" fill="#d8d8d8"/><rect x="251" y="469" width="1" height="1" fill="#d8d8d8"/><rect x="261" y="469" width="1" height="1" fill="#d8d8d8"/><rect x="271" y="469" width="1" height="1" fill="#d8d8d8"/><rect x="281" y="469" width="1" height="1" fill="#d8d8d8"/><rect x="291" y="469" width="1" height="1" fill="#d8d8d8"/><rect x="301" y="469" width="1" height="1" fill="#d8d8d8"/><rect x="311" y="469" width="1" height="1" fill="#d8d8d8"/><rect x="321" y="469" width="1" height="1" fill="#d8d8d8"/><rect x="331" y="469" width="1" height="1" fill="#d8d8d8"/><rect x="341" y="469" width="1" height="1" fill="#d8d8d8"/><rect x="351" y="469" width="1" height="1" fill="#d8d8d8"/><rect x="361" y="469" width="1" height="1" fill="#d8d8d8"/><rect x="371" y="469" width="1" height="1" fill="#d8d8d8"/><rect x="381" y="469" width="1" height="1" fill="#d8d8d8"/><rect x="391" y="469" width="1" height="1" fill="#d8d8d8"/><rect x="401" y="469" width="1" height="1" fill="#d8d8d8"/><rect x="411" y="469" width="1" height="1" fill="#d8d8d8"/><rect x="421" y="469" width="1" height="1" fill="#d8d8d8"/><rect x="431" y="469" width="1" height="1" fill="#d8d8d8"/><rect x="441" y="469" width="1" height="1" fill="#d8d8d8"/><rect x="451" y="469" width="1" height="1" fill="#d8d8d8"/><rect x="461" y="469" width="1" height="1" fill="#d8d8d8"/><rect x="471" y="469" width="1" height="1" fill="#d8d8d8"/><rect x="481" y="469" width="1" height="1" fill="#d8d8d8"/><rect x="491" y="469" width="1" height="1" fill="#d8d8d8"/><rect x="501" y="469" width="1" height="1" fill="#d8d8d8"/><rect x="511" y="469" width="1" height="1" fill="#d8d8d8"/><rect x="521" y="469" width="1" height="1" fill="#d8d8d8"/><rect x="531" y="469" width="1" height="1" fill="#d8d8d8"/><rect x="541" y="469" width="1" height="1" fill="#d8d8d8"/><rect x="551" y="469" width="1" height="1" fill="#d8d8d8"/><rect x="561" y="469" width="1" height="1" fill="#d8d8d8"/><rect x="571" y="469" width="1" height="1" fill="#d8d8d8"/><rect x="581" y="469" width="1" height="1" fill="#d8d8d8"/><rect x="591" y="469" width="1" height="1" fill="#d8d8d8"/><rect x="601" y="469" width="1" height="1" fill="#d8d8d8"/><rect x="611" y="469" width="1" height="1" fill="#d8d8d8"/><rect x="621" y="469" width="1" height="1" fill="#d8d8d8"/><rect x="631" y="469" width="1" height="1" fill="#d8d8d8"/><rect x="641" y="469" width="1" height="1" fill="#d8d8d8"/><rect x="651" y="469" width="1" height="1" fill="#d8d8d8"/><rect x="661" y="469" width="1" height="1" fill="#d8d8d8"/><rect x="671" y="469" width="1" height="1" fill="#d8d8d8"/><rect x="681" y="469" width="1" height="1" fill="#d8d8d8"/><rect x="691" y="469" width="1" height="1" fill="#d8d8d8"/><rect x="701" y="469" width="1" height="1" fill="#d8d8d8"/><rect x="711" y="469" width="1" height="1" fill="#d8d8d8"/><rect x="721" y="469" width="1" height="1" fill="#d8d8d8"/><rect x="731" y="469" width="1" height="1" fill="#d8d8d8"/><rect x="741" y="469" width="1" height="1" fill="#d8d8d8"/><rect x="751" y="469" width="1" height="1" fill="#d8d8d8"/><rect x="761" y="469" width="1" height="1" fill="#d8d8d8"/><rect x="771" y="469" width="1" height="1" fill="#d8d8d8"/><rect x="400" y="29" width="3" height="1" fill="#e4f2fc"/><rect x="400" y="39" width="3" height="1" fill="#e4f2fc"/><rect x="400" y="49" width="3" height="1" fill="#e4f2fc"/><rect x="400" y="59" width="3" height="1" fill="#e4f2fc"/><rect x="400" y="69" width="3" height="1" fill="#e4f2fc"/><rect x="400" y="79" width="3" height="1" fill="#e4f2fc"/><rect x="400" y="89" width="3" height="1" fill="#e4f2fc"/><rect x="400" y="99" width="3" height="1" fill="#e4f2fc"/><rect x="400" y="109" width="3" height="1" fill="#e4f2fc"/><rect x="400" y="119" width="3" height="1" fill="#e4f2fc"/><rect x="400" y="129" width="3" height="1" fill="#e4f2fc"/><rect x="400" y="139" width="3" height="1" fill="#e4f2fc"/><rect x="400" y="149" width="3" height="1" fill="#e4f2fc"/><rect x="400" y="159" width="3" height="1" fill="#e4f2fc"/><rect x="400" y="169" width="3" height="1" fill="#e4f2fc"/><rect x="400" y="179" width="3" height="1" fill="#e4f2fc"/><rect x="400" y="189" width="3" height="1" fill="#e4f2fc"/><rect x="400" y="199" width="3" height="1" fill="#e4f2fc"/><rect x="400" y="209" width="3" height="1" fill="#e4f2fc"/><rect x="400" y="219" width="3" height="1" fill="#e4f2fc"/><rect x="400" y="229" width="3" height="1" fill="#e4f2fc"/><rect x="400" y="239" width="3" height="1" fill="#e4f2fc"/><rect x="400" y="249" width="3" height="1" fill="#e4f2fc"/><rect x="400" y="259" width="3" height="1" fill="#e4f2fc"/><rect x="400" y="269" width="3" height="1" fill="#e4f2fc"/><rect x="400" y="279" width="3" height="1" fill="#e4f2fc"/><rect x="400" y="289" width="3" height="1" fill="#e4f2fc"/><rect x="400" y="299" width="3" height="1" fill="#e4f2fc"/><rect x="400" y="309" width="3" height="1" fill="#e4f2fc"/><rect x="400" y="319" width="3" height="1" fill="#e4f2fc"/><rect x="400" y="329" width="3" height="1" fill="#e4f2fc"/><rect x="400" y="339" width="3" height="1" fill="#e4f2fc"/><rect x="400" y="349" width="3" height="1" fill="#e4f2fc"/><rect x="400" y="359" width="3" height="1" fill="#e4f2fc"/><rect x="400" y="369" width="3" height="1" fill="#e4f2fc"/><rect x="400" y="379" width="3" height="1" fill="#e4f2fc"/><rect x="400" y="389" width="3" height="1" fill="#e4f2fc"/><rect x="400" y="399" width="3" height="1" fill="#e4f2fc"/><rect x="400" y="409" width="3" height="1" fill="#e4f2fc"/><rect x="400" y="419" width="3" height="1" fill="#e4f2fc"/><rect x="400" y="429" width="3" height="1" fill="#e4f2fc"/><rect x="400" y="439" width="3" height="1" fill="#e4f2fc"/><rect x="400" y="449" width="3" height="1" fill="#e4f2fc"/><rect x="400" y="459" width="3" height="1" fill="#e4f2fc"/><rect x="400" y="469" width="3" height="1" fill="#e4f2fc"/><rect x="400" y="479" width="3" height="1" fill="#e4f2fc"/><rect x="400" y="489" width="3" height="1" fill="#e4f2fc"/><rect x="400" y="499" width="3" height="1" fill="#e4f2fc"/><rect x="400" y="509" width="3" height="1" fill="#e4f2fc"/><rect x="31" y="268" width="1" height="3" fill="#e4f2fc"/><rect x="41" y="268" width="1" height="3" fill="#e4f2fc"/><rect x="51" y="268" width="1" height="3" fill="#e4f2fc"/><rect x="61" y="268" width="1" height="3" fill="#e4f2fc"/><rect x="71" y="268" width="1" height="3" fill="#e4f2fc"/><rect x="81" y="268" width="1" height="3" fill="#e4f2fc"/><rect x="91" y="268" width="1" height="3" fill="#e4f2fc"/><rect x="101" y="268" width="1" height="3" fill="#e4f2fc"/><rect x="111" y="268" width="1" height="3" fill="#e4f2fc"/><rect x="121" y="268" width="1" height="3" fill="#e4f2fc"/><rect x="131" y="268" width="1" height="3" fill="#e4f2fc"/><rect x="141" y="268" width="1" height="3" fill="#e4f2fc"/><rect x="151" y="268" width="1" height="3" fill="#e4f2fc"/><rect x="161" y="268" width="1" height="3" fill="#e4f2fc"/><rect x="171" y="268" width="1" height="3" fill="#e4f2fc"/><rect x="181" y="268" width="1" height="3" fill="#e4f2fc"/><rect x="191" y="268" width="1" height="3" fill="#e4f2fc"/><rect x="201" y="268" width="1" height="3" fill="#e4f2fc"/><rect x="211" y="268" width="1" height="3" fill="#e4f2fc"/><rect x="221" y="268" width="1" height="3" fill="#e4f2fc"/><rect x="231" y="268" width="1" height="3" fill="#e4f2fc"/><rect x="241" y="268" width="1" height="3" fill="#e4f2fc"/><rect x="251" y="268" width="1" height="3" fill="#e4f2fc"/><rect x="261" y="268" width="1" height="3" fill="#e4f2fc"/><rect x="271" y="268" width="1" height="3" fill="#e4f2fc"/><rect x="281" y="268" width="1" height="3" fill="#e4f2fc"/><rect x="291" y="268" width="1" height="3" fill="#e4f2fc"/><rect x="301" y="268" width="1" height="3" fill="#e4f2fc"/><rect x="311" y="268" width="1" height="3" fill="#e4f2fc"/><rect x="321" y="268" width="1" height="3" fill="#e4f2fc"/><rect x="331" y="268" width="1" height="3" fill="#e4f2fc"/><rect x="341" y="268" width="1" height="3" fill="#e4f2fc"/><rect x="351" y="268" width="1" height="3" fill="#e4f2fc"/><rect x="361" y="268" width="1" height="3" fill="#e4f2fc"/><rect x="371" y="268" width="1" height="3" fill="#e4f2fc"/><rect x="381" y="268" width="1" height="3" fill="#e4f2fc"/><rect x="391" y="268" width="1" height="3" fill="#e4f2fc"/><rect x="401" y="268" width="1" height="3" fill="#e4f2fc"/><rect x="411" y="268" width="1" height="3" fill="#e4f2fc"/><rect x="421" y="268" width="1" height="3" fill="#e4f2fc"/><rect x="431" y="268" width="1" height="3" fill="#e4f2fc"/><rect x="441" y="268" width="1" height="3" fill="#e4f2fc"/><rect x="451" y="268" width="1" height="3" fill="#e4f2fc"/><rect x="461" y="268" width="1" height="3" fill="#e4f2fc"/><rect x="471" y="268" width="1" height="3" fill="#e4f2fc"/><rect x="481" y="268" width="1" height="3" fill="#e4f2fc"/><rect x="491" y="268" width="1" height="3" fill="#e4f2fc"/><rect x="501" y="268" width="1" height="3" fill="#e4f2fc"/><rect x="511" y="268" width="1" height="3" fill="#e4f2fc"/><rect x="521" y="268" width="1" height="3" fill="#e4f2fc"/><rect x="531" y="268" width="1" height="3" fill="#e4f2fc"/><rect x="541" y="268" width="1" height="3" fill="#e4f2fc"/><rect x="551" y="268" width="1" height="3" fill="#e4f2fc"/><rect x="561" y="268" width="1" height="3" fill="#e4f2fc"/><rect x="571" y="268" width="1" height="3" fill="#e4f2fc"/><rect x="581" y="268" width="1" height="3" fill="#e4f2fc"/><rect x="591" y="268" width="1" height="3" fill="#e4f2fc"/><rect x="601" y="268" width="1" height="3" fill="#e4f2fc"/><rect x="611" y="268" width="1" height="3" fill="#e4f2fc"/><rect x="621" y="268" width="1" height="3" fill="#e4f2fc"/><rect x="631" y="268" width="1" height="3" fill="#e4f2fc"/><rect x="641" y="268" width="1" height="3" fill="#e4f2fc"/><rect x="651" y="268" width="1" height="3" fill="#e4f2fc"/><rect x="661" y="268" width="1" height="3" fill="#e4f2fc"/><rect x="671" y="268" width="1" height="3" fill="#e4f2fc"/><rect x="681" y="268" width="1" height="3" fill="#e4f2fc"/><rect x="691" y="268" width="1" height="3" fill="#e4f2fc"/><rect x="701" y="268" width="1" height="3" fill="#e4f2fc"/><rect x="711" y="268" width="1" height="3" fill="#e4f2fc"/><rect x="721" y="268" width="1" height="3" fill="#e4f2fc"/><rect x="731" y="268" width="1" height="3" fill="#e4f2fc"/><rect x="741" y="268" width="1" height="3" fill="#e4f2fc"/><rect x="751" y="268" width="1" height="3" fill="#e4f2fc"/><rect x="761" y="268" width="1" height="3" fill="#e4f2fc"/><rect x="771" y="268" width="1" height="3" fill="#e4f2fc"/><rect x="146" y="269" width="11" height="1" fill="#e4f2fc"/><rect x="151" y="264" width="1" height="11" fill="#e4f2fc"/><rect x="646" y="269" width="11" height="1" fill="#e4f2fc"/><rect x="651" y="264" width="1" height="11" fill="#e4f2fc"/>
<g shape-rendering="geometricPrecision"><clipPath id="cp"><rect x="22" y="21" width="756" height="496"/></clipPath><g clip-path="url(#cp)"><polyline points="20.00,429.01 20.25,429.44 20.50,429.86 20.75,430.25 21.00,430.63 21.25,430.99 21.50,431.34 21.75,431.67 22.00,431.98 22.25,432.27 22.50,432.54 22.75,432.80 23.00,433.04 23.25,433.26 23.50,433.46 23.75,433.65 24.00,433.81 24.25,433.96 24.50,434.09 24.75,434.20 25.00,434.30 25.25,434.38 25.50,434.43 25.75,434.47 26.00,434.50 26.25,434.50 26.50,434.48 26.75,434.45 27.00,434.40 27.25,434.33 27.50,434.24 27.75,434.14 28.00,434.02 28.25,433.87 28.50,433.71 28.75,433.54 29.00,433.34 29.25,433.13 29.50,432.90 29.75,432.65 30.00,432.38 30.25,432.09 30.50,431.79 30.75,431.47 31.00,431.13 31.25,430.78 31.50,430.41 31.75,430.02 32.00,429.61 32.25,429.19 32.50,428.75 32.75,428.29 33.00,427.82 33.25,427.33 33.50,426.82 33.75,426.29 34.00,425.75 34.25,425.20 34.50,424.63 34.75,424.04 35.00,423.43 35.25,422.82 35.50,422.18 35.75,421.53 36.00,420.86 36.25,420.18 36.50,419.49 36.75,418.78 37.00,418.05 37.25,417.31 37.50,416.56 37.75,415.79 38.00,415.01 38.25,414.22 38.50,413.41 38.75,412.59 39.00,411.75 39.25,410.90 39.50,410.04 39.75,409.16 40.00,408.28 40.25,407.38 40.50,406.47 40.75,405.54 41.00,404.61 41.25,403.66 41.50,402.70 41.75,401.73 42.00,400.75 42.25,399.75 42.50,398.75 42.75,397.74 43.00,396.71 43.25,395.68 43.50,394.63 43.75,393.58 44.00,392.51 44.25,391.44 44.50,390.36 44.75,389.27 45.00,388.16 45.25,387.05 45.50,385.94 45.75,384.81 46.00,383.67 46.25,382.53 46.50,381.38 46.75,380.22 47.00,379.05 47.25,377.88 47.50,376.70 47.75,375.51 48.00,374.32 48.25,373.12 48.50,371.91 48.75,370.69 49.00,369.47 49.25,368.25 49.50,367.02 49.75,365.78 50.00,364.53 50.25,363.28 50.50,362.03 50.75,360.77 51.00,359.51 51.25,358.24 51.50,356.96 51.75,355.69 52.00,354.40 52.25,353.12 52.50,351.83 52.75,350.53 53.00,349.23 53.25,347.93 53.50,346.63 53.75,345.32 54.00,344.00 54.25,342.69 54.50,341.37 54.75,340.05 55.00,338.72 55.25,337.39 55.50,336.06 55.75,334.73 56.00,333.39 56.25,332.06 56.50,330.72 56.75,329.37 57.00,328.03 57.25,326.68 57.50,325.34 57.75,323.99 58.00,322.63 58.25,321.28 58.50,319.92 58.75,318.57 59.00,317.21 59.25,315.85 59.50,314.49 59.75,313.13 60.00,311.76 60.25,310.40 60.50,309.03 60.75,307.67 61.00,306.30 61.25,304.93 61.50,303.56 61.75,302.19 62.00,300.82 62.25,299.45 62.50,298.07 62.75,296.70 63.00,295.33 63.25,293.95 63.50,292.58 63.75,291.20 64.00,289.83 64.25,288.45 64.50,287.07 64.75,285.70 65.00,284.32 65.25,282.94 65.50,281.56 65.75,280.19 66.00,278.81 66.25,277.43 66.50,276.05 66.75,274.67 67.00,273.29 67.25,271.91 67.50,270.53 67.75,269.16 68.00,267.78 68.25,266.40 68.50,265.02 68.75,263.64 69.00,262.26 69.25,260.88 69.50,259.50 69.75,258.13 70.00,256.75 70.25,255.37 70.50,253.99 70.75,252.62 71.00,251.24 71.25,249.86 71.50,248.49 71.75,247.11 72.00,245.73 72.25,244.36 72.50,242.99 72.75,241.61 73.00,240.24 73.25,238.87 73.50,237.50 73.75,236.13 74.00,234.76 74.25,233.39 74.50,232.02 74.75,230.65 75.00,229.28 75.25,227.92 75.50,226.56 75.75,225.19 76.00,223.83 76.25,222.47 76.50,221.11 76.75,219.75 77.00,218.40 77.25,217.04 77.50,215.69 77.75,214.34 78.00,212.99 78.25,211.64 78.50,210.30 78.75,208.95 79.00,207.61 79.25,206.27 79.50,204.94 79.75,203.60 80.00,202.27 80.25,200.94 80.50,199.62 80.75,198.29 81.00,196.97 81.25,195.65 81.50,194.34 81.75,193.03 82.00,191.72 82.25,190.42 82.50,189.12 82.75,187.82 83.00,186.53 83.25,185.24 83.50,183.95 83.75,182.67 84.00,181.40 84.25,180.13 84.50,178.86 84.75,177.60 85.00,176.34 85.25,175.09 85.50,173.84 85.75,172.60 86.00,171.37 86.25,170.14 86.50,168.92 86.75,167.70 87.00,166.49 87.25,165.28 87.50,164.08 87.75,162.89 88.00,161.71 88.25,160.53 88.50,159.36 88.75,158.20 89.00,157.04 89.25,155.90 89.50,154.76 89.75,153.63 90.00,152.50 90.25,151.39 90.50,150.28 90.75,149.19 91.00,148.10 91.25,147.02 91.50,145.95 91.75,144.89 92.00,143.84 92.25,142.80 92.50,141.77 92.75,140.75 93.00,139.75 93.25,138.75 93.50,137.76 93.75,136.78 94.00,135.82 94.25,134.87 94.50,133.93 94.75,133.00 95.00,132.08 95.25,131.17 95.50,130.28 95.75,129.40 96.00,128.53 96.25,127.67 96.50,126.83 96.75,126.00 97.00,125.19 97.25,124.38 97.50,123.60 97.75,122.82 98.00,122.06 98.25,121.31 98.50,120.58 98.75,119.86 99.00,119.16 99.25,118.47 99.50,117.80 99.75,117.14 100.00,116.50 100.25,115.87 100.50,115.26 100.75,114.67 101.00,114.09 101.25,113.52 101.50,112.97 101.75,112.44 102.00,111.93 102.25,111.43 102.50,110.94 102.75,110.48 103.00,110.03 103.25,109.60 103.50,109.18 103.75,108.79 104.00,108.40 104.25,108.04 104.50,107.69 104.75,107.37 105.00,107.05 105.25,106.76 105.50,106.49 105.75,106.23 106.00,105.99 106.25,105.76 106.50,105.56 106.75,105.37 107.00,105.20 107.25,105.05 107.50,104.92 107.75,104.81 108.00,104.71 108.25,104.63 108.50,104.57 108.75,104.53 109.00,104.51 109.25,104.50 109.50,104.51 109.75,104.54 110.00,104.59 110.25,104.66 110.50,104.75 110.75,104.85 111.00,104.97 111.25,105.11 111.50,105.27 111.75,105.45 112.00,105.64 112.25,105.85 112.50,106.08 112.75,106.33 113.00,106.59 113.25,106.88 113.50,107.18 113.75,107.50 114.00,107.83 114.25,108.18 114.50,108.55 114.75,108.94 115.00,109.35 115.25,109.77 115.50,110.21 115.75,110.66 116.00,111.14 116.25,111.62 116.50,112.13 116.75,112.65 117.00,113.19 117.25,113.75 117.50,114.32 117.75,114.90 118.00,115.50 118.25,116.12 118.50,116.76 118.75,117.40 119.00,118.07 119.25,118.75 119.50,119.44 119.75,120.15 120.00,120.87 120.25,121.61 120.50,122.36 120.75,123.13 121.00,123.91 121.25,124.70 121.50,125.51 121.75,126.33 122.00,127.17 122.25,128.01 122.50,128.87 122.75,129.75 123.00,130.63 123.25,131.53 123.50,132.44 123.75,133.37 124.00,134.30 124.25,135.25 124.50,136.20 124.75,137.17 125.00,138.15 125.25,139.15 125.50,140.15 125.75,141.16 126.00,142.18 126.25,143.22 126.50,144.26 126.75,145.32 127.00,146.38 127.25,147.45 127.50,148.53 127.75,149.62 128.00,150.72 128.25,151.83 128.50,152.95 128.75,154.08 129.00,155.21 129.25,156.35 129.50,157.50 129.75,158.66 130.00,159.83 130.25,161.00 130.50,162.18 130.75,163.37 131.00,164.56 131.25,165.76 131.50,166.97 131.75,168.18 132.00,169.40 132.25,170.63 132.50,171.86 132.75,173.10 133.00,174.34 133.25,175.59 133.50,176.84 133.75,178.10 134.00,179.37 134.25,180.63 134.50,181.91 134.75,183.19 135.00,184.47 135.25,185.75 135.50,187.04 135.75,188.34 136.00,189.64 136.25,190.94 136.50,192.24 136.75,193.55 137.00,194.87 137.25,196.18 137.50,197.50 137.75,198.82 138.00,200.15 138.25,201.47 138.50,202.80 138.75,204.14 139.00,205.47 139.25,206.81 139.50,208.15 139.75,209.49 140.00,210.84 140.25,212.18 140.50,213.53 140.75,214.88 141.00,216.23 141.25,217.59 141.50,218.94 141.75,220.30 142.00,221.65 142.25,223.01 142.50,224.38 142.75,225.74 143.00,227.10 143.25,228.47 143.50,229.83 143.75,231.20 144.00,232.57 144.25,233.93 144.50,235.30 144.75,236.67 145.00,238.04 145.25,239.42 145.50,240.79 145.75,242.16 146.00,243.54 146.25,244.91 146.50,246.28 146.75,247.66 147.00,249.04 147.25,250.41 147.50,251.79 147.75,253.17 148.00,254.54 148.25,255.92 148.50,257.30 148.75,258.68 149.00,260.06 149.25,261.43 149.50,262.81 149.75,264.19 150.00,265.57 150.25,266.95 150.50,268.33 150.75,269.71 151.00,271.09 151.25,272.46 151.50,273.84 151.75,275.22 152.00,276.60 152.25,277.98 152.50,279.36 152.75,280.74 153.00,282.11 153.25,283.49 153.50,284.87 153.75,286.25 154.00,287.62 154.25,289.00 154.50,290.38 154.75,291.75 155.00,293.13 155.25,294.50 155.50,295.88 155.75,297.25 156.00,298.62 156.25,300.00 156.50,301.37 156.75,302.74 157.00,304.11 157.25,305.48 157.50,306.85 157.75,308.21 158.00,309.58 158.25,310.94 158.50,312.31 158.75,313.67 159.00,315.03 159.25,316.39 159.50,317.75 159.75,319.11 160.00,320.47 160.25,321.82 160.50,323.17 160.75,324.53 161.00,325.87 161.25,327.22 161.50,328.57 161.75,329.91 162.00,331.25 162.25,332.59 162.50,333.93 162.75,335.26 163.00,336.60 163.25,337.93 163.50,339.25 163.75,340.58 164.00,341.90 164.25,343.21 164.50,344.53 164.75,345.84 165.00,347.15 165.25,348.45 165.50,349.75 165.75,351.05 166.00,352.34 166.25,353.63 166.50,354.92 166.75,356.20 167.00,357.47 167.25,358.75 167.50,360.01 167.75,361.28 168.00,362.53 168.25,363.79 168.50,365.03 168.75,366.27 169.00,367.51 169.25,368.74 169.50,369.96 169.75,371.18 170.00,372.39 170.25,373.60 170.50,374.80 170.75,375.99 171.00,377.17 171.25,378.35 171.50,379.52 171.75,380.69 172.00,381.84 172.25,382.99 172.50,384.13 172.75,385.26 173.00,386.38 173.25,387.50 173.50,388.61 173.75,389.70 174.00,390.79 174.25,391.87 174.50,392.94 174.75,394.00 175.00,395.05 175.25,396.09 175.50,397.12 175.75,398.14 176.00,399.15 176.25,400.15 176.50,401.14 176.75,402.12 177.00,403.08 177.25,404.04 177.50,404.98 177.75,405.91 178.00,406.83 178.25,407.74 178.50,408.63 178.75,409.52 179.00,410.39 179.25,411.24 179.50,412.09 179.75,412.92 180.00,413.73 180.25,414.54 180.50,415.33 180.75,416.10 181.00,416.86 181.25,417.61 181.50,418.35 181.75,419.06 182.00,419.77 182.25,420.46 182.50,421.13 182.75,421.79 183.00,422.44 183.25,423.06 183.50,423.68 183.75,424.28 184.00,424.86 184.25,425.42 184.50,425.97 184.75,426.51 185.00,427.02 185.25,427.52 185.50,428.01 185.75,428.48 186.00,428.93 186.25,429.36 186.50,429.78 186.75,430.18 187.00,430.56 187.25,430.92 187.50,431.27 187.75,431.60 188.00,431.91 188.25,432.21 188.50,432.49 188.75,432.75 189.00,432.99 189.25,433.21 189.50,433.42 189.75,433.61 190.00,433.78 190.25,433.93 190.50,434.07 190.75,434.18 191.00,434.28 191.25,434.36 191.50,434.42 191.75,434.47 192.00,434.49 192.25,434.50 192.50,434.49 192.75,434.46 193.00,434.41 193.25,434.35 193.50,434.26 193.75,434.16 194.00,434.04 194.25,433.90 194.50,433.75 194.75,433.57 195.00,433.38 195.25,433.17 195.50,432.94 195.75,432.70 196.00,432.43 196.25,432.15 196.50,431.85 196.75,431.54 197.00,431.20 197.25,430.85 197.50,430.48 197.75,430.10 198.00,429.69 198.25,429.27 198.50,428.84 198.75,428.38 199.00,427.91 199.25,427.42 199.50,426.92 199.75,426.40 200.00,425.86 200.25,425.31 200.50,424.74 200.75,424.16 201.00,423.56 201.25,422.94 201.50,422.31 201.75,421.66 202.00,421.00 202.25,420.32 202.50,419.63 202.75,418.92 203.00,418.20 203.25,417.46 203.50,416.71 203.75,415.95 204.00,415.17 204.25,414.38 204.50,413.57 204.75,412.75 205.00,411.92 205.25,411.07 205.50,410.21 205.75,409.34 206.00,408.46 206.25,407.56 206.50,406.65 206.75,405.73 207.00,404.79 207.25,403.85 207.50,402.89 207.75,401.92 208.00,400.94 208.25,399.95 208.50,398.95 208.75,397.94 209.00,396.92 209.25,395.89 209.50,394.84 209.75,393.79 210.00,392.73 210.25,391.66 210.50,390.58 210.75,389.48 211.00,388.39 211.25,387.28 211.50,386.16 211.75,385.04 212.00,383.90 212.25,382.76 212.50,381.61 212.75,380.45 213.00,379.29 213.25,378.12 213.50,376.94 213.75,375.75 214.00,374.56 214.25,373.36 214.50,372.15 214.75,370.94 215.00,369.72 215.25,368.49 215.50,367.26 215.75,366.03 216.00,364.78 216.25,363.54 216.50,362.28 216.75,361.02 217.00,359.76 217.25,358.49 217.50,357.22 217.75,355.94 218.00,354.66 218.25,353.38 218.50,352.09 218.75,350.79 219.00,349.49 219.25,348.19 219.50,346.89 219.75,345.58 220.00,344.27 220.25,342.95 220.50,341.63 220.75,340.31 221.00,338.99 221.25,337.66 221.50,336.33 221.75,335.00 222.00,333.66 222.25,332.32 222.50,330.99 222.75,329.64 223.00,328.30 223.25,326.95 223.50,325.61 223.75,324.26 224.00,322.90 224.25,321.55 224.50,320.20 224.75,318.84 225.00,317.48 225.25,316.12 225.50,314.76 225.75,313.40 226.00,312.04 226.25,310.67 226.50,309.31 226.75,307.94 227.00,306.57 227.25,305.20 227.50,303.83 227.75,302.46 228.00,301.09 228.25,299.72 228.50,298.35 228.75,296.98 229.00,295.60 229.25,294.23 229.50,292.85 229.75,291.48 230.00,290.10 230.25,288.73 230.50,287.35 230.75,285.97 231.00,284.59 231.25,283.22 231.50,281.84 231.75,280.46 232.00,279.08 232.25,277.70 232.50,276.33 232.75,274.95 233.00,273.57 233.25,272.19 233.50,270.81 233.75,269.43 234.00,268.05 234.25,266.67 234.50,265.29 234.75,263.92 235.00,262.54 235.25,261.16 235.50,259.78 235.75,258.40 236.00,257.02 236.25,255.65 236.50,254.27 236.75,252.89 237.00,251.51 237.25,250.14 237.50,248.76 237.75,247.39 238.00,246.01 238.25,244.64 238.50,243.26 238.75,241.89 239.00,240.51 239.25,239.14 239.50,237.77 239.75,236.40 240.00,235.03 240.25,233.66 240.50,232.29 240.75,230.92 241.00,229.56 241.25,228.19 241.50,226.83 241.75,225.46 242.00,224.10 242.25,222.74 242.50,221.38 242.75,220.03 243.00,218.67 243.25,217.31 243.50,215.96 243.75,214.61 244.00,213.26 244.25,211.91 244.50,210.57 244.75,209.22 245.00,207.88 245.25,206.54 245.50,205.20 245.75,203.87 246.00,202.54 246.25,201.21 246.50,199.88 246.75,198.56 247.00,197.24 247.25,195.92 247.50,194.60 247.75,193.29 248.00,191.98 248.25,190.68 248.50,189.38 248.75,188.08 249.00,186.79 249.25,185.50 249.50,184.21 249.75,182.93 250.00,181.65 250.25,180.38 250.50,179.11 250.75,177.85 251.00,176.59 251.25,175.34 251.50,174.09 251.75,172.85 252.00,171.61 252.25,170.38 252.50,169.16 252.75,167.94 253.00,166.73 253.25,165.52 253.50,164.32 253.75,163.13 254.00,161.94 254.25,160.77 254.50,159.59 254.75,158.43 255.00,157.27 255.25,156.13 255.50,154.98 255.75,153.85 256.00,152.73 256.25,151.61 256.50,150.50 256.75,149.41 257.00,148.32 257.25,147.24 257.50,146.17 257.75,145.10 258.00,144.05 258.25,143.01 258.50,141.98 258.75,140.96 259.00,139.95 259.25,138.95 259.50,137.96 259.75,136.98 260.00,136.01 260.25,135.06 260.50,134.11 260.75,133.18 261.00,132.26 261.25,131.35 261.50,130.46 261.75,129.57 262.00,128.70 262.25,127.84 262.50,127.00 262.75,126.17 263.00,125.35 263.25,124.54 263.50,123.75 263.75,122.97 264.00,122.21 264.25,121.46 264.50,120.73 264.75,120.01 265.00,119.30 265.25,118.61 265.50,117.93 265.75,117.27 266.00,116.63 266.25,116.00 266.50,115.38 266.75,114.78 267.00,114.20 267.25,113.63 267.50,113.08 267.75,112.55 268.00,112.03 268.25,111.53 268.50,111.04 268.75,110.57 269.00,110.12 269.25,109.68 269.50,109.26 269.75,108.86 270.00,108.48 270.25,108.11 270.50,107.76 270.75,107.43 271.00,107.12 271.25,106.82 271.50,106.54 271.75,106.28 272.00,106.03 272.25,105.81 272.50,105.60 272.75,105.41 273.00,105.24 273.25,105.08 273.50,104.95 273.75,104.83 274.00,104.73 274.25,104.65 274.50,104.58 274.75,104.54 275.00,104.51 275.25,104.50 275.50,104.51 275.75,104.54 276.00,104.58 276.25,104.65 276.50,104.73 276.75,104.83 277.00,104.95 277.25,105.08 277.50,105.24 277.75,105.41 278.00,105.60 278.25,105.81 278.50,106.03 278.75,106.28 279.00,106.54 279.25,106.82 279.50,107.12 279.75,107.43 280.00,107.76 280.25,108.11 280.50,108.48 280.75,108.86 281.00,109.26 281.25,109.68 281.50,110.12 281.75,110.57 282.00,111.04 282.25,111.53 282.50,112.03 282.75,112.55 283.00,113.08 283.25,113.63 283.50,114.20 283.75,114.78 284.00,115.38 284.25,116.00 284.50,116.63 284.75,117.27 285.00,117.93 285.25,118.61 285.50,119.30 285.75,120.01 286.00,120.73 286.25,121.46 286.50,122.21 286.75,122.97 287.00,123.75 287.25,124.54 287.50,125.35 287.75,126.17 288.00,127.00 288.25,127.84 288.50,128.70 288.75,129.57 289.00,130.46 289.25,131.35 289.50,132.26 289.75,133.18 290.00,134.11 290.25,135.06 290.50,136.01 290.75,136.98 291.00,137.96 291.25,138.95 291.50,139.95 291.75,140.96 292.00,141.98 292.25,143.01 292.50,144.05 292.75,145.10 293.00,146.17 293.25,147.24 293.50,148.32 293.75,149.41 294.00,150.50 294.25,151.61 294.50,152.73 294.75,153.85 295.00,154.98 295.25,156.13 295.50,157.27 295.75,158.43 296.00,159.59 296.25,160.77 296.50,161.94 296.75,163.13 297.00,164.32 297.25,165.52 297.50,166.73 297.75,167.94 298.00,169.16 298.25,170.38 298.50,171.61 298.75,172.85 299.00,174.09 299.25,175.34 299.50,176.59 299.75,177.85 300.00,179.11 300.25,180.38 300.50,181.65 300.75,182.93 301.00,184.21 301.25,185.50 301.50,186.79 301.75,188.08 302.00,189.38 302.25,190.68 302.50,191.98 302.75,193.29 303.00,194.60 303.25,195.92 303.50,197.24 303.75,198.56 304.00,199.88 304.25,201.21 304.50,202.54 304.75,203.87 305.00,205.20 305.25,206.54 305.50,207.88 305.75,209.22 306.00,210.57 306.25,211.91 306.50,213.26 306.75,214.61 307.00,215.96 307.25,217.31 307.50,218.67 307.75,220.03 308.00,221.38 308.25,222.74 308.50,224.10 308.75,225.46 309.00,226.83 309.25,228.19 309.50,229.56 309.75,230.92 310.00,232.29 310.25,233.66 310.50,235.03 310.75,236.40 311.00,237.77 311.25,239.14 311.50,240.51 311.75,241.89 312.00,243.26 312.25,244.64 312.50,246.01 312.75,247.39 313.00,248.76 313.25,250.14 313.50,251.51 313.75,252.89 314.00,254.27 314.25,255.65 314.50,257.02 314.75,258.40 315.00,259.78 315.25,261.16 315.50,262.54 315.75,263.92 316.00,265.29 316.25,266.67 316.50,268.05 316.75,269.43 317.00,270.81 317.25,272.19 317.50,273.57 317.75,274.95 318.00,276.33 318.25,277.70 318.50,279.08 318.75,280.46 319.00,281.84 319.25,283.22 319.50,284.59 319.75,285.97 320.00,287.35 320.25,288.73 320.50,290.10 320.75,291.48 321.00,292.85 321.25,294.23 321.50,295.60 321.75,296.98 322.00,298.35 322.25,299.72 322.50,301.09 322.75,302.46 323.00,303.83 323.25,305.20 323.50,306.57 323.75,307.94 324.00,309.31 324.25,310.67 324.50,312.04 324.75,313.40 325.00,314.76 325.25,316.12 325.50,317.48 325.75,318.84 326.00,320.20 326.25,321.55 326.50,322.90 326.75,324.26 327.00,325.61 327.25,326.95 327.50,328.30 327.75,329.64 328.00,330.99 328.25,332.32 328.50,333.66 328.75,335.00 329.00,336.33 329.25,337.66 329.50,338.99 329.75,340.31 330.00,341.63 330.25,342.95 330.50,344.27 330.75,345.58 331.00,346.89 331.25,348.19 331.50,349.49 331.75,350.79 332.00,352.09 332.25,353.38 332.50,354.66 332.75,355.94 333.00,357.22 333.25,358.49 333.50,359.76 333.75,361.02 334.00,362.28 334.25,363.54 334.50,364.78 334.75,366.03 335.00,367.26 335.25,368.49 335.50,369.72 335.75,370.94 336.00,372.15 336.25,373.36 336.50,374.56 336.75,375.75 337.00,376.94 337.25,378.12 337.50,379.29 337.75,380.45 338.00,381.61 338.25,382.76 338.50,383.90 338.75,385.04 339.00,386.16 339.25,387.28 339.50,388.39 339.75,389.48 340.00,390.58 340.25,391.66 340.50,392.73 340.75,393.79 341.00,394.84 341.25,395.89 341.50,396.92 341.75,397.94 342.00,398.95 342.25,399.95 342.50,400.94 342.75,401.92 343.00,402.89 343.25,403.85 343.50,404.79 343.75,405.73 344.00,406.65 344.25,407.56 344.50,408.46 344.75,409.34 345.00,410.21 345.25,411.07 345.50,411.92 345.75,412.75 346.00,413.57 346.25,414.38 346.50,415.17 346.75,415.95 347.00,416.71 347.25,417.46 347.50,418.20 347.75,418.92 348.00,419.63 348.25,420.32 348.50,421.00 348.75,421.66 349.00,422.31 349.25,422.94 349.50,423.56 349.75,424.16 350.00,424.74 350.25,425.31 350.50,425.86 350.75,426.40 351.00,426.92 351.25,427.42 351.50,427.91 351.75,428.38 352.00,428.84 352.25,429.27 352.50,429.69 352.75,430.10 353.00,430.48 353.25,430.85 353.50,431.20 353.75,431.54 354.00,431.85 354.25,432.15 354.50,432.43 354.75,432.70 355.00,432.94 355.25,433.17 355.50,433.38 355.75,433.57 356.00,433.75 356.25,433.90 356.50,434.04 356.75,434.16 357.00,434.26 357.25,434.35 357.50,434.41 357.75,434.46 358.00,434.49 358.25,434.50 358.50,434.49 358.75,434.47 359.00,434.42 359.25,434.36 359.50,434.28 359.75,434.18 360.00,434.07 360.25,433.93 360.50,433.78 360.75,433.61 361.00,433.42 361.25,433.21 361.50,432.99 361.75,432.75 362.00,432.49 362.25,432.21 362.50,431.91 362.75,431.60 363.00,431.27 363.25,430.92 363.50,430.56 363.75,430.18 364.00,429.78 364.25,429.36 364.50,428.93 364.75,428.48 365.00,428.01 365.25,427.52 365.50,427.02 365.75,426.51 366.00,425.97 366.25,425.42 366.50,424.86 366.75,424.28 367.00,423.68 367.25,423.06 367.50,422.44 367.75,421.79 368.00,421.13 368.25,420.46 368.50,419.77 368.75,419.06 369.00,418.35 369.25,417.61 369.50,416.86 369.75,416.10 370.00,415.33 370.25,414.54 370.50,413.73 370.75,412.92 371.00,412.09 371.25,411.24 371.50,410.39 371.75,409.52 372.00,408.63 372.25,407.74 372.50,406.83 372.75,405.91 373.00,404.98 373.25,404.04 373.50,403.08 373.75,402.12 374.00,401.14 374.25,400.15 374.50,399.15 374.75,398.14 375.00,397.12 375.25,396.09 375.50,395.05 375.75,394.00 376.00,392.94 376.25,391.87 376.50,390.79 376.75,389.70 377.00,388.61 377.25,387.50 377.50,386.38 377.75,385.26 378.00,384.13 378.25,382.99 378.50,381.84 378.75,380.69 379.00,379.52 379.25,378.35 379.50,377.17 379.75,375.99 380.00,374.80 380.25,373.60 380.50,372.39 380.75,371.18 381.00,369.96 381.25,368.74 381.50,367.51 381.75,366.27 382.00,365.03 382.25,363.79 382.50,362.53 382.75,361.28 383.00,360.01 383.25,358.75 383.50,357.47 383.75,356.20 384.00,354.92 384.25,353.63 384.50,352.34 384.75,351.05 385.00,349.75 385.25,348.45 385.50,347.15 385.75,345.84 386.00,344.53 386.25,343.21 386.50,341.90 386.75,340.58 387.00,339.25 387.25,337.93 387.50,336.60 387.75,335.26 388.00,333.93 388.25,332.59 388.50,331.25 388.75,329.91 389.00,328.57 389.25,327.22 389.50,325.87 389.75,324.53 390.00,323.17 390.25,321.82 390.50,320.47 390.75,319.11 391.00,317.75 391.25,316.39 391.50,315.03 391.75,313.67 392.00,312.31 392.25,310.94 392.50,309.58 392.75,308.21 393.00,306.85 393.25,305.48 393.50,304.11 393.75,302.74 394.00,301.37 394.25,300.00 394.50,298.62 394.75,297.25 395.00,295.88 395.25,294.50 395.50,293.13 395.75,291.75 396.00,290.38 396.25,289.00 396.50,287.62 396.75,286.25 397.00,284.87 397.25,283.49 397.50,282.11 397.75,280.74 398.00,279.36 398.25,277.98 398.50,276.60 398.75,275.22 399.00,273.84 399.25,272.46 399.50,271.09 399.75,269.71 400.00,268.33 400.25,266.95 400.50,265.57 400.75,264.19 401.00,262.81 401.25,261.43 401.50,260.06 401.75,258.68 402.00,257.30 402.25,255.92 402.50,254.54 402.75,253.17 403.00,251.79 403.25,250.41 403.50,249.04 403.75,247.66 404.00,246.28 404.25,244.91 404.50,243.54 404.75,242.16 405.00,240.79 405.25,239.42 405.50,238.04 405.75,236.67 406.00,235.30 406.25,233.93 406.50,232.57 406.75,231.20 407.00,229.83 407.25,228.47 407.50,227.10 407.75,225.74 408.00,224.38 408.25,223.01 408.50,221.65 408.75,220.30 409.00,218.94 409.25,217.59 409.50,216.23 409.75,214.88 410.00,213.53 410.25,212.18 410.50,210.84 410.75,209.49 411.00,208.15 411.25,206.81 411.50,205.47 411.75,204.14 412.00,202.80 412.25,201.47 412.50,200.15 412.75,198.82 413.00,197.50 413.25,196.18 413.50,194.87 413.75,193.55 414.00,192.24 414.25,190.94 414.50,189.64 414.75,188.34 415.00,187.04 415.25,185.75 415.50,184.47 415.75,183.19 416.00,181.91 416.25,180.63 416.50,179.37 416.75,178.10 417.00,176.84 417.25,175.59 417.50,174.34 417.75,173.10 418.00,171.86 418.25,170.63 418.50,169.40 418.75,168.18 419.00,166.97 419.25,165.76 419.50,164.56 419.75,163.37 420.00,162.18 420.25,161.00 420.50,159.83 420.75,158.66 421.00,157.50 421.25,156.35 421.50,155.21 421.75,154.08 422.00,152.95 422.25,151.83 422.50,150.72 422.75,149.62 423.00,148.53 423.25,147.45 423.50,146.38 423.75,145.32 424.00,144.26 424.25,143.22 424.50,142.18 424.75,141.16 425.00,140.15 425.25,139.15 425.50,138.15 425.75,137.17 426.00,136.20 426.25,135.25 426.50,134.30 426.75,133.37 427.00,132.44 427.25,131.53 427.50,130.63 427.75,129.75 428.00,128.87 428.25,128.01 428.50,127.17 428.75,126.33 429.00,125.51 429.25,124.70 429.50,123.91 429.75,123.13 430.00,122.36 430.25,121.61 430.50,120.87 430.75,120.15 431.00,119.44 431.25,118.75 431.50,118.07 431.75,117.40 432.00,116.76 432.25,116.12 432.50,115.50 432.75,114.90 433.00,114.32 433.25,113.75 433.50,113.19 433.75,112.65 434.00,112.13 434.25,111.62 434.50,111.14 434.75,110.66 435.00,110.21 435.25,109.77 435.50,109.35 435.75,108.94 436.00,108.55 436.25,108.18 436.50,107.83 436.75,107.50 437.00,107.18 437.25,106.88 437.50,106.59 437.75,106.33 438.00,106.08 438.25,105.85 438.50,105.64 438.75,105.45 439.00,105.27 439.25,105.11 439.50,104.97 439.75,104.85 440.00,104.75 440.25,104.66 440.50,104.59 440.75,104.54 441.00,104.51 441.25,104.50 441.50,104.51 441.75,104.53 442.00,104.57 442.25,104.63 442.50,104.71 442.75,104.81 443.00,104.92 443.25,105.05 443.50,105.20 443.75,105.37 444.00,105.56 444.25,105.76 444.50,105.99 444.75,106.23 445.00,106.49 445.25,106.76 445.50,107.05 445.75,107.37 446.00,107.69 446.25,108.04 446.50,108.40 446.75,108.79 447.00,109.18 447.25,109.60 447.50,110.03 447.75,110.48 448.00,110.94 448.25,111.43 448.50,111.93 448.75,112.44 449.00,112.97 449.25,113.52 449.50,114.09 449.75,114.67 450.00,115.26 450.25,115.87 450.50,116.50 450.75,117.14 451.00,117.80 451.25,118.47 451.50,119.16 451.75,119.86 452.00,120.58 452.25,121.31 452.50,122.06 452.75,122.82 453.00,123.60 453.25,124.38 453.50,125.19 453.75,126.00 454.00,126.83 454.25,127.67 454.50,128.53 454.75,129.40 455.00,130.28 455.25,131.17 455.50,132.08 455.75,133.00 456.00,133.93 456.25,134.87 456.50,135.82 456.75,136.78 457.00,137.76 457.25,138.75 457.50,139.75 457.75,140.75 458.00,141.77 458.25,142.80 458.50,143.84 458.75,144.89 459.00,145.95 459.25,147.02 459.50,148.10 459.75,149.19 460.00,150.28 460.25,151.39 460.50,152.50 460.75,153.63 461.00,154.76 461.25,155.90 461.50,157.04 461.75,158.20 462.00,159.36 462.25,160.53 462.50,161.71 462.75,162.89 463.00,164.08 463.25,165.28 463.50,166.49 463.75,167.70 464.00,168.92 464.25,170.14 464.50,171.37 464.75,172.60 465.00,173.84 465.25,175.09 465.50,176.34 465.75,177.60 466.00,178.86 466.25,180.13 466.50,181.40 466.75,182.67 467.00,183.95 467.25,185.24 467.50,186.53 467.75,187.82 468.00,189.12 468.25,190.42 468.50,191.72 468.75,193.03 469.00,194.34 469.25,195.65 469.50,196.97 469.75,198.29 470.00,199.62 470.25,200.94 470.50,202.27 470.75,203.60 471.00,204.94 471.25,206.27 471.50,207.61 471.75,208.95 472.00,210.30 472.25,211.64 472.50,212.99 472.75,214.34 473.00,215.69 473.25,217.04 473.50,218.40 473.75,219.75 474.00,221.11 474.25,222.47 474.50,223.83 474.75,225.19 475.00,226.56 475.25,227.92 475.50,229.28 475.75,230.65 476.00,232.02 476.25,233.39 476.50,234.76 476.75,236.13 477.00,237.50 477.25,238.87 477.50,240.24 477.75,241.61 478.00,242.99 478.25,244.36 478.50,245.73 478.75,247.11 479.00,248.49 479.25,249.86 479.50,251.24 479.75,252.62 480.00,253.99 480.25,255.37 480.50,256.75 480.75,258.13 481.00,259.50 481.25,260.88 481.50,262.26 481.75,263.64 482.00,265.02 482.25,266.40 482.50,267.78 482.75,269.16 483.00,270.53 483.25,271.91 483.50,273.29 483.75,274.67 484.00,276.05 484.25,277.43 484.50,278.81 484.75,280.19 485.00,281.56 485.25,282.94 485.50,284.32 485.75,285.70 486.00,287.07 486.25,288.45 486.50,289.83 486.75,291.20 487.00,292.58 487.25,293.95 487.50,295.33 487.75,296.70 488.00,298.07 488.25,299.45 488.50,300.82 488.75,302.19 489.00,303.56 489.25,304.93 489.50,306.30 489.75,307.67 490.00,309.03 490.25,310.40 490.50,311.76 490.75,313.13 491.00,314.49 491.25,315.85 491.50,317.21 491.75,318.57 492.00,319.92 492.25,321.28 492.50,322.63 492.75,323.99 493.00,325.34 493.25,326.68 493.50,328.03 493.75,329.37 494.00,330.72 494.25,332.06 494.50,333.39 494.75,334.73 495.00,336.06 495.25,337.39 495.50,338.72 495.75,340.05 496.00,341.37 496.25,342.69 496.50,344.00 496.75,345.32 497.00,346.63 497.25,347.93 497.50,349.23 497.75,350.53 498.00,351.83 498.25,353.12 498.50,354.40 498.75,355.69 499.00,356.96 499.25,358.24 499.50,359.51 499.75,360.77 500.00,362.03 500.25,363.28 500.50,364.53 500.75,365.78 501.00,367.02 501.25,368.25 501.50,369.47 501.75,370.69 502.00,371.91 502.25,373.12 502.50,374.32 502.75,375.51 503.00,376.70 503.25,377.88 503.50,379.05 503.75,380.22 504.00,381.38 504.25,382.53 504.50,383.67 504.75,384.81 505.00,385.94 505.25,387.05 505.50,388.16 505.75,389.27 506.00,390.36 506.25,391.44 506.50,392.51 506.75,393.58 507.00,394.63 507.25,395.68 507.50,396.71 507.75,397.74 508.00,398.75 508.25,399.75 508.50,400.75 508.75,401.73 509.00,402.70 509.25,403.66 509.50,404.61 509.75,405.54 510.00,406.47 510.25,407.38 510.50,408.28 510.75,409.16 511.00,410.04 511.25,410.90 511.50,411.75 511.75,412.59 512.00,413.41 512.25,414.22 512.50,415.01 512.75,415.79 513.00,416.56 513.25,417.31 513.50,418.05 513.75,418.78 514.00,419.49 514.25,420.18 514.50,420.86 514.75,421.53 515.00,422.18 515.25,422.82 515.50,423.43 515.75,424.04 516.00,424.63 516.25,425.20 516.50,425.75 516.75,426.29 517.00,426.82 517.25,427.33 517.50,427.82 517.75,428.29 518.00,428.75 518.25,429.19 518.50,429.61 518.75,430.02 519.00,430.41 519.25,430.78 519.50,431.13 519.75,431.47 520.00,431.79 520.25,432.09 520.50,432.38 520.75,432.65 521.00,432.90 521.25,433.13 521.50,433.34 521.75,433.54 522.00,433.71 522.25,433.87 522.50,434.02 522.75,434.14 523.00,434.24 523.25,434.33 523.50,434.40 523.75,434.45 524.00,434.48 524.25,434.50 524.50,434.50 524.75,434.47 525.00,434.43 525.25,434.38 525.50,434.30 525.75,434.20 526.00,434.09 526.25,433.96 526.50,433.81 526.75,433.65 527.00,433.46 527.25,433.26 527.50,433.04 527.75,432.80 528.00,432.54 528.25,432.27 528.50,431.98 528.75,431.67 529.00,431.34 529.25,430.99 529.50,430.63 529.75,430.25 530.00,429.86 530.25,429.44 530.50,429.01 530.75,428.57 531.00,428.10 531.25,427.62 531.50,427.12 531.75,426.61 532.00,426.08 532.25,425.53 532.50,424.97 532.75,424.39 533.00,423.80 533.25,423.19 533.50,422.56 533.75,421.92 534.00,421.27 534.25,420.59 534.50,419.91 534.75,419.21 535.00,418.49 535.25,417.76 535.50,417.02 535.75,416.26 536.00,415.48 536.25,414.70 536.50,413.89 536.75,413.08 537.00,412.25 537.25,411.41 537.50,410.56 537.75,409.69 538.00,408.81 538.25,407.92 538.50,407.01 538.75,406.10 539.00,405.17 539.25,404.23 539.50,403.28 539.75,402.31 540.00,401.34 540.25,400.35 540.50,399.35 540.75,398.35 541.00,397.33 541.25,396.30 541.50,395.26 541.75,394.21 542.00,393.15 542.25,392.09 542.50,391.01 542.75,389.92 543.00,388.83 543.25,387.72 543.50,386.61 543.75,385.49 544.00,384.36 544.25,383.22 544.50,382.07 544.75,380.92 545.00,379.76 545.25,378.59 545.50,377.41 545.75,376.23 546.00,375.04 546.25,373.84 546.50,372.63 546.75,371.42 547.00,370.21 547.25,368.98 547.50,367.76 547.75,366.52 548.00,365.28 548.25,364.03 548.50,362.78 548.75,361.53 549.00,360.27 549.25,359.00 549.50,357.73 549.75,356.45 550.00,355.17 550.25,353.89 550.50,352.60 550.75,351.31 551.00,350.01 551.25,348.71 551.50,347.41 551.75,346.10 552.00,344.79 552.25,343.48 552.50,342.16 552.75,340.84 553.00,339.52 553.25,338.19 553.50,336.86 553.75,335.53 554.00,334.20 554.25,332.86 554.50,331.52 554.75,330.18 555.00,328.84 555.25,327.49 555.50,326.14 555.75,324.80 556.00,323.44 556.25,322.09 556.50,320.74 556.75,319.38 557.00,318.02 557.25,316.67 557.50,315.31 557.75,313.94 558.00,312.58 558.25,311.22 558.50,309.85 558.75,308.49 559.00,307.12 559.25,305.75 559.50,304.38 559.75,303.01 560.00,301.64 560.25,300.27 560.50,298.90 560.75,297.52 561.00,296.15 561.25,294.78 561.50,293.40 561.75,292.03 562.00,290.65 562.25,289.28 562.50,287.90 562.75,286.52 563.00,285.15 563.25,283.77 563.50,282.39 563.75,281.01 564.00,279.63 564.25,278.26 564.50,276.88 564.75,275.50 565.00,274.12 565.25,272.74 565.50,271.36 565.75,269.98 566.00,268.60 566.25,267.22 566.50,265.85 566.75,264.47 567.00,263.09 567.25,261.71 567.50,260.33 567.75,258.95 568.00,257.57 568.25,256.20 568.50,254.82 568.75,253.44 569.00,252.06 569.25,250.69 569.50,249.31 569.75,247.94 570.00,246.56 570.25,245.19 570.50,243.81 570.75,242.44 571.00,241.06 571.25,239.69 571.50,238.32 571.75,236.95 572.00,235.58 572.25,234.21 572.50,232.84 572.75,231.47 573.00,230.10 573.25,228.74 573.50,227.37 573.75,226.01 574.00,224.65 574.25,223.29 574.50,221.93 574.75,220.57 575.00,219.21 575.25,217.86 575.50,216.50 575.75,215.15 576.00,213.80 576.25,212.45 576.50,211.10 576.75,209.76 577.00,208.42 577.25,207.08 577.50,205.74 577.75,204.40 578.00,203.07 578.25,201.74 578.50,200.41 578.75,199.09 579.00,197.76 579.25,196.44 579.50,195.13 579.75,193.82 580.00,192.51 580.25,191.20 580.50,189.90 580.75,188.60 581.00,187.30 581.25,186.01 581.50,184.72 581.75,183.44 582.00,182.16 582.25,180.89 582.50,179.62 582.75,178.35 583.00,177.09 583.25,175.84 583.50,174.59 583.75,173.35 584.00,172.11 584.25,170.88 584.50,169.65 584.75,168.43 585.00,167.21 585.25,166.00 585.50,164.80 585.75,163.61 586.00,162.42 586.25,161.24 586.50,160.06 586.75,158.90 587.00,157.74 587.25,156.58 587.50,155.44 587.75,154.30 588.00,153.18 588.25,152.06 588.50,150.95 588.75,149.84 589.00,148.75 589.25,147.67 589.50,146.59 589.75,145.53 590.00,144.47 590.25,143.43 590.50,142.39 590.75,141.36 591.00,140.35 591.25,139.35 591.50,138.35 591.75,137.37 592.00,136.40 592.25,135.44 592.50,134.49 592.75,133.55 593.00,132.63 593.25,131.71 593.50,130.81 593.75,129.92 594.00,129.05 594.25,128.18 594.50,127.33 594.75,126.50 595.00,125.67 595.25,124.86 595.50,124.07 595.75,123.28 596.00,122.51 596.25,121.76 596.50,121.02 596.75,120.29 597.00,119.58 597.25,118.88 597.50,118.20 597.75,117.54 598.00,116.88 598.25,116.25 598.50,115.63 598.75,115.02 599.00,114.43 599.25,113.86 599.50,113.30 599.75,112.76 600.00,112.23 600.25,111.72 600.50,111.23 600.75,110.76 601.00,110.30 601.25,109.86 601.50,109.43 601.75,109.02 602.00,108.63 602.25,108.26 602.50,107.90 602.75,107.56 603.00,107.24 603.25,106.94 603.50,106.65 603.75,106.38 604.00,106.13 604.25,105.90 604.50,105.68 604.75,105.48 605.00,105.30 605.25,105.14 605.50,105.00 605.75,104.87 606.00,104.77 606.25,104.68 606.50,104.61 606.75,104.55 607.00,104.52 607.25,104.50 607.50,104.50 607.75,104.52 608.00,104.56 608.25,104.62 608.50,104.69 608.75,104.79 609.00,104.90 609.25,105.03 609.50,105.17 609.75,105.34 610.00,105.52 610.25,105.72 610.50,105.94 610.75,106.18 611.00,106.43 611.25,106.70 611.50,106.99 611.75,107.30 612.00,107.63 612.25,107.97 612.50,108.33 612.75,108.71 613.00,109.10 613.25,109.51 613.50,109.94 613.75,110.39 614.00,110.85 614.25,111.33 614.50,111.83 614.75,112.34 615.00,112.87 615.25,113.41 615.50,113.97 615.75,114.55 616.00,115.14 616.25,115.75 616.50,116.37 616.75,117.01 617.00,117.67 617.25,118.34 617.50,119.02 617.75,119.72 618.00,120.44 618.25,121.17 618.50,121.91 618.75,122.67 619.00,123.44 619.25,124.23 619.50,125.02 619.75,125.84 620.00,126.66 620.25,127.50 620.50,128.36 620.75,129.22 621.00,130.10 621.25,130.99 621.50,131.90 621.75,132.81 622.00,133.74 622.25,134.68 622.50,135.63 622.75,136.59 623.00,137.56 623.25,138.55 623.50,139.55 623.75,140.55 624.00,141.57 624.25,142.60 624.50,143.63 624.75,144.68 625.00,145.74 625.25,146.81 625.50,147.88 625.75,148.97 626.00,150.06 626.25,151.17 626.50,152.28 626.75,153.40 627.00,154.53 627.25,155.67 627.50,156.81 627.75,157.97 628.00,159.13 628.25,160.30 628.50,161.47 628.75,162.66 629.00,163.85 629.25,165.04 629.50,166.25 629.75,167.46 630.00,168.67 630.25,169.89 630.50,171.12 630.75,172.36 631.00,173.60 631.25,174.84 631.50,176.09 631.75,177.35 632.00,178.61 632.25,179.87 632.50,181.14 632.75,182.42 633.00,183.70 633.25,184.98 633.50,186.27 633.75,187.56 634.00,188.86 634.25,190.16 634.50,191.46 634.75,192.77 635.00,194.08 635.25,195.39 635.50,196.71 635.75,198.03 636.00,199.35 636.25,200.68 636.50,202.01 636.75,203.34 637.00,204.67 637.25,206.01 637.50,207.34 637.75,208.69 638.00,210.03 638.25,211.37 638.50,212.72 638.75,214.07 639.00,215.42 639.25,216.77 639.50,218.13 639.75,219.48 640.00,220.84 640.25,222.20 640.50,223.56 640.75,224.92 641.00,226.28 641.25,227.65 641.50,229.01 641.75,230.38 642.00,231.74 642.25,233.11 642.50,234.48 642.75,235.85 643.00,237.22 643.25,238.59 643.50,239.97 643.75,241.34 644.00,242.71 644.25,244.09 644.50,245.46 644.75,246.84 645.00,248.21 645.25,249.59 645.50,250.96 645.75,252.34 646.00,253.72 646.25,255.09 646.50,256.47 646.75,257.85 647.00,259.23 647.25,260.61 647.50,261.99 647.75,263.36 648.00,264.74 648.25,266.12 648.50,267.50 648.75,268.88 649.00,270.26 649.25,271.64 649.50,273.02 649.75,274.40 650.00,275.77 650.25,277.15 650.50,278.53 650.75,279.91 651.00,281.29 651.25,282.67 651.50,284.04 651.75,285.42 652.00,286.80 652.25,288.17 652.50,289.55 652.75,290.93 653.00,292.30 653.25,293.68 653.50,295.05 653.75,296.43 654.00,297.80 654.25,299.17 654.50,300.54 654.75,301.92 655.00,303.29 655.25,304.66 655.50,306.02 655.75,307.39 656.00,308.76 656.25,310.13 656.50,311.49 656.75,312.85 657.00,314.22 657.25,315.58 657.50,316.94 657.75,318.30 658.00,319.65 658.25,321.01 658.50,322.36 658.75,323.71 659.00,325.07 659.25,326.41 659.50,327.76 659.75,329.11 660.00,330.45 660.25,331.79 660.50,333.13 660.75,334.46 661.00,335.80 661.25,337.13 661.50,338.46 661.75,339.78 662.00,341.10 662.25,342.42 662.50,343.74 662.75,345.05 663.00,346.36 663.25,347.67 663.50,348.97 663.75,350.27 664.00,351.57 664.25,352.86 664.50,354.15 664.75,355.43 665.00,356.71 665.25,357.98 665.50,359.25 665.75,360.52 666.00,361.78 666.25,363.03 666.50,364.28 666.75,365.53 667.00,366.77 667.25,368.00 667.50,369.23 667.75,370.45 668.00,371.67 668.25,372.88 668.50,374.08 668.75,375.27 669.00,376.46 669.25,377.65 669.50,378.82 669.75,379.99 670.00,381.15 670.25,382.30 670.50,383.45 670.75,384.58 671.00,385.71 671.25,386.83 671.50,387.94 671.75,389.05 672.00,390.14 672.25,391.23 672.50,392.30 672.75,393.37 673.00,394.42 673.25,395.47 673.50,396.51 673.75,397.53 674.00,398.55 674.25,399.55 674.50,400.55 674.75,401.53 675.00,402.51 675.25,403.47 675.50,404.42 675.75,405.36 676.00,406.28 676.25,407.20 676.50,408.10 676.75,408.99 677.00,409.86 677.25,410.73 677.50,411.58 677.75,412.42 678.00,413.24 678.25,414.06 678.50,414.85 678.75,415.64 679.00,416.41 679.25,417.17 679.50,417.91 679.75,418.63 680.00,419.35 680.25,420.05 680.50,420.73 680.75,421.40 681.00,422.05 681.25,422.69 681.50,423.31 681.75,423.92 682.00,424.51 682.25,425.09 682.50,425.64 682.75,426.19 683.00,426.71 683.25,427.23 683.50,427.72 683.75,428.20 684.00,428.66 684.25,429.10 684.50,429.53 684.75,429.94 685.00,430.33 685.25,430.71 685.50,431.06 685.75,431.41 686.00,431.73 686.25,432.04 686.50,432.32 686.75,432.59 687.00,432.85 687.25,433.08 687.50,433.30 687.75,433.50 688.00,433.68 688.25,433.84 688.50,433.99 688.75,434.12 689.00,434.22 689.25,434.32 689.50,434.39 689.75,434.44 690.00,434.48 690.25,434.50 690.50,434.50 690.75,434.48 691.00,434.44 691.25,434.39 691.50,434.32 691.75,434.22 692.00,434.12 692.25,433.99 692.50,433.84 692.75,433.68 693.00,433.50 693.25,433.30 693.50,433.08 693.75,432.85 694.00,432.59 694.25,432.32 694.50,432.04 694.75,431.73 695.00,431.41 695.25,431.06 695.50,430.71 695.75,430.33 696.00,429.94 696.25,429.53 696.50,429.10 696.75,428.66 697.00,428.20 697.25,427.72 697.50,427.23 697.75,426.71 698.00,426.19 698.25,425.64 698.50,425.09 698.75,424.51 699.00,423.92 699.25,423.31 699.50,422.69 699.75,422.05 700.00,421.40 700.25,420.73 700.50,420.05 700.75,419.35 701.00,418.63 701.25,417.91 701.50,417.17 701.75,416.41 702.00,415.64 702.25,414.85 702.50,414.06 702.75,413.24 703.00,412.42 703.25,411.58 703.50,410.73 703.75,409.86 704.00,408.99 704.25,408.10 704.50,407.20 704.75,406.28 705.00,405.36 705.25,404.42 705.50,403.47 705.75,402.51 706.00,401.53 706.25,400.55 706.50,399.55 706.75,398.55 707.00,397.53 707.25,396.51 707.50,395.47 707.75,394.42 708.00,393.37 708.25,392.30 708.50,391.23 708.75,390.14 709.00,389.05 709.25,387.94 709.50,386.83 709.75,385.71 710.00,384.58 710.25,383.45 710.50,382.30 710.75,381.15 711.00,379.99 711.25,378.82 711.50,377.65 711.75,376.46 712.00,375.27 712.25,374.08 712.50,372.88 712.75,371.67 713.00,370.45 713.25,369.23 713.50,368.00 713.75,366.77 714.00,365.53 714.25,364.28 714.50,363.03 714.75,361.78 715.00,360.52 715.25,359.25 715.50,357.98 715.75,356.71 716.00,355.43 716.25,354.15 716.50,352.86 716.75,351.57 717.00,350.27 717.25,348.97 717.50,347.67 717.75,346.36 718.00,345.05 718.25,343.74 718.50,342.42 718.75,341.10 719.00,339.78 719.25,338.46 719.50,337.13 719.75,335.80 720.00,334.46 720.25,333.13 720.50,331.79 720.75,330.45 721.00,329.11 721.25,327.76 721.50,326.41 721.75,325.07 722.00,323.71 722.25,322.36 722.50,321.01 722.75,319.65 723.00,318.30 723.25,316.94 723.50,315.58 723.75,314.22 724.00,312.85 724.25,311.49 724.50,310.13 724.75,308.76 725.00,307.39 725.25,306.02 725.50,304.66 725.75,303.29 726.00,301.92 726.25,300.54 726.50,299.17 726.75,297.80 727.00,296.43 727.25,295.05 727.50,293.68 727.75,292.30 728.00,290.93 728.25,289.55 728.50,288.17 728.75,286.80 729.00,285.42 729.25,284.04 729.50,282.67 729.75,281.29 730.00,279.91 730.25,278.53 730.50,277.15 730.75,275.77 731.00,274.40 731.25,273.02 731.50,271.64 731.75,270.26 732.00,268.88 732.25,267.50 732.50,266.12 732.75,264.74 733.00,263.36 733.25,261.99 733.50,260.61 733.75,259.23 734.00,257.85 734.25,256.47 734.50,255.09 734.75,253.72 735.00,252.34 735.25,250.96 735.50,249.59 735.75,248.21 736.00,246.84 736.25,245.46 736.50,244.09 736.75,242.71 737.00,241.34 737.25,239.97 737.50,238.59 737.75,237.22 738.00,235.85 738.25,234.48 738.50,233.11 738.75,231.74 739.00,230.38 739.25,229.01 739.50,227.65 739.75,226.28 740.00,224.92 740.25,223.56 740.50,222.20 740.75,220.84 741.00,219.48 741.25,218.13 741.50,216.77 741.75,215.42 742.00,214.07 742.25,212.72 742.50,211.37 742.75,210.03 743.00,208.69 743.25,207.34 743.50,206.01 743.75,204.67 744.00,203.34 744.25,202.01 744.50,200.68 744.75,199.35 745.00,198.03 745.25,196.71 745.50,195.39 745.75,194.08 746.00,192.77 746.25,191.46 746.50,190.16 746.75,188.86 747.00,187.56 747.25,186.27 747.50,184.98 747.75,183.70 748.00,182.42 748.25,181.14 748.50,179.87 748.75,178.61 749.00,177.35 749.25,176.09 749.50,174.84 749.75,173.60 750.00,172.36 750.25,171.12 750.50,169.89 750.75,168.67 751.00,167.46 751.25,166.25 751.50,165.04 751.75,163.85 752.00,162.66 752.25,161.47 752.50,160.30 752.75,159.13 753.00,157.97 753.25,156.81 753.50,155.67 753.75,154.53 754.00,153.40 754.25,152.28 754.50,151.17 754.75,150.06 755.00,148.97 755.25,147.88 755.50,146.81 755.75,145.74 756.00,144.68 756.25,143.63 756.50,142.60 756.75,141.57 757.00,140.55 757.25,139.55 757.50,138.55 757.75,137.56 758.00,136.59 758.25,135.63 758.50,134.68 758.75,133.74 759.00,132.81 759.25,131.90 759.50,130.99 759.75,130.10 760.00,129.22 760.25,128.36 760.50,127.50 760.75,126.66 761.00,125.84 761.25,125.02 761.50,124.23 761.75,123.44 762.00,122.67 762.25,121.91 762.50,121.17 762.75,120.44 763.00,119.72 763.25,119.02 763.50,118.34 763.75,117.67 764.00,117.01 764.25,116.37 764.50,115.75 764.75,115.14 765.00,114.55 765.25,113.97 765.50,113.41 765.75,112.87 766.00,112.34 766.25,111.83 766.50,111.33 766.75,110.85 767.00,110.39 767.25,109.94 767.50,109.51 767.75,109.10 768.00,108.71 768.25,108.33 768.50,107.97 768.75,107.63 769.00,107.30 769.25,106.99 769.50,106.70 769.75,106.43 770.00,106.18 770.25,105.94 770.50,105.72 770.75,105.52 771.00,105.34 771.25,105.17 771.50,105.03 771.75,104.90 772.00,104.79 772.25,104.69 772.50,104.62 772.75,104.56 773.00,104.52 773.25,104.50 773.50,104.50 773.75,104.52 774.00,104.55 774.25,104.61 774.50,104.68 774.75,104.77 775.00,104.87 775.25,105.00 775.50,105.14 775.75,105.30 776.00,105.48 776.25,105.68 776.50,105.90 776.75,106.13 777.00,106.38 777.25,106.65 777.50,106.94 777.75,107.24 778.00,107.56 778.25,107.90 778.50,108.26 778.75,108.63 779.00,109.02 779.25,109.43 779.50,109.86 779.75,110.30 780.00,110.76" fill="none" stroke="#400808" stroke-width="2.8"/><polyline points="20.00,429.01 20.25,429.44 20.50,429.86 20.75,430.25 21.00,430.63 21.25,430.99 21.50,431.34 21.75,431.67 22.00,431.98 22.25,432.27 22.50,432.54 22.75,432.80 23.00,433.04 23.25,433.26 23.50,433.46 23.75,433.65 24.00,433.81 24.25,433.96 24.50,434.09 24.75,434.20 25.00,434.30 25.25,434.38 25.50,434.43 25.75,434.47 26.00,434.50 26.25,434.50 26.50,434.48 26.75,434.45 27.00,434.40 27.25,434.33 27.50,434.24 27.75,434.14 28.00,434.02 28.25,433.87 28.50,433.71 28.75,433.54 29.00,433.34 29.25,433.13 29.50,432.90 29.75,432.65 30.00,432.38 30.25,432.09 30.50,431.79 30.75,431.47 31.00,431.13 31.25,430.78 31.50,430.41 31.75,430.02 32.00,429.61 32.25,429.19 32.50,428.75 32.75,428.29 33.00,427.82 33.25,427.33 33.50,426.82 33.75,426.29 34.00,425.75 34.25,425.20 34.50,424.63 34.75,424.04 35.00,423.43 35.25,422.82 35.50,422.18 35.75,421.53 36.00,420.86 36.25,420.18 36.50,419.49 36.75,418.78 37.00,418.05 37.25,417.31 37.50,416.56 37.75,415.79 38.00,415.01 38.25,414.22 38.50,413.41 38.75,412.59 39.00,411.75 39.25,410.90 39.50,410.04 39.75,409.16 40.00,408.28 40.25,407.38 40.50,406.47 40.75,405.54 41.00,404.61 41.25,403.66 41.50,402.70 41.75,401.73 42.00,400.75 42.25,399.75 42.50,398.75 42.75,397.74 43.00,396.71 43.25,395.68 43.50,394.63 43.75,393.58 44.00,392.51 44.25,391.44 44.50,390.36 44.75,389.27 45.00,388.16 45.25,387.05 45.50,385.94 45.75,384.81 46.00,383.67 46.25,382.53 46.50,381.38 46.75,380.22 47.00,379.05 47.25,377.88 47.50,376.70 47.75,375.51 48.00,374.32 48.25,373.12 48.50,371.91 48.75,370.69 49.00,369.47 49.25,368.25 49.50,367.02 49.75,365.78 50.00,364.53 50.25,363.28 50.50,362.03 50.75,360.77 51.00,359.51 51.25,358.24 51.50,356.96 51.75,355.69 52.00,354.40 52.25,353.12 52.50,351.83 52.75,350.53 53.00,349.23 53.25,347.93 53.50,346.63 53.75,345.32 54.00,344.00 54.25,342.69 54.50,341.37 54.75,340.05 55.00,338.72 55.25,337.39 55.50,336.06 55.75,334.73 56.00,333.39 56.25,332.06 56.50,330.72 56.75,329.37 57.00,328.03 57.25,326.68 57.50,325.34 57.75,323.99 58.00,322.63 58.25,321.28 58.50,319.92 58.75,318.57 59.00,317.21 59.25,315.85 59.50,314.49 59.75,313.13 60.00,311.76 60.25,310.40 60.50,309.03 60.75,307.67 61.00,306.30 61.25,304.93 61.50,303.56 61.75,302.19 62.00,300.82 62.25,299.45 62.50,298.07 62.75,296.70 63.00,295.33 63.25,293.95 63.50,292.58 63.75,291.20 64.00,289.83 64.25,288.45 64.50,287.07 64.75,285.70 65.00,284.32 65.25,282.94 65.50,281.56 65.75,280.19 66.00,278.81 66.25,277.43 66.50,276.05 66.75,274.67 67.00,273.29 67.25,271.91 67.50,270.53 67.75,269.16 68.00,267.78 68.25,266.40 68.50,265.02 68.75,263.64 69.00,262.26 69.25,260.88 69.50,259.50 69.75,258.13 70.00,256.75 70.25,255.37 70.50,253.99 70.75,252.62 71.00,251.24 71.25,249.86 71.50,248.49 71.75,247.11 72.00,245.73 72.25,244.36 72.50,242.99 72.75,241.61 73.00,240.24 73.25,238.87 73.50,237.50 73.75,236.13 74.00,234.76 74.25,233.39 74.50,232.02 74.75,230.65 75.00,229.28 75.25,227.92 75.50,226.56 75.75,225.19 76.00,223.83 76.25,222.47 76.50,221.11 76.75,219.75 77.00,218.40 77.25,217.04 77.50,215.69 77.75,214.34 78.00,212.99 78.25,211.64 78.50,210.30 78.75,208.95 79.00,207.61 79.25,206.27 79.50,204.94 79.75,203.60 80.00,202.27 80.25,200.94 80.50,199.62 80.75,198.29 81.00,196.97 81.25,195.65 81.50,194.34 81.75,193.03 82.00,191.72 82.25,190.42 82.50,189.12 82.75,187.82 83.00,186.53 83.25,185.24 83.50,183.95 83.75,182.67 84.00,181.40 84.25,180.13 84.50,178.86 84.75,177.60 85.00,176.34 85.25,175.09 85.50,173.84 85.75,172.60 86.00,171.37 86.25,170.14 86.50,168.92 86.75,167.70 87.00,166.49 87.25,165.28 87.50,164.08 87.75,162.89 88.00,161.71 88.25,160.53 88.50,159.36 88.75,158.20 89.00,157.04 89.25,155.90 89.50,154.76 89.75,153.63 90.00,152.50 90.25,151.39 90.50,150.28 90.75,149.19 91.00,148.10 91.25,147.02 91.50,145.95 91.75,144.89 92.00,143.84 92.25,142.80 92.50,141.77 92.75,140.75 93.00,139.75 93.25,138.75 93.50,137.76 93.75,136.78 94.00,135.82 94.25,134.87 94.50,133.93 94.75,133.00 95.00,132.08 95.25,131.17 95.50,130.28 95.75,129.40 96.00,128.53 96.25,127.67 96.50,126.83 96.75,126.00 97.00,125.19 97.25,124.38 97.50,123.60 97.75,122.82 98.00,122.06 98.25,121.31 98.50,120.58 98.75,119.86 99.00,119.16 99.25,118.47 99.50,117.80 99.75,117.14 100.00,116.50 100.25,115.87 100.50,115.26 100.75,114.67 101.00,114.09 101.25,113.52 101.50,112.97 101.75,112.44 102.00,111.93 102.25,111.43 102.50,110.94 102.75,110.48 103.00,110.03 103.25,109.60 103.50,109.18 103.75,108.79 104.00,108.40 104.25,108.04 104.50,107.69 104.75,107.37 105.00,107.05 105.25,106.76 105.50,106.49 105.75,106.23 106.00,105.99 106.25,105.76 106.50,105.56 106.75,105.37 107.00,105.20 107.25,105.05 107.50,104.92 107.75,104.81 108.00,104.71 108.25,104.63 108.50,104.57 108.75,104.53 109.00,104.51 109.25,104.50 109.50,104.51 109.75,104.54 110.00,104.59 110.25,104.66 110.50,104.75 110.75,104.85 111.00,104.97 111.25,105.11 111.50,105.27 111.75,105.45 112.00,105.64 112.25,105.85 112.50,106.08 112.75,106.33 113.00,106.59 113.25,106.88 113.50,107.18 113.75,107.50 114.00,107.83 114.25,108.18 114.50,108.55 114.75,108.94 115.00,109.35 115.25,109.77 115.50,110.21 115.75,110.66 116.00,111.14 116.25,111.62 116.50,112.13 116.75,112.65 117.00,113.19 117.25,113.75 117.50,114.32 117.75,114.90 118.00,115.50 118.25,116.12 118.50,116.76 118.75,117.40 119.00,118.07 119.25,118.75 119.50,119.44 119.75,120.15 120.00,120.87 120.25,121.61 120.50,122.36 120.75,123.13 121.00,123.91 121.25,124.70 121.50,125.51 121.75,126.33 122.00,127.17 122.25,128.01 122.50,128.87 122.75,129.75 123.00,130.63 123.25,131.53 123.50,132.44 123.75,133.37 124.00,134.30 124.25,135.25 124.50,136.20 124.75,137.17 125.00,138.15 125.25,139.15 125.50,140.15 125.75,141.16 126.00,142.18 126.25,143.22 126.50,144.26 126.75,145.32 127.00,146.38 127.25,147.45 127.50,148.53 127.75,149.62 128.00,150.72 128.25,151.83 128.50,152.95 128.75,154.08 129.00,155.21 129.25,156.35 129.50,157.50 129.75,158.66 130.00,159.83 130.25,161.00 130.50,162.18 130.75,163.37 131.00,164.56 131.25,165.76 131.50,166.97 131.75,168.18 132.00,169.40 132.25,170.63 132.50,171.86 132.75,173.10 133.00,174.34 133.25,175.59 133.50,176.84 133.75,178.10 134.00,179.37 134.25,180.63 134.50,181.91 134.75,183.19 135.00,184.47 135.25,185.75 135.50,187.04 135.75,188.34 136.00,189.64 136.25,190.94 136.50,192.24 136.75,193.55 137.00,194.87 137.25,196.18 137.50,197.50 137.75,198.82 138.00,200.15 138.25,201.47 138.50,202.80 138.75,204.14 139.00,205.47 139.25,206.81 139.50,208.15 139.75,209.49 140.00,210.84 140.25,212.18 140.50,213.53 140.75,214.88 141.00,216.23 141.25,217.59 141.50,218.94 141.75,220.30 142.00,221.65 142.25,223.01 142.50,224.38 142.75,225.74 143.00,227.10 143.25,228.47 143.50,229.83 143.75,231.20 144.00,232.57 144.25,233.93 144.50,235.30 144.75,236.67 145.00,238.04 145.25,239.42 145.50,240.79 145.75,242.16 146.00,243.54 146.25,244.91 146.50,246.28 146.75,247.66 147.00,249.04 147.25,250.41 147.50,251.79 147.75,253.17 148.00,254.54 148.25,255.92 148.50,257.30 148.75,258.68 149.00,260.06 149.25,261.43 149.50,262.81 149.75,264.19 150.00,265.57 150.25,266.95 150.50,268.33 150.75,269.71 151.00,271.09 151.25,272.46 151.50,273.84 151.75,275.22 152.00,276.60 152.25,277.98 152.50,279.36 152.75,280.74 153.00,282.11 153.25,283.49 153.50,284.87 153.75,286.25 154.00,287.62 154.25,289.00 154.50,290.38 154.75,291.75 155.00,293.13 155.25,294.50 155.50,295.88 155.75,297.25 156.00,298.62 156.25,300.00 156.50,301.37 156.75,302.74 157.00,304.11 157.25,305.48 157.50,306.85 157.75,308.21 158.00,309.58 158.25,310.94 158.50,312.31 158.75,313.67 159.00,315.03 159.25,316.39 159.50,317.75 159.75,319.11 160.00,320.47 160.25,321.82 160.50,323.17 160.75,324.53 161.00,325.87 161.25,327.22 161.50,328.57 161.75,329.91 162.00,331.25 162.25,332.59 162.50,333.93 162.75,335.26 163.00,336.60 163.25,337.93 163.50,339.25 163.75,340.58 164.00,341.90 164.25,343.21 164.50,344.53 164.75,345.84 165.00,347.15 165.25,348.45 165.50,349.75 165.75,351.05 166.00,352.34 166.25,353.63 166.50,354.92 166.75,356.20 167.00,357.47 167.25,358.75 167.50,360.01 167.75,361.28 168.00,362.53 168.25,363.79 168.50,365.03 168.75,366.27 169.00,367.51 169.25,368.74 169.50,369.96 169.75,371.18 170.00,372.39 170.25,373.60 170.50,374.80 170.75,375.99 171.00,377.17 171.25,378.35 171.50,379.52 171.75,380.69 172.00,381.84 172.25,382.99 172.50,384.13 172.75,385.26 173.00,386.38 173.25,387.50 173.50,388.61 173.75,389.70 174.00,390.79 174.25,391.87 174.50,392.94 174.75,394.00 175.00,395.05 175.25,396.09 175.50,397.12 175.75,398.14 176.00,399.15 176.25,400.15 176.50,401.14 176.75,402.12 177.00,403.08 177.25,404.04 177.50,404.98 177.75,405.91 178.00,406.83 178.25,407.74 178.50,408.63 178.75,409.52 179.00,410.39 179.25,411.24 179.50,412.09 179.75,412.92 180.00,413.73 180.25,414.54 180.50,415.33 180.75,416.10 181.00,416.86 181.25,417.61 181.50,418.35 181.75,419.06 182.00,419.77 182.25,420.46 182.50,421.13 182.75,421.79 183.00,422.44 183.25,423.06 183.50,423.68 183.75,424.28 184.00,424.86 184.25,425.42 184.50,425.97 184.75,426.51 185.00,427.02 185.25,427.52 185.50,428.01 185.75,428.48 186.00,428.93 186.25,429.36 186.50,429.78 186.75,430.18 187.00,430.56 187.25,430.92 187.50,431.27 187.75,431.60 188.00,431.91 188.25,432.21 188.50,432.49 188.75,432.75 189.00,432.99 189.25,433.21 189.50,433.42 189.75,433.61 190.00,433.78 190.25,433.93 190.50,434.07 190.75,434.18 191.00,434.28 191.25,434.36 191.50,434.42 191.75,434.47 192.00,434.49 192.25,434.50 192.50,434.49 192.75,434.46 193.00,434.41 193.25,434.35 193.50,434.26 193.75,434.16 194.00,434.04 194.25,433.90 194.50,433.75 194.75,433.57 195.00,433.38 195.25,433.17 195.50,432.94 195.75,432.70 196.00,432.43 196.25,432.15 196.50,431.85 196.75,431.54 197.00,431.20 197.25,430.85 197.50,430.48 197.75,430.10 198.00,429.69 198.25,429.27 198.50,428.84 198.75,428.38 199.00,427.91 199.25,427.42 199.50,426.92 199.75,426.40 200.00,425.86 200.25,425.31 200.50,424.74 200.75,424.16 201.00,423.56 201.25,422.94 201.50,422.31 201.75,421.66 202.00,421.00 202.25,420.32 202.50,419.63 202.75,418.92 203.00,418.20 203.25,417.46 203.50,416.71 203.75,415.95 204.00,415.17 204.25,414.38 204.50,413.57 204.75,412.75 205.00,411.92 205.25,411.07 205.50,410.21 205.75,409.34 206.00,408.46 206.25,407.56 206.50,406.65 206.75,405.73 207.00,404.79 207.25,403.85 207.50,402.89 207.75,401.92 208.00,400.94 208.25,399.95 208.50,398.95 208.75,397.94 209.00,396.92 209.25,395.89 209.50,394.84 209.75,393.79 210.00,392.73 210.25,391.66 210.50,390.58 210.75,389.48 211.00,388.39 211.25,387.28 211.50,386.16 211.75,385.04 212.00,383.90 212.25,382.76 212.50,381.61 212.75,380.45 213.00,379.29 213.25,378.12 213.50,376.94 213.75,375.75 214.00,374.56 214.25,373.36 214.50,372.15 214.75,370.94 215.00,369.72 215.25,368.49 215.50,367.26 215.75,366.03 216.00,364.78 216.25,363.54 216.50,362.28 216.75,361.02 217.00,359.76 217.25,358.49 217.50,357.22 217.75,355.94 218.00,354.66 218.25,353.38 218.50,352.09 218.75,350.79 219.00,349.49 219.25,348.19 219.50,346.89 219.75,345.58 220.00,344.27 220.25,342.95 220.50,341.63 220.75,340.31 221.00,338.99 221.25,337.66 221.50,336.33 221.75,335.00 222.00,333.66 222.25,332.32 222.50,330.99 222.75,329.64 223.00,328.30 223.25,326.95 223.50,325.61 223.75,324.26 224.00,322.90 224.25,321.55 224.50,320.20 224.75,318.84 225.00,317.48 225.25,316.12 225.50,314.76 225.75,313.40 226.00,312.04 226.25,310.67 226.50,309.31 226.75,307.94 227.00,306.57 227.25,305.20 227.50,303.83 227.75,302.46 228.00,301.09 228.25,299.72 228.50,298.35 228.75,296.98 229.00,295.60 229.25,294.23 229.50,292.85 229.75,291.48 230.00,290.10 230.25,288.73 230.50,287.35 230.75,285.97 231.00,284.59 231.25,283.22 231.50,281.84 231.75,280.46 232.00,279.08 232.25,277.70 232.50,276.33 232.75,274.95 233.00,273.57 233.25,272.19 233.50,270.81 233.75,269.43 234.00,268.05 234.25,266.67 234.50,265.29 234.75,263.92 235.00,262.54 235.25,261.16 235.50,259.78 235.75,258.40 236.00,257.02 236.25,255.65 236.50,254.27 236.75,252.89 237.00,251.51 237.25,250.14 237.50,248.76 237.75,247.39 238.00,246.01 238.25,244.64 238.50,243.26 238.75,241.89 239.00,240.51 239.25,239.14 239.50,237.77 239.75,236.40 240.00,235.03 240.25,233.66 240.50,232.29 240.75,230.92 241.00,229.56 241.25,228.19 241.50,226.83 241.75,225.46 242.00,224.10 242.25,222.74 242.50,221.38 242.75,220.03 243.00,218.67 243.25,217.31 243.50,215.96 243.75,214.61 244.00,213.26 244.25,211.91 244.50,210.57 244.75,209.22 245.00,207.88 245.25,206.54 245.50,205.20 245.75,203.87 246.00,202.54 246.25,201.21 246.50,199.88 246.75,198.56 247.00,197.24 247.25,195.92 247.50,194.60 247.75,193.29 248.00,191.98 248.25,190.68 248.50,189.38 248.75,188.08 249.00,186.79 249.25,185.50 249.50,184.21 249.75,182.93 250.00,181.65 250.25,180.38 250.50,179.11 250.75,177.85 251.00,176.59 251.25,175.34 251.50,174.09 251.75,172.85 252.00,171.61 252.25,170.38 252.50,169.16 252.75,167.94 253.00,166.73 253.25,165.52 253.50,164.32 253.75,163.13 254.00,161.94 254.25,160.77 254.50,159.59 254.75,158.43 255.00,157.27 255.25,156.13 255.50,154.98 255.75,153.85 256.00,152.73 256.25,151.61 256.50,150.50 256.75,149.41 257.00,148.32 257.25,147.24 257.50,146.17 257.75,145.10 258.00,144.05 258.25,143.01 258.50,141.98 258.75,140.96 259.00,139.95 259.25,138.95 259.50,137.96 259.75,136.98 260.00,136.01 260.25,135.06 260.50,134.11 260.75,133.18 261.00,132.26 261.25,131.35 261.50,130.46 261.75,129.57 262.00,128.70 262.25,127.84 262.50,127.00 262.75,126.17 263.00,125.35 263.25,124.54 263.50,123.75 263.75,122.97 264.00,122.21 264.25,121.46 264.50,120.73 264.75,120.01 265.00,119.30 265.25,118.61 265.50,117.93 265.75,117.27 266.00,116.63 266.25,116.00 266.50,115.38 266.75,114.78 267.00,114.20 267.25,113.63 267.50,113.08 267.75,112.55 268.00,112.03 268.25,111.53 268.50,111.04 268.75,110.57 269.00,110.12 269.25,109.68 269.50,109.26 269.75,108.86 270.00,108.48 270.25,108.11 270.50,107.76 270.75,107.43 271.00,107.12 271.25,106.82 271.50,106.54 271.75,106.28 272.00,106.03 272.25,105.81 272.50,105.60 272.75,105.41 273.00,105.24 273.25,105.08 273.50,104.95 273.75,104.83 274.00,104.73 274.25,104.65 274.50,104.58 274.75,104.54 275.00,104.51 275.25,104.50 275.50,104.51 275.75,104.54 276.00,104.58 276.25,104.65 276.50,104.73 276.75,104.83 277.00,104.95 277.25,105.08 277.50,105.24 277.75,105.41 278.00,105.60 278.25,105.81 278.50,106.03 278.75,106.28 279.00,106.54 279.25,106.82 279.50,107.12 279.75,107.43 280.00,107.76 280.25,108.11 280.50,108.48 280.75,108.86 281.00,109.26 281.25,109.68 281.50,110.12 281.75,110.57 282.00,111.04 282.25,111.53 282.50,112.03 282.75,112.55 283.00,113.08 283.25,113.63 283.50,114.20 283.75,114.78 284.00,115.38 284.25,116.00 284.50,116.63 284.75,117.27 285.00,117.93 285.25,118.61 285.50,119.30 285.75,120.01 286.00,120.73 286.25,121.46 286.50,122.21 286.75,122.97 287.00,123.75 287.25,124.54 287.50,125.35 287.75,126.17 288.00,127.00 288.25,127.84 288.50,128.70 288.75,129.57 289.00,130.46 289.25,131.35 289.50,132.26 289.75,133.18 290.00,134.11 290.25,135.06 290.50,136.01 290.75,136.98 291.00,137.96 291.25,138.95 291.50,139.95 291.75,140.96 292.00,141.98 292.25,143.01 292.50,144.05 292.75,145.10 293.00,146.17 293.25,147.24 293.50,148.32 293.75,149.41 294.00,150.50 294.25,151.61 294.50,152.73 294.75,153.85 295.00,154.98 295.25,156.13 295.50,157.27 295.75,158.43 296.00,159.59 296.25,160.77 296.50,161.94 296.75,163.13 297.00,164.32 297.25,165.52 297.50,166.73 297.75,167.94 298.00,169.16 298.25,170.38 298.50,171.61 298.75,172.85 299.00,174.09 299.25,175.34 299.50,176.59 299.75,177.85 300.00,179.11 300.25,180.38 300.50,181.65 300.75,182.93 301.00,184.21 301.25,185.50 301.50,186.79 301.75,188.08 302.00,189.38 302.25,190.68 302.50,191.98 302.75,193.29 303.00,194.60 303.25,195.92 303.50,197.24 303.75,198.56 304.00,199.88 304.25,201.21 304.50,202.54 304.75,203.87 305.00,205.20 305.25,206.54 305.50,207.88 305.75,209.22 306.00,210.57 306.25,211.91 306.50,213.26 306.75,214.61 307.00,215.96 307.25,217.31 307.50,218.67 307.75,220.03 308.00,221.38 308.25,222.74 308.50,224.10 308.75,225.46 309.00,226.83 309.25,228.19 309.50,229.56 309.75,230.92 310.00,232.29 310.25,233.66 310.50,235.03 310.75,236.40 311.00,237.77 311.25,239.14 311.50,240.51 311.75,241.89 312.00,243.26 312.25,244.64 312.50,246.01 312.75,247.39 313.00,248.76 313.25,250.14 313.50,251.51 313.75,252.89 314.00,254.27 314.25,255.65 314.50,257.02 314.75,258.40 315.00,259.78 315.25,261.16 315.50,262.54 315.75,263.92 316.00,265.29 316.25,266.67 316.50,268.05 316.75,269.43 317.00,270.81 317.25,272.19 317.50,273.57 317.75,274.95 318.00,276.33 318.25,277.70 318.50,279.08 318.75,280.46 319.00,281.84 319.25,283.22 319.50,284.59 319.75,285.97 320.00,287.35 320.25,288.73 320.50,290.10 320.75,291.48 321.00,292.85 321.25,294.23 321.50,295.60 321.75,296.98 322.00,298.35 322.25,299.72 322.50,301.09 322.75,302.46 323.00,303.83 323.25,305.20 323.50,306.57 323.75,307.94 324.00,309.31 324.25,310.67 324.50,312.04 324.75,313.40 325.00,314.76 325.25,316.12 325.50,317.48 325.75,318.84 326.00,320.20 326.25,321.55 326.50,322.90 326.75,324.26 327.00,325.61 327.25,326.95 327.50,328.30 327.75,329.64 328.00,330.99 328.25,332.32 328.50,333.66 328.75,335.00 329.00,336.33 329.25,337.66 329.50,338.99 329.75,340.31 330.00,341.63 330.25,342.95 330.50,344.27 330.75,345.58 331.00,346.89 331.25,348.19 331.50,349.49 331.75,350.79 332.00,352.09 332.25,353.38 332.50,354.66 332.75,355.94 333.00,357.22 333.25,358.49 333.50,359.76 333.75,361.02 334.00,362.28 334.25,363.54 334.50,364.78 334.75,366.03 335.00,367.26 335.25,368.49 335.50,369.72 335.75,370.94 336.00,372.15 336.25,373.36 336.50,374.56 336.75,375.75 337.00,376.94 337.25,378.12 337.50,379.29 337.75,380.45 338.00,381.61 338.25,382.76 338.50,383.90 338.75,385.04 339.00,386.16 339.25,387.28 339.50,388.39 339.75,389.48 340.00,390.58 340.25,391.66 340.50,392.73 340.75,393.79 341.00,394.84 341.25,395.89 341.50,396.92 341.75,397.94 342.00,398.95 342.25,399.95 342.50,400.94 342.75,401.92 343.00,402.89 343.25,403.85 343.50,404.79 343.75,405.73 344.00,406.65 344.25,407.56 344.50,408.46 344.75,409.34 345.00,410.21 345.25,411.07 345.50,411.92 345.75,412.75 346.00,413.57 346.25,414.38 346.50,415.17 346.75,415.95 347.00,416.71 347.25,417.46 347.50,418.20 347.75,418.92 348.00,419.63 348.25,420.32 348.50,421.00 348.75,421.66 349.00,422.31 349.25,422.94 349.50,423.56 349.75,424.16 350.00,424.74 350.25,425.31 350.50,425.86 350.75,426.40 351.00,426.92 351.25,427.42 351.50,427.91 351.75,428.38 352.00,428.84 352.25,429.27 352.50,429.69 352.75,430.10 353.00,430.48 353.25,430.85 353.50,431.20 353.75,431.54 354.00,431.85 354.25,432.15 354.50,432.43 354.75,432.70 355.00,432.94 355.25,433.17 355.50,433.38 355.75,433.57 356.00,433.75 356.25,433.90 356.50,434.04 356.75,434.16 357.00,434.26 357.25,434.35 357.50,434.41 357.75,434.46 358.00,434.49 358.25,434.50 358.50,434.49 358.75,434.47 359.00,434.42 359.25,434.36 359.50,434.28 359.75,434.18 360.00,434.07 360.25,433.93 360.50,433.78 360.75,433.61 361.00,433.42 361.25,433.21 361.50,432.99 361.75,432.75 362.00,432.49 362.25,432.21 362.50,431.91 362.75,431.60 363.00,431.27 363.25,430.92 363.50,430.56 363.75,430.18 364.00,429.78 364.25,429.36 364.50,428.93 364.75,428.48 365.00,428.01 365.25,427.52 365.50,427.02 365.75,426.51 366.00,425.97 366.25,425.42 366.50,424.86 366.75,424.28 367.00,423.68 367.25,423.06 367.50,422.44 367.75,421.79 368.00,421.13 368.25,420.46 368.50,419.77 368.75,419.06 369.00,418.35 369.25,417.61 369.50,416.86 369.75,416.10 370.00,415.33 370.25,414.54 370.50,413.73 370.75,412.92 371.00,412.09 371.25,411.24 371.50,410.39 371.75,409.52 372.00,408.63 372.25,407.74 372.50,406.83 372.75,405.91 373.00,404.98 373.25,404.04 373.50,403.08 373.75,402.12 374.00,401.14 374.25,400.15 374.50,399.15 374.75,398.14 375.00,397.12 375.25,396.09 375.50,395.05 375.75,394.00 376.00,392.94 376.25,391.87 376.50,390.79 376.75,389.70 377.00,388.61 377.25,387.50 377.50,386.38 377.75,385.26 378.00,384.13 378.25,382.99 378.50,381.84 378.75,380.69 379.00,379.52 379.25,378.35 379.50,377.17 379.75,375.99 380.00,374.80 380.25,373.60 380.50,372.39 380.75,371.18 381.00,369.96 381.25,368.74 381.50,367.51 381.75,366.27 382.00,365.03 382.25,363.79 382.50,362.53 382.75,361.28 383.00,360.01 383.25,358.75 383.50,357.47 383.75,356.20 384.00,354.92 384.25,353.63 384.50,352.34 384.75,351.05 385.00,349.75 385.25,348.45 385.50,347.15 385.75,345.84 386.00,344.53 386.25,343.21 386.50,341.90 386.75,340.58 387.00,339.25 387.25,337.93 387.50,336.60 387.75,335.26 388.00,333.93 388.25,332.59 388.50,331.25 388.75,329.91 389.00,328.57 389.25,327.22 389.50,325.87 389.75,324.53 390.00,323.17 390.25,321.82 390.50,320.47 390.75,319.11 391.00,317.75 391.25,316.39 391.50,315.03 391.75,313.67 392.00,312.31 392.25,310.94 392.50,309.58 392.75,308.21 393.00,306.85 393.25,305.48 393.50,304.11 393.75,302.74 394.00,301.37 394.25,300.00 394.50,298.62 394.75,297.25 395.00,295.88 395.25,294.50 395.50,293.13 395.75,291.75 396.00,290.38 396.25,289.00 396.50,287.62 396.75,286.25 397.00,284.87 397.25,283.49 397.50,282.11 397.75,280.74 398.00,279.36 398.25,277.98 398.50,276.60 398.75,275.22 399.00,273.84 399.25,272.46 399.50,271.09 399.75,269.71 400.00,268.33 400.25,266.95 400.50,265.57 400.75,264.19 401.00,262.81 401.25,261.43 401.50,260.06 401.75,258.68 402.00,257.30 402.25,255.92 402.50,254.54 402.75,253.17 403.00,251.79 403.25,250.41 403.50,249.04 403.75,247.66 404.00,246.28 404.25,244.91 404.50,243.54 404.75,242.16 405.00,240.79 405.25,239.42 405.50,238.04 405.75,236.67 406.00,235.30 406.25,233.93 406.50,232.57 406.75,231.20 407.00,229.83 407.25,228.47 407.50,227.10 407.75,225.74 408.00,224.38 408.25,223.01 408.50,221.65 408.75,220.30 409.00,218.94 409.25,217.59 409.50,216.23 409.75,214.88 410.00,213.53 410.25,212.18 410.50,210.84 410.75,209.49 411.00,208.15 411.25,206.81 411.50,205.47 411.75,204.14 412.00,202.80 412.25,201.47 412.50,200.15 412.75,198.82 413.00,197.50 413.25,196.18 413.50,194.87 413.75,193.55 414.00,192.24 414.25,190.94 414.50,189.64 414.75,188.34 415.00,187.04 415.25,185.75 415.50,184.47 415.75,183.19 416.00,181.91 416.25,180.63 416.50,179.37 416.75,178.10 417.00,176.84 417.25,175.59 417.50,174.34 417.75,173.10 418.00,171.86 418.25,170.63 418.50,169.40 418.75,168.18 419.00,166.97 419.25,165.76 419.50,164.56 419.75,163.37 420.00,162.18 420.25,161.00 420.50,159.83 420.75,158.66 421.00,157.50 421.25,156.35 421.50,155.21 421.75,154.08 422.00,152.95 422.25,151.83 422.50,150.72 422.75,149.62 423.00,148.53 423.25,147.45 423.50,146.38 423.75,145.32 424.00,144.26 424.25,143.22 424.50,142.18 424.75,141.16 425.00,140.15 425.25,139.15 425.50,138.15 425.75,137.17 426.00,136.20 426.25,135.25 426.50,134.30 426.75,133.37 427.00,132.44 427.25,131.53 427.50,130.63 427.75,129.75 428.00,128.87 428.25,128.01 428.50,127.17 428.75,126.33 429.00,125.51 429.25,124.70 429.50,123.91 429.75,123.13 430.00,122.36 430.25,121.61 430.50,120.87 430.75,120.15 431.00,119.44 431.25,118.75 431.50,118.07 431.75,117.40 432.00,116.76 432.25,116.12 432.50,115.50 432.75,114.90 433.00,114.32 433.25,113.75 433.50,113.19 433.75,112.65 434.00,112.13 434.25,111.62 434.50,111.14 434.75,110.66 435.00,110.21 435.25,109.77 435.50,109.35 435.75,108.94 436.00,108.55 436.25,108.18 436.50,107.83 436.75,107.50 437.00,107.18 437.25,106.88 437.50,106.59 437.75,106.33 438.00,106.08 438.25,105.85 438.50,105.64 438.75,105.45 439.00,105.27 439.25,105.11 439.50,104.97 439.75,104.85 440.00,104.75 440.25,104.66 440.50,104.59 440.75,104.54 441.00,104.51 441.25,104.50 441.50,104.51 441.75,104.53 442.00,104.57 442.25,104.63 442.50,104.71 442.75,104.81 443.00,104.92 443.25,105.05 443.50,105.20 443.75,105.37 444.00,105.56 444.25,105.76 444.50,105.99 444.75,106.23 445.00,106.49 445.25,106.76 445.50,107.05 445.75,107.37 446.00,107.69 446.25,108.04 446.50,108.40 446.75,108.79 447.00,109.18 447.25,109.60 447.50,110.03 447.75,110.48 448.00,110.94 448.25,111.43 448.50,111.93 448.75,112.44 449.00,112.97 449.25,113.52 449.50,114.09 449.75,114.67 450.00,115.26 450.25,115.87 450.50,116.50 450.75,117.14 451.00,117.80 451.25,118.47 451.50,119.16 451.75,119.86 452.00,120.58 452.25,121.31 452.50,122.06 452.75,122.82 453.00,123.60 453.25,124.38 453.50,125.19 453.75,126.00 454.00,126.83 454.25,127.67 454.50,128.53 454.75,129.40 455.00,130.28 455.25,131.17 455.50,132.08 455.75,133.00 456.00,133.93 456.25,134.87 456.50,135.82 456.75,136.78 457.00,137.76 457.25,138.75 457.50,139.75 457.75,140.75 458.00,141.77 458.25,142.80 458.50,143.84 458.75,144.89 459.00,145.95 459.25,147.02 459.50,148.10 459.75,149.19 460.00,150.28 460.25,151.39 460.50,152.50 460.75,153.63 461.00,154.76 461.25,155.90 461.50,157.04 461.75,158.20 462.00,159.36 462.25,160.53 462.50,161.71 462.75,162.89 463.00,164.08 463.25,165.28 463.50,166.49 463.75,167.70 464.00,168.92 464.25,170.14 464.50,171.37 464.75,172.60 465.00,173.84 465.25,175.09 465.50,176.34 465.75,177.60 466.00,178.86 466.25,180.13 466.50,181.40 466.75,182.67 467.00,183.95 467.25,185.24 467.50,186.53 467.75,187.82 468.00,189.12 468.25,190.42 468.50,191.72 468.75,193.03 469.00,194.34 469.25,195.65 469.50,196.97 469.75,198.29 470.00,199.62 470.25,200.94 470.50,202.27 470.75,203.60 471.00,204.94 471.25,206.27 471.50,207.61 471.75,208.95 472.00,210.30 472.25,211.64 472.50,212.99 472.75,214.34 473.00,215.69 473.25,217.04 473.50,218.40 473.75,219.75 474.00,221.11 474.25,222.47 474.50,223.83 474.75,225.19 475.00,226.56 475.25,227.92 475.50,229.28 475.75,230.65 476.00,232.02 476.25,233.39 476.50,234.76 476.75,236.13 477.00,237.50 477.25,238.87 477.50,240.24 477.75,241.61 478.00,242.99 478.25,244.36 478.50,245.73 478.75,247.11 479.00,248.49 479.25,249.86 479.50,251.24 479.75,252.62 480.00,253.99 480.25,255.37 480.50,256.75 480.75,258.13 481.00,259.50 481.25,260.88 481.50,262.26 481.75,263.64 482.00,265.02 482.25,266.40 482.50,267.78 482.75,269.16 483.00,270.53 483.25,271.91 483.50,273.29 483.75,274.67 484.00,276.05 484.25,277.43 484.50,278.81 484.75,280.19 485.00,281.56 485.25,282.94 485.50,284.32 485.75,285.70 486.00,287.07 486.25,288.45 486.50,289.83 486.75,291.20 487.00,292.58 487.25,293.95 487.50,295.33 487.75,296.70 488.00,298.07 488.25,299.45 488.50,300.82 488.75,302.19 489.00,303.56 489.25,304.93 489.50,306.30 489.75,307.67 490.00,309.03 490.25,310.40 490.50,311.76 490.75,313.13 491.00,314.49 491.25,315.85 491.50,317.21 491.75,318.57 492.00,319.92 492.25,321.28 492.50,322.63 492.75,323.99 493.00,325.34 493.25,326.68 493.50,328.03 493.75,329.37 494.00,330.72 494.25,332.06 494.50,333.39 494.75,334.73 495.00,336.06 495.25,337.39 495.50,338.72 495.75,340.05 496.00,341.37 496.25,342.69 496.50,344.00 496.75,345.32 497.00,346.63 497.25,347.93 497.50,349.23 497.75,350.53 498.00,351.83 498.25,353.12 498.50,354.40 498.75,355.69 499.00,356.96 499.25,358.24 499.50,359.51 499.75,360.77 500.00,362.03 500.25,363.28 500.50,364.53 500.75,365.78 501.00,367.02 501.25,368.25 501.50,369.47 501.75,370.69 502.00,371.91 502.25,373.12 502.50,374.32 502.75,375.51 503.00,376.70 503.25,377.88 503.50,379.05 503.75,380.22 504.00,381.38 504.25,382.53 504.50,383.67 504.75,384.81 505.00,385.94 505.25,387.05 505.50,388.16 505.75,389.27 506.00,390.36 506.25,391.44 506.50,392.51 506.75,393.58 507.00,394.63 507.25,395.68 507.50,396.71 507.75,397.74 508.00,398.75 508.25,399.75 508.50,400.75 508.75,401.73 509.00,402.70 509.25,403.66 509.50,404.61 509.75,405.54 510.00,406.47 510.25,407.38 510.50,408.28 510.75,409.16 511.00,410.04 511.25,410.90 511.50,411.75 511.75,412.59 512.00,413.41 512.25,414.22 512.50,415.01 512.75,415.79 513.00,416.56 513.25,417.31 513.50,418.05 513.75,418.78 514.00,419.49 514.25,420.18 514.50,420.86 514.75,421.53 515.00,422.18 515.25,422.82 515.50,423.43 515.75,424.04 516.00,424.63 516.25,425.20 516.50,425.75 516.75,426.29 517.00,426.82 517.25,427.33 517.50,427.82 517.75,428.29 518.00,428.75 518.25,429.19 518.50,429.61 518.75,430.02 519.00,430.41 519.25,430.78 519.50,431.13 519.75,431.47 520.00,431.79 520.25,432.09 520.50,432.38 520.75,432.65 521.00,432.90 521.25,433.13 521.50,433.34 521.75,433.54 522.00,433.71 522.25,433.87 522.50,434.02 522.75,434.14 523.00,434.24 523.25,434.33 523.50,434.40 523.75,434.45 524.00,434.48 524.25,434.50 524.50,434.50 524.75,434.47 525.00,434.43 525.25,434.38 525.50,434.30 525.75,434.20 526.00,434.09 526.25,433.96 526.50,433.81 526.75,433.65 527.00,433.46 527.25,433.26 527.50,433.04 527.75,432.80 528.00,432.54 528.25,432.27 528.50,431.98 528.75,431.67 529.00,431.34 529.25,430.99 529.50,430.63 529.75,430.25 530.00,429.86 530.25,429.44 530.50,429.01 530.75,428.57 531.00,428.10 531.25,427.62 531.50,427.12 531.75,426.61 532.00,426.08 532.25,425.53 532.50,424.97 532.75,424.39 533.00,423.80 533.25,423.19 533.50,422.56 533.75,421.92 534.00,421.27 534.25,420.59 534.50,419.91 534.75,419.21 535.00,418.49 535.25,417.76 535.50,417.02 535.75,416.26 536.00,415.48 536.25,414.70 536.50,413.89 536.75,413.08 537.00,412.25 537.25,411.41 537.50,410.56 537.75,409.69 538.00,408.81 538.25,407.92 538.50,407.01 538.75,406.10 539.00,405.17 539.25,404.23 539.50,403.28 539.75,402.31 540.00,401.34 540.25,400.35 540.50,399.35 540.75,398.35 541.00,397.33 541.25,396.30 541.50,395.26 541.75,394.21 542.00,393.15 542.25,392.09 542.50,391.01 542.75,389.92 543.00,388.83 543.25,387.72 543.50,386.61 543.75,385.49 544.00,384.36 544.25,383.22 544.50,382.07 544.75,380.92 545.00,379.76 545.25,378.59 545.50,377.41 545.75,376.23 546.00,375.04 546.25,373.84 546.50,372.63 546.75,371.42 547.00,370.21 547.25,368.98 547.50,367.76 547.75,366.52 548.00,365.28 548.25,364.03 548.50,362.78 548.75,361.53 549.00,360.27 549.25,359.00 549.50,357.73 549.75,356.45 550.00,355.17 550.25,353.89 550.50,352.60 550.75,351.31 551.00,350.01 551.25,348.71 551.50,347.41 551.75,346.10 552.00,344.79 552.25,343.48 552.50,342.16 552.75,340.84 553.00,339.52 553.25,338.19 553.50,336.86 553.75,335.53 554.00,334.20 554.25,332.86 554.50,331.52 554.75,330.18 555.00,328.84 555.25,327.49 555.50,326.14 555.75,324.80 556.00,323.44 556.25,322.09 556.50,320.74 556.75,319.38 557.00,318.02 557.25,316.67 557.50,315.31 557.75,313.94 558.00,312.58 558.25,311.22 558.50,309.85 558.75,308.49 559.00,307.12 559.25,305.75 559.50,304.38 559.75,303.01 560.00,301.64 560.25,300.27 560.50,298.90 560.75,297.52 561.00,296.15 561.25,294.78 561.50,293.40 561.75,292.03 562.00,290.65 562.25,289.28 562.50,287.90 562.75,286.52 563.00,285.15 563.25,283.77 563.50,282.39 563.75,281.01 564.00,279.63 564.25,278.26 564.50,276.88 564.75,275.50 565.00,274.12 565.25,272.74 565.50,271.36 565.75,269.98 566.00,268.60 566.25,267.22 566.50,265.85 566.75,264.47 567.00,263.09 567.25,261.71 567.50,260.33 567.75,258.95 568.00,257.57 568.25,256.20 568.50,254.82 568.75,253.44 569.00,252.06 569.25,250.69 569.50,249.31 569.75,247.94 570.00,246.56 570.25,245.19 570.50,243.81 570.75,242.44 571.00,241.06 571.25,239.69 571.50,238.32 571.75,236.95 572.00,235.58 572.25,234.21 572.50,232.84 572.75,231.47 573.00,230.10 573.25,228.74 573.50,227.37 573.75,226.01 574.00,224.65 574.25,223.29 574.50,221.93 574.75,220.57 575.00,219.21 575.25,217.86 575.50,216.50 575.75,215.15 576.00,213.80 576.25,212.45 576.50,211.10 576.75,209.76 577.00,208.42 577.25,207.08 577.50,205.74 577.75,204.40 578.00,203.07 578.25,201.74 578.50,200.41 578.75,199.09 579.00,197.76 579.25,196.44 579.50,195.13 579.75,193.82 580.00,192.51 580.25,191.20 580.50,189.90 580.75,188.60 581.00,187.30 581.25,186.01 581.50,184.72 581.75,183.44 582.00,182.16 582.25,180.89 582.50,179.62 582.75,178.35 583.00,177.09 583.25,175.84 583.50,174.59 583.75,173.35 584.00,172.11 584.25,170.88 584.50,169.65 584.75,168.43 585.00,167.21 585.25,166.00 585.50,164.80 585.75,163.61 586.00,162.42 586.25,161.24 586.50,160.06 586.75,158.90 587.00,157.74 587.25,156.58 587.50,155.44 587.75,154.30 588.00,153.18 588.25,152.06 588.50,150.95 588.75,149.84 589.00,148.75 589.25,147.67 589.50,146.59 589.75,145.53 590.00,144.47 590.25,143.43 590.50,142.39 590.75,141.36 591.00,140.35 591.25,139.35 591.50,138.35 591.75,137.37 592.00,136.40 592.25,135.44 592.50,134.49 592.75,133.55 593.00,132.63 593.25,131.71 593.50,130.81 593.75,129.92 594.00,129.05 594.25,128.18 594.50,127.33 594.75,126.50 595.00,125.67 595.25,124.86 595.50,124.07 595.75,123.28 596.00,122.51 596.25,121.76 596.50,121.02 596.75,120.29 597.00,119.58 597.25,118.88 597.50,118.20 597.75,117.54 598.00,116.88 598.25,116.25 598.50,115.63 598.75,115.02 599.00,114.43 599.25,113.86 599.50,113.30 599.75,112.76 600.00,112.23 600.25,111.72 600.50,111.23 600.75,110.76 601.00,110.30 601.25,109.86 601.50,109.43 601.75,109.02 602.00,108.63 602.25,108.26 602.50,107.90 602.75,107.56 603.00,107.24 603.25,106.94 603.50,106.65 603.75,106.38 604.00,106.13 604.25,105.90 604.50,105.68 604.75,105.48 605.00,105.30 605.25,105.14 605.50,105.00 605.75,104.87 606.00,104.77 606.25,104.68 606.50,104.61 606.75,104.55 607.00,104.52 607.25,104.50 607.50,104.50 607.75,104.52 608.00,104.56 608.25,104.62 608.50,104.69 608.75,104.79 609.00,104.90 609.25,105.03 609.50,105.17 609.75,105.34 610.00,105.52 610.25,105.72 610.50,105.94 610.75,106.18 611.00,106.43 611.25,106.70 611.50,106.99 611.75,107.30 612.00,107.63 612.25,107.97 612.50,108.33 612.75,108.71 613.00,109.10 613.25,109.51 613.50,109.94 613.75,110.39 614.00,110.85 614.25,111.33 614.50,111.83 614.75,112.34 615.00,112.87 615.25,113.41 615.50,113.97 615.75,114.55 616.00,115.14 616.25,115.75 616.50,116.37 616.75,117.01 617.00,117.67 617.25,118.34 617.50,119.02 617.75,119.72 618.00,120.44 618.25,121.17 618.50,121.91 618.75,122.67 619.00,123.44 619.25,124.23 619.50,125.02 619.75,125.84 620.00,126.66 620.25,127.50 620.50,128.36 620.75,129.22 621.00,130.10 621.25,130.99 621.50,131.90 621.75,132.81 622.00,133.74 622.25,134.68 622.50,135.63 622.75,136.59 623.00,137.56 623.25,138.55 623.50,139.55 623.75,140.55 624.00,141.57 624.25,142.60 624.50,143.63 624.75,144.68 625.00,145.74 625.25,146.81 625.50,147.88 625.75,148.97 626.00,150.06 626.25,151.17 626.50,152.28 626.75,153.40 627.00,154.53 627.25,155.67 627.50,156.81 627.75,157.97 628.00,159.13 628.25,160.30 628.50,161.47 628.75,162.66 629.00,163.85 629.25,165.04 629.50,166.25 629.75,167.46 630.00,168.67 630.25,169.89 630.50,171.12 630.75,172.36 631.00,173.60 631.25,174.84 631.50,176.09 631.75,177.35 632.00,178.61 632.25,179.87 632.50,181.14 632.75,182.42 633.00,183.70 633.25,184.98 633.50,186.27 633.75,187.56 634.00,188.86 634.25,190.16 634.50,191.46 634.75,192.77 635.00,194.08 635.25,195.39 635.50,196.71 635.75,198.03 636.00,199.35 636.25,200.68 636.50,202.01 636.75,203.34 637.00,204.67 637.25,206.01 637.50,207.34 637.75,208.69 638.00,210.03 638.25,211.37 638.50,212.72 638.75,214.07 639.00,215.42 639.25,216.77 639.50,218.13 639.75,219.48 640.00,220.84 640.25,222.20 640.50,223.56 640.75,224.92 641.00,226.28 641.25,227.65 641.50,229.01 641.75,230.38 642.00,231.74 642.25,233.11 642.50,234.48 642.75,235.85 643.00,237.22 643.25,238.59 643.50,239.97 643.75,241.34 644.00,242.71 644.25,244.09 644.50,245.46 644.75,246.84 645.00,248.21 645.25,249.59 645.50,250.96 645.75,252.34 646.00,253.72 646.25,255.09 646.50,256.47 646.75,257.85 647.00,259.23 647.25,260.61 647.50,261.99 647.75,263.36 648.00,264.74 648.25,266.12 648.50,267.50 648.75,268.88 649.00,270.26 649.25,271.64 649.50,273.02 649.75,274.40 650.00,275.77 650.25,277.15 650.50,278.53 650.75,279.91 651.00,281.29 651.25,282.67 651.50,284.04 651.75,285.42 652.00,286.80 652.25,288.17 652.50,289.55 652.75,290.93 653.00,292.30 653.25,293.68 653.50,295.05 653.75,296.43 654.00,297.80 654.25,299.17 654.50,300.54 654.75,301.92 655.00,303.29 655.25,304.66 655.50,306.02 655.75,307.39 656.00,308.76 656.25,310.13 656.50,311.49 656.75,312.85 657.00,314.22 657.25,315.58 657.50,316.94 657.75,318.30 658.00,319.65 658.25,321.01 658.50,322.36 658.75,323.71 659.00,325.07 659.25,326.41 659.50,327.76 659.75,329.11 660.00,330.45 660.25,331.79 660.50,333.13 660.75,334.46 661.00,335.80 661.25,337.13 661.50,338.46 661.75,339.78 662.00,341.10 662.25,342.42 662.50,343.74 662.75,345.05 663.00,346.36 663.25,347.67 663.50,348.97 663.75,350.27 664.00,351.57 664.25,352.86 664.50,354.15 664.75,355.43 665.00,356.71 665.25,357.98 665.50,359.25 665.75,360.52 666.00,361.78 666.25,363.03 666.50,364.28 666.75,365.53 667.00,366.77 667.25,368.00 667.50,369.23 667.75,370.45 668.00,371.67 668.25,372.88 668.50,374.08 668.75,375.27 669.00,376.46 669.25,377.65 669.50,378.82 669.75,379.99 670.00,381.15 670.25,382.30 670.50,383.45 670.75,384.58 671.00,385.71 671.25,386.83 671.50,387.94 671.75,389.05 672.00,390.14 672.25,391.23 672.50,392.30 672.75,393.37 673.00,394.42 673.25,395.47 673.50,396.51 673.75,397.53 674.00,398.55 674.25,399.55 674.50,400.55 674.75,401.53 675.00,402.51 675.25,403.47 675.50,404.42 675.75,405.36 676.00,406.28 676.25,407.20 676.50,408.10 676.75,408.99 677.00,409.86 677.25,410.73 677.50,411.58 677.75,412.42 678.00,413.24 678.25,414.06 678.50,414.85 678.75,415.64 679.00,416.41 679.25,417.17 679.50,417.91 679.75,418.63 680.00,419.35 680.25,420.05 680.50,420.73 680.75,421.40 681.00,422.05 681.25,422.69 681.50,423.31 681.75,423.92 682.00,424.51 682.25,425.09 682.50,425.64 682.75,426.19 683.00,426.71 683.25,427.23 683.50,427.72 683.75,428.20 684.00,428.66 684.25,429.10 684.50,429.53 684.75,429.94 685.00,430.33 685.25,430.71 685.50,431.06 685.75,431.41 686.00,431.73 686.25,432.04 686.50,432.32 686.75,432.59 687.00,432.85 687.25,433.08 687.50,433.30 687.75,433.50 688.00,433.68 688.25,433.84 688.50,433.99 688.75,434.12 689.00,434.22 689.25,434.32 689.50,434.39 689.75,434.44 690.00,434.48 690.25,434.50 690.50,434.50 690.75,434.48 691.00,434.44 691.25,434.39 691.50,434.32 691.75,434.22 692.00,434.12 692.25,433.99 692.50,433.84 692.75,433.68 693.00,433.50 693.25,433.30 693.50,433.08 693.75,432.85 694.00,432.59 694.25,432.32 694.50,432.04 694.75,431.73 695.00,431.41 695.25,431.06 695.50,430.71 695.75,430.33 696.00,429.94 696.25,429.53 696.50,429.10 696.75,428.66 697.00,428.20 697.25,427.72 697.50,427.23 697.75,426.71 698.00,426.19 698.25,425.64 698.50,425.09 698.75,424.51 699.00,423.92 699.25,423.31 699.50,422.69 699.75,422.05 700.00,421.40 700.25,420.73 700.50,420.05 700.75,419.35 701.00,418.63 701.25,417.91 701.50,417.17 701.75,416.41 702.00,415.64 702.25,414.85 702.50,414.06 702.75,413.24 703.00,412.42 703.25,411.58 703.50,410.73 703.75,409.86 704.00,408.99 704.25,408.10 704.50,407.20 704.75,406.28 705.00,405.36 705.25,404.42 705.50,403.47 705.75,402.51 706.00,401.53 706.25,400.55 706.50,399.55 706.75,398.55 707.00,397.53 707.25,396.51 707.50,395.47 707.75,394.42 708.00,393.37 708.25,392.30 708.50,391.23 708.75,390.14 709.00,389.05 709.25,387.94 709.50,386.83 709.75,385.71 710.00,384.58 710.25,383.45 710.50,382.30 710.75,381.15 711.00,379.99 711.25,378.82 711.50,377.65 711.75,376.46 712.00,375.27 712.25,374.08 712.50,372.88 712.75,371.67 713.00,370.45 713.25,369.23 713.50,368.00 713.75,366.77 714.00,365.53 714.25,364.28 714.50,363.03 714.75,361.78 715.00,360.52 715.25,359.25 715.50,357.98 715.75,356.71 716.00,355.43 716.25,354.15 716.50,352.86 716.75,351.57 717.00,350.27 717.25,348.97 717.50,347.67 717.75,346.36 718.00,345.05 718.25,343.74 718.50,342.42 718.75,341.10 719.00,339.78 719.25,338.46 719.50,337.13 719.75,335.80 720.00,334.46 720.25,333.13 720.50,331.79 720.75,330.45 721.00,329.11 721.25,327.76 721.50,326.41 721.75,325.07 722.00,323.71 722.25,322.36 722.50,321.01 722.75,319.65 723.00,318.30 723.25,316.94 723.50,315.58 723.75,314.22 724.00,312.85 724.25,311.49 724.50,310.13 724.75,308.76 725.00,307.39 725.25,306.02 725.50,304.66 725.75,303.29 726.00,301.92 726.25,300.54 726.50,299.17 726.75,297.80 727.00,296.43 727.25,295.05 727.50,293.68 727.75,292.30 728.00,290.93 728.25,289.55 728.50,288.17 728.75,286.80 729.00,285.42 729.25,284.04 729.50,282.67 729.75,281.29 730.00,279.91 730.25,278.53 730.50,277.15 730.75,275.77 731.00,274.40 731.25,273.02 731.50,271.64 731.75,270.26 732.00,268.88 732.25,267.50 732.50,266.12 732.75,264.74 733.00,263.36 733.25,261.99 733.50,260.61 733.75,259.23 734.00,257.85 734.25,256.47 734.50,255.09 734.75,253.72 735.00,252.34 735.25,250.96 735.50,249.59 735.75,248.21 736.00,246.84 736.25,245.46 736.50,244.09 736.75,242.71 737.00,241.34 737.25,239.97 737.50,238.59 737.75,237.22 738.00,235.85 738.25,234.48 738.50,233.11 738.75,231.74 739.00,230.38 739.25,229.01 739.50,227.65 739.75,226.28 740.00,224.92 740.25,223.56 740.50,222.20 740.75,220.84 741.00,219.48 741.25,218.13 741.50,216.77 741.75,215.42 742.00,214.07 742.25,212.72 742.50,211.37 742.75,210.03 743.00,208.69 743.25,207.34 743.50,206.01 743.75,204.67 744.00,203.34 744.25,202.01 744.50,200.68 744.75,199.35 745.00,198.03 745.25,196.71 745.50,195.39 745.75,194.08 746.00,192.77 746.25,191.46 746.50,190.16 746.75,188.86 747.00,187.56 747.25,186.27 747.50,184.98 747.75,183.70 748.00,182.42 748.25,181.14 748.50,179.87 748.75,178.61 749.00,177.35 749.25,176.09 749.50,174.84 749.75,173.60 750.00,172.36 750.25,171.12 750.50,169.89 750.75,168.67 751.00,167.46 751.25,166.25 751.50,165.04 751.75,163.85 752.00,162.66 752.25,161.47 752.50,160.30 752.75,159.13 753.00,157.97 753.25,156.81 753.50,155.67 753.75,154.53 754.00,153.40 754.25,152.28 754.50,151.17 754.75,150.06 755.00,148.97 755.25,147.88 755.50,146.81 755.75,145.74 756.00,144.68 756.25,143.63 756.50,142.60 756.75,141.57 757.00,140.55 757.25,139.55 757.50,138.55 757.75,137.56 758.00,136.59 758.25,135.63 758.50,134.68 758.75,133.74 759.00,132.81 759.25,131.90 759.50,130.99 759.75,130.10 760.00,129.22 760.25,128.36 760.50,127.50 760.75,126.66 761.00,125.84 761.25,125.02 761.50,124.23 761.75,123.44 762.00,122.67 762.25,121.91 762.50,121.17 762.75,120.44 763.00,119.72 763.25,119.02 763.50,118.34 763.75,117.67 764.00,117.01 764.25,116.37 764.50,115.75 764.75,115.14 765.00,114.55 765.25,113.97 765.50,113.41 765.75,112.87 766.00,112.34 766.25,111.83 766.50,111.33 766.75,110.85 767.00,110.39 767.25,109.94 767.50,109.51 767.75,109.10 768.00,108.71 768.25,108.33 768.50,107.97 768.75,107.63 769.00,107.30 769.25,106.99 769.50,106.70 769.75,106.43 770.00,106.18 770.25,105.94 770.50,105.72 770.75,105.52 771.00,105.34 771.25,105.17 771.50,105.03 771.75,104.90 772.00,104.79 772.25,104.69 772.50,104.62 772.75,104.56 773.00,104.52 773.25,104.50 773.50,104.50 773.75,104.52 774.00,104.55 774.25,104.61 774.50,104.68 774.75,104.77 775.00,104.87 775.25,105.00 775.50,105.14 775.75,105.30 776.00,105.48 776.25,105.68 776.50,105.90 776.75,106.13 777.00,106.38 777.25,106.65 777.50,106.94 777.75,107.24 778.00,107.56 778.25,107.90 778.50,108.26 778.75,108.63 779.00,109.02 779.25,109.43 779.50,109.86 779.75,110.30 780.00,110.76" fill="none" stroke="#dc2a2a" stroke-width="1.6"/></g></g>
</svg>
<svg width="800" height="600" viewBox="0 0 800 600">
<!-- logo -->
<circle cx="16.5" cy="9.5" r="6" fill="none" stroke="#dca434" stroke-width="3.4"/>
<path d="M27.75,2 V10.25 A4.5,4.5 0 0 0 36.75,10.25 V2 M36.75,10.25 A4,4.5 0 0 0 44.75,10.25 V2" fill="none" stroke="#051238" stroke-width="3.4"/>
<circle cx="55" cy="9.5" r="5.8" fill="none" stroke="#051238" stroke-width="3.4"/>
<path d="M66.25,17 V9.1 A4.875,4.875 0 0 1 76,9.1 V17" fill="none" stroke="#051238" stroke-width="3.4"/>
<!-- trig pill -->
<rect x="120" y="1" width="81" height="17" rx="8.5" fill="#1ed21e"/>
<!-- trigger bar -->
<rect x="250" y="0" width="300" height="18.5" rx="8" fill="#000"/>
<rect x="260" y="9" width="281" height="1" fill="#c8c89a"/>
<rect x="294" y="2" width="2" height="16.5" fill="#b8b8b8"/>
<rect x="294" y="2" width="3" height="1" fill="#b8b8b8"/>
<rect x="294" y="17.5" width="3" height="1" fill="#b8b8b8"/>
<rect x="504" y="2" width="2" height="16.5" fill="#b8b8b8"/>
<rect x="503" y="2" width="3" height="1" fill="#b8b8b8"/>
<rect x="503" y="17.5" width="3" height="1" fill="#b8b8b8"/>
<path d="M398,2.5 H403.5 V4 H401.5 V7 H400 V4 H398 Z" fill="#b040c0"/>
<!-- time pill -->
<rect x="560" y="1" width="108.5" height="17.5" rx="8.5" fill="#000"/>
<path d="M565,3.5 H576.5 V13 L570.7,16.5 L565,13 Z" fill="none" stroke="#8a3ab8" stroke-width="1.6"/>
<path d="M567.5,6 H574 V7.5 H571.5 V13 H570 V7.5 H567.5 Z" fill="#8a3ab8"/>
<!-- clock pill -->
<rect x="684" y="1" width="58.5" height="17.5" rx="8.5" fill="#000"/>
<!-- usb icon -->
<path d="M758,11.5 L764,8 L767.5,11.5 L761,15.5 Z" fill="#a8b8cc"/>
<path d="M760,11.5 L763.5,9.8 L765,11.5 L761.5,13.5 Z" fill="#403848"/>
<path d="M755.7,5.5 L759,3.3 L763,6.5 L760.5,8.8 L757.5,8.3 Z" fill="#3cc040"/>
<path d="M759,3.3 L763,6.5 L760.5,8.8 L760,6 Z" fill="#108820"/>
<!-- shield marker -->
<path d="M395,20 H407.5 V31 L401.2,35 L395,31 Z" fill="#000" stroke="#7a34b0" stroke-width="1.3"/>
<path d="M397.5,24 H405 V25.5 H402 V31.5 H400.5 V25.5 H397.5 Z" fill="#a040c8"/>
<!-- ch1 marker -->
<path d="M0.5,262 H14.5 L18,270 L14.5,277.5 H0.5 Z" fill="#000" stroke="#c02040" stroke-width="1"/>
<!-- trig level -->
<path d="M783,269 L793.5,264 V274 Z" fill="#a020e0"/>
</svg>
<svg width="800" height="600" viewBox="0 0 800 600">
<!-- channel panel -->
<rect x="25" y="477" width="319" height="41" fill="#5e9fb2"/>
<rect x="25" y="477" width="319" height="1.3" fill="#98a8b4"/>
<rect x="25" y="477" width="1.3" height="41" fill="#98a8b4"/>
<rect x="26.3" y="496" width="207" height="2.5" fill="#4a6a88"/>
<rect x="26.3" y="478.3" width="207" height="18" rx="3" fill="#000"/>
<rect x="26.3" y="498.2" width="207" height="18.3" rx="3" fill="#000"/>
<rect x="236.7" y="478.3" width="105.5" height="38.2" rx="4" fill="#000"/>
<rect x="20" y="516.8" width="760" height="1.6" fill="#e8f4f8"/>
<circle cx="35.4" cy="487.9" r="7.9" fill="#e01212"/>
<circle cx="35.4" cy="507.5" r="7.9" fill="#e6e02a"/>
<!-- measurement frame -->
<rect x="0" y="518.4" width="320" height="81.6" fill="#5aa0b2"/>
<rect x="2" y="520" width="315.5" height="76.5" fill="#0c86e0"/>
<rect x="1" y="520" width="316.5" height="56" rx="3" fill="#000"/>
<circle cx="9.4" cy="529.3" r="7.8" fill="#e01212"/>
<circle cx="9.4" cy="548.4" r="7.8" fill="#e01212"/>
<circle cx="9.4" cy="567.5" r="7.8" fill="#e01212"/>
<circle cx="168" cy="529.4" r="7.4" fill="#e6e02a"/>
<circle cx="168" cy="548.5" r="7.4" fill="#e6e02a"/>
<circle cx="168" cy="567.6" r="7.4" fill="#e6e02a"/>
<!-- right area -->
<rect x="319" y="537.5" width="481" height="62.5" fill="#045fa6"/>
<rect x="319" y="519.8" width="99" height="17.2" rx="8.5" fill="#000"/>
<rect x="665.3" y="519.9" width="128.7" height="17.5" rx="8.7" fill="#000"/>
<circle cx="675.4" cy="528.7" r="7.9" fill="#e01212"/>
<path d="M685,535 H692.5 L697.5,522.5 H703.5" fill="none" stroke="#f0f0f0" stroke-width="1.2"/>
<!-- digits -->
<g fill="none" stroke-linecap="butt">
<path d="M32.2,486 L35.2,484.5 V492.3" stroke="#700808" stroke-width="1.6"/>
<path d="M32.2,505.5 Q32.5,503 35,503 Q38,503 38,505.5 Q38,507.2 35,509.5 L32,512 H38.5" stroke="#000" stroke-width="1.4"/>
<path d="M6.5,527.5 L8.7,525.8 V533.5" stroke="#800808" stroke-width="1.6"/>
<path d="M6.5,546.7 L8.7,545 V552.7" stroke="#800808" stroke-width="1.6"/>
<path d="M6.5,565.8 L8.7,564.1 V571.8" stroke="#800808" stroke-width="1.6"/>
<path d="M165.4,526.8 Q165.6,524.4 168.2,524.4 Q171,524.4 171,526.8 Q171,528.5 168,530.8 L165.3,533.3 H171.3" stroke="#000" stroke-width="1.4"/>
<path d="M165.4,545.9 Q165.6,543.5 168.2,543.5 Q171,543.5 171,545.9 Q171,547.6 168,549.9 L165.3,552.4 H171.3" stroke="#000" stroke-width="1.4"/>
<path d="M165.4,565 Q165.6,562.6 168.2,562.6 Q171,562.6 171,565 Q171,566.7 168,569 L165.3,571.5 H171.3" stroke="#000" stroke-width="1.4"/>
<path d="M672.5,527 L675,525 V533" stroke="#800808" stroke-width="1.6"/>
<path d="M5.5,267 L8.5,265 V276" stroke="#e02030" stroke-width="1.8"/>
</g>
<!-- buttons -->
<rect x="319" y="597.5" width="481" height="2.5" fill="#066cc0"/>
<rect x="321.5" y="539.5" width="90.5" height="57.5" rx="3" fill="#0650a8"/>
<rect x="323" y="541" width="87" height="53.5" rx="2.5" fill="#5ab0f5"/>
<rect x="324.5" y="542.5" width="85.5" height="52" fill="#0c86e4"/>
<rect x="340.6" y="571" width="50.4" height="20" fill="#dce4ec"/>
<rect x="596" y="539.5" width="91.5" height="57.5" rx="3" fill="#0650a8"/>
<rect x="597.5" y="541" width="87.5" height="53.5" rx="2.5" fill="#5ab0f5"/>
<rect x="599" y="542.5" width="86" height="52" fill="#0c86e4"/>
</svg>
<div class="t" style="left:139.6px;top:3.4px;color:#001000;-webkit-text-stroke:0.2px #1ed21e">Trig</div>
<div class="t" style="left:578.8px;top:4.5px;color:#f0f0f0;-webkit-text-stroke:0.15px #000"><span class=z>0</span>.<span class=z>0</span><span class=z>0</span><span class=z>0</span>ns</div>
<div class="t" style="left:687.8px;top:3.5px;color:#f0f0f0;-webkit-text-stroke:0.15px #000">2<span class=z>0</span>:58</div>
<div class="t" style="left:43.5px;top:482.5px;color:#ec3c3c;-webkit-text-stroke:0.15px #000">1V~</div>
<div class="t" style="left:130.4px;top:482.5px;color:#ec3c3c;-webkit-text-stroke:0.15px #000"><span class=z>0</span>.<span class=z>0</span><span class=z>0</span>div</div>
<div class="t" style="left:42.4px;top:501.0px;color:#ececa8;-webkit-text-stroke:0.15px #000">2<span class=z>0</span><span class=z>0</span>mV~</div>
<div class="t" style="left:130.4px;top:501.0px;color:#ececa8;-webkit-text-stroke:0.15px #000"><span class=z>0</span>.<span class=z>0</span><span class=z>0</span>div</div>
<div class="t" style="left:249.9px;top:480.5px;color:#f0f0f0;-webkit-text-stroke:0.15px #000">(25MS/s)</div>
<div class="t" style="left:248.0px;top:500.2px;color:#f0f0f0;-webkit-text-stroke:0.15px #000">Depth:1K</div>
<div class="t" style="left:20.0px;top:522.5px;color:#ec3c3c;-webkit-text-stroke:0.15px #000">F:15<span class=z>0</span>.6KHz</div>
<div class="t" style="left:20.0px;top:541.5px;color:#ec3c3c;-webkit-text-stroke:0.15px #000">Vp:6.64<span class=z>0</span>v</div>
<div class="t" style="left:20.0px;top:561.5px;color:#ec3c3c;-webkit-text-stroke:0.15px #000">Vk:2.3<span class=z>0</span>4v</div>
<div class="t" style="left:180.5px;top:522.5px;color:#ececa8;-webkit-text-stroke:0.15px #000">F:OFF</div>
<div class="t" style="left:180.5px;top:541.5px;color:#ececa8;-webkit-text-stroke:0.15px #000">Vp:OFF</div>
<div class="t" style="left:180.5px;top:561.5px;color:#ececa8;-webkit-text-stroke:0.15px #000">Vk:OFF</div>
<div class="t" style="left:331.9px;top:522.1px;color:#f0f0f0;-webkit-text-stroke:0.15px #000">M:2.<span class=z>0</span>us</div>
<div class="t" style="left:706.0px;top:522.5px;color:#f0f0f0;-webkit-text-stroke:0.15px #000"><span class=z>0</span>.<span class=z>0</span><span class=z>0</span>mV</div>
<div class="t" style="left:345.0px;top:549.5px;color:#020c3c;-webkit-text-stroke:0.05px #0c86e4">Type</div>
<div class="t" style="left:341.5px;top:574.1px;color:#000000;-webkit-text-stroke:0.1px #dce4ec">Image</div>
<div class="t" style="left:620.6px;top:562.5px;color:#020c3c;-webkit-text-stroke:0.05px #0c86e4">Save</div>
</body></html>
